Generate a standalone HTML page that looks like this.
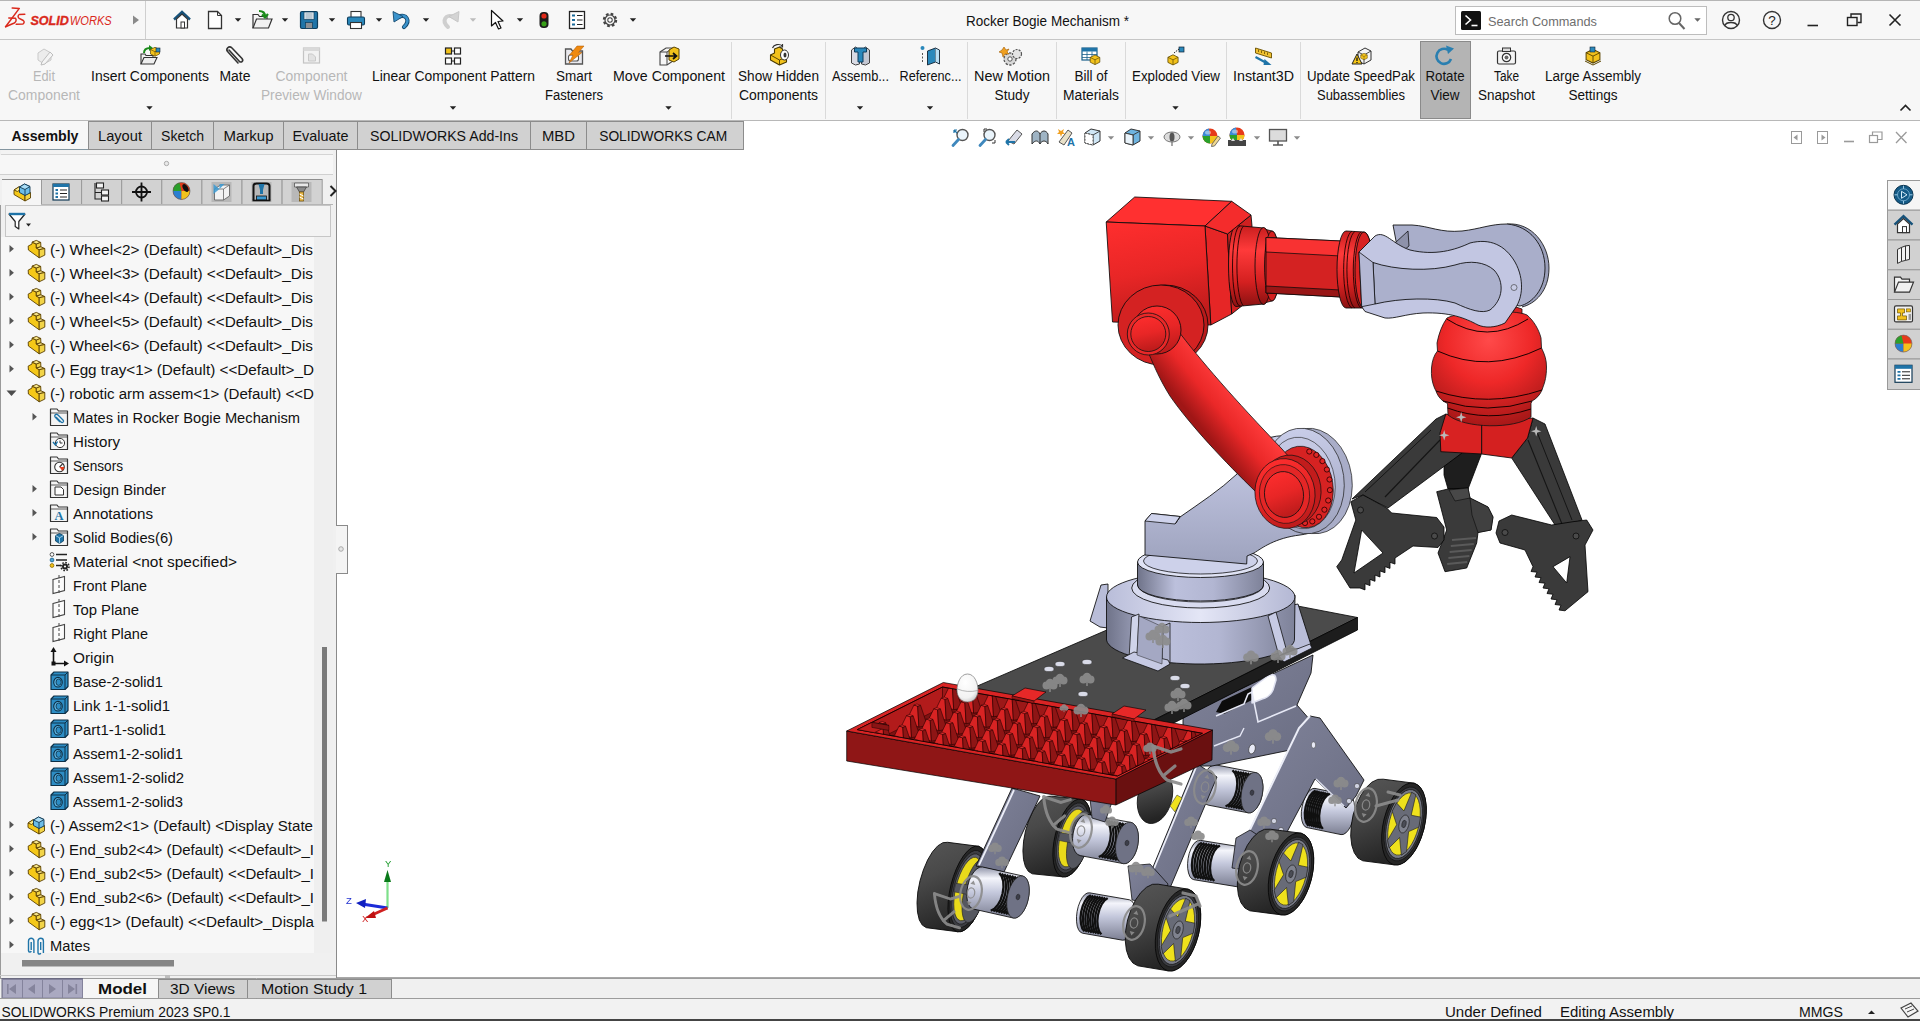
<!DOCTYPE html>
<html lang="en">
<head>
<meta charset="utf-8">
<title>Rocker Bogie Mechanism - SOLIDWORKS</title>
<style>
*{box-sizing:border-box;margin:0;padding:0}
html,body{width:1920px;height:1021px;overflow:hidden;background:#fff}
body{font-family:"Liberation Sans",sans-serif;font-size:14px;color:#111;position:relative}
svg{display:block;overflow:hidden}
#titlebar{position:absolute;left:0;top:0;width:1920px;height:40px;background:#f7f7f7;border-top:1px solid #b5b5b5;border-bottom:1px solid #c6c6c6}
#ribbonbg{position:absolute;left:0;top:40px;width:1920px;height:81px;background:#f7f7f7;border-bottom:1px solid #b8b8b8}
</style>
</head>
<body>
<div id="titlebar"></div>
<div id="ribbonbg"></div>
<svg width="1920" height="1021" viewBox="0 0 1920 1021" style="position:absolute;left:0;top:0">
<defs>
<linearGradient id="gTyre" x1="0" y1="0" x2="0.35" y2="1"><stop offset="0" stop-color="#565656"/><stop offset="0.4" stop-color="#494949"/><stop offset="1" stop-color="#242424"/></linearGradient>
<linearGradient id="gMotor" x1="0" y1="0" x2="0" y2="1"><stop offset="0" stop-color="#8f93a8"/><stop offset="0.22" stop-color="#f4f5fb"/><stop offset="0.5" stop-color="#c4c8dc"/><stop offset="1" stop-color="#7c7f92"/></linearGradient>
<linearGradient id="gPlate" x1="0" y1="0" x2="1" y2="1"><stop offset="0" stop-color="#80839a"/><stop offset="1" stop-color="#6a6d82"/></linearGradient>
<linearGradient id="gRedH" x1="0" y1="0" x2="0" y2="1"><stop offset="0" stop-color="#ff3030"/><stop offset="0.6" stop-color="#e22424"/><stop offset="1" stop-color="#b81a1a"/></linearGradient>
<linearGradient id="gRedBox" x1="0" y1="0" x2="0.2" y2="1"><stop offset="0" stop-color="#ff2e2e"/><stop offset="0.55" stop-color="#e82626"/><stop offset="1" stop-color="#c01c1c"/></linearGradient>
<linearGradient id="gRedCyl" x1="0" y1="0" x2="0" y2="1"><stop offset="0" stop-color="#c81e1e"/><stop offset="0.3" stop-color="#ff3a3a"/><stop offset="0.7" stop-color="#d42020"/><stop offset="1" stop-color="#8a1212"/></linearGradient>
<linearGradient id="gArm" gradientUnits="userSpaceOnUse" x1="1250" y1="375" x2="1195" y2="420"><stop offset="0" stop-color="#b81a1a"/><stop offset="0.3" stop-color="#ff3c3c"/><stop offset="0.65" stop-color="#ea2828"/><stop offset="1" stop-color="#a01616"/></linearGradient>
<radialGradient id="gDome" cx="0.5" cy="0.25" r="0.75"><stop offset="0" stop-color="#ff4a4a"/><stop offset="0.5" stop-color="#ee2828"/><stop offset="1" stop-color="#a81818"/></radialGradient>
<linearGradient id="gGrey" x1="0" y1="0" x2="0" y2="1"><stop offset="0" stop-color="#c9cde9"/><stop offset="1" stop-color="#9ea3be"/></linearGradient>
<linearGradient id="gGreyH" x1="0" y1="0" x2="1" y2="0"><stop offset="0" stop-color="#6f7389"/><stop offset="0.3" stop-color="#bcc0dc"/><stop offset="0.6" stop-color="#b2b6d2"/><stop offset="1" stop-color="#7e8299"/></linearGradient>
<linearGradient id="gGreyTop" x1="0" y1="0" x2="1" y2="0"><stop offset="0" stop-color="#b9bdd9"/><stop offset="0.5" stop-color="#e4e6f6"/><stop offset="1" stop-color="#b4b8d4"/></linearGradient>
<linearGradient id="gDark" x1="0" y1="0" x2="1" y2="1"><stop offset="0" stop-color="#444"/><stop offset="1" stop-color="#2c2c2c"/></linearGradient>
</defs>
<ellipse cx="1155.0" cy="797.0" rx="17.0" ry="27.0" fill="url(#gTyre)" stroke="#111" stroke-width="0.8" transform="rotate(14 1155.0 797.0)" />
<polygon points="1301.3,816.2 1301.4,811.3 1302.2,806.2 1303.5,801.2 1305.4,796.6 1307.6,792.9 1310.1,790.1 1312.6,788.6 1315.0,788.4 1349.0,795.4 1351.2,796.5 1352.9,798.9 1354.1,802.4 1354.7,806.8 1354.6,811.7 1353.8,816.8 1352.5,821.8 1350.6,826.4 1348.4,830.1 1345.9,832.9 1343.4,834.4 1341.0,834.6 1307.0,827.6 1304.8,826.5 1303.1,824.1 1301.9,820.6" fill="url(#gMotor)" stroke="#0a0a0a" stroke-width="0.85" stroke-linejoin="round" />
<polyline points="1308.5,825.8 1306.4,822.8 1305.1,818.4 1304.8,812.8 1305.6,806.9 1307.3,801.1 1309.7,796.2 1312.6,792.5 1315.7,790.6" fill="none" stroke="#101010" stroke-width="2.3"/>
<polyline points="1310.5,826.2 1308.4,823.3 1307.2,818.8 1306.9,813.3 1307.6,807.3 1309.3,801.5 1311.7,796.6 1314.7,793.0 1317.8,791.1" fill="none" stroke="#101010" stroke-width="2.3"/>
<polyline points="1312.6,826.7 1310.5,823.7 1309.2,819.2 1308.9,813.7 1309.7,807.7 1311.3,802.0 1313.8,797.0 1316.7,793.4 1319.8,791.5" fill="none" stroke="#101010" stroke-width="2.3"/>
<polyline points="1314.6,827.1 1312.5,824.1 1311.2,819.6 1311.0,814.1 1311.7,808.1 1313.4,802.4 1315.8,797.4 1318.7,793.8 1321.9,791.9" fill="none" stroke="#101010" stroke-width="2.3"/>
<polyline points="1316.7,827.5 1314.5,824.5 1313.3,820.0 1313.0,814.5 1313.7,808.6 1315.4,802.8 1317.8,797.8 1320.8,794.2 1323.9,792.3" fill="none" stroke="#101010" stroke-width="2.3"/>
<polyline points="1318.7,827.9 1316.6,824.9 1315.3,820.5 1315.0,814.9 1315.8,809.0 1317.5,803.2 1319.9,798.3 1322.8,794.6 1325.9,792.7" fill="none" stroke="#101010" stroke-width="2.3"/>
<polyline points="1320.7,828.3 1318.6,825.4 1317.4,820.9 1317.1,815.4 1317.8,809.4 1319.5,803.6 1321.9,798.7 1324.9,795.1 1328.0,793.2" fill="none" stroke="#101010" stroke-width="2.3"/>
<polyline points="1322.8,828.8 1320.7,825.8 1319.4,821.3 1319.1,815.8 1319.9,809.8 1321.5,804.1 1324.0,799.1 1326.9,795.5 1330.0,793.6" fill="none" stroke="#101010" stroke-width="2.3"/>
<polygon points="1201.0,788.3 1201.7,783.0 1203.0,777.9 1205.0,773.2 1207.5,769.4 1210.2,766.6 1213.1,765.0 1215.9,764.9 1255.9,772.6 1258.4,773.8 1260.5,776.3 1262.0,779.9 1262.9,784.4 1263.0,789.4 1262.3,794.7 1261.0,799.8 1259.0,804.5 1256.5,808.3 1253.8,811.1 1250.9,812.7 1248.1,812.8 1208.1,805.1 1205.6,803.9 1203.5,801.4 1202.0,797.8 1201.1,793.4" fill="url(#gMotor)" stroke="#0a0a0a" stroke-width="0.85" stroke-linejoin="round" />
<polyline points="1232.5,770.2 1235.1,773.3 1236.8,777.9 1237.3,783.6 1236.7,789.8 1235.0,795.7 1232.4,800.7 1229.1,804.4 1225.6,806.4" fill="none" stroke="#101010" stroke-width="2.3"/>
<polyline points="1235.1,770.7 1237.6,773.8 1239.3,778.4 1239.8,784.1 1239.2,790.2 1237.5,796.2 1234.9,801.2 1231.6,804.9 1228.1,806.9" fill="none" stroke="#101010" stroke-width="2.3"/>
<polyline points="1237.6,771.2 1240.2,774.3 1241.8,778.9 1242.4,784.6 1241.7,790.7 1240.0,796.6 1237.4,801.7 1234.2,805.4 1230.6,807.3" fill="none" stroke="#101010" stroke-width="2.3"/>
<polyline points="1240.1,771.7 1242.7,774.8 1244.3,779.4 1244.9,785.1 1244.3,791.2 1242.5,797.1 1239.9,802.2 1236.7,805.9 1233.1,807.8" fill="none" stroke="#101010" stroke-width="2.3"/>
<polyline points="1242.6,772.1 1245.2,775.2 1246.8,779.9 1247.4,785.6 1246.8,791.7 1245.1,797.6 1242.4,802.7 1239.2,806.4 1235.6,808.3" fill="none" stroke="#101010" stroke-width="2.3"/>
<polyline points="1245.1,772.6 1247.7,775.7 1249.3,780.4 1249.9,786.1 1249.3,792.2 1247.6,798.1 1245.0,803.2 1241.7,806.9 1238.2,808.8" fill="none" stroke="#101010" stroke-width="2.3"/>
<polyline points="1247.6,773.1 1250.2,776.2 1251.9,780.9 1252.4,786.5 1251.8,792.7 1250.1,798.6 1247.5,803.6 1244.2,807.3 1240.7,809.3" fill="none" stroke="#101010" stroke-width="2.3"/>
<polyline points="1250.1,773.6 1252.7,776.7 1254.4,781.3 1254.9,787.0 1254.3,793.1 1252.6,799.1 1250.0,804.1 1246.7,807.8 1243.2,809.8" fill="none" stroke="#101010" stroke-width="2.3"/>
<ellipse cx="1252.0" cy="792.7" rx="10.5" ry="20.5" fill="#6f7285" stroke="#222" stroke-width="0.7" transform="rotate(10.896152141141194 1252.0 792.7)" />
<ellipse cx="1252.0" cy="792.7" rx="1.9" ry="2.7" fill="#3c3e4a" stroke="#222" stroke-width="0.5" transform="rotate(10.896152141141194 1252.0 792.7)" />
<polygon points="1183.0,716.0 1313.0,655.0 1311.0,673.0 1297.0,705.0 1311.0,721.0 1300.0,748.0 1212.0,766.0 1196.0,766.0 1183.0,748.0" fill="url(#gPlate)" stroke="#0a0a0a" stroke-width="0.85" stroke-linejoin="round" />
<polygon points="1216.0,712.0 1222.0,701.0 1252.0,687.0 1252.0,700.0 1224.0,714.0" fill="#0c0c0c" />
<path d="M1252,688 L1268,676 Q1276,672 1276,680 L1273,690 Q1270,697 1262,699 L1252,703 Z" fill="#fff" stroke="#dfe1f0" stroke-width="1.5" stroke-linejoin="round" />
<polyline points="1216,716 1244,704 1248,694 1252,692 1258,722 1296,706" fill="none" stroke="#e6e8f5" stroke-width="1.6"/>
<polyline points="1214,746 1240,736 1244,728" fill="none" stroke="#e6e8f5" stroke-width="1.4"/>
<ellipse cx="1252.0" cy="749.0" rx="3.2" ry="5.0" fill="#e8eaf6" stroke="#333" stroke-width="0.6" transform="rotate(15 1252.0 749.0)" />
<polygon points="975.0,687.0 1204.0,588.0 1357.5,617.5 1140.0,727.0 1000.0,702.0" fill="#4b4b4b" stroke="#0a0a0a" stroke-width="0.85" stroke-linejoin="round" />
<polygon points="1357.5,617.5 1357.5,630.0 1150.0,735.0 1150.0,722.0" fill="#1d1d1d" stroke="#000" stroke-width="0.8" stroke-linejoin="round" />
<ellipse cx="1049.0" cy="669.0" rx="5.0" ry="2.6" fill="#d9dbe8" stroke="#333" stroke-width="0.5" />
<ellipse cx="1060.0" cy="664.0" rx="5.0" ry="2.6" fill="#d9dbe8" stroke="#333" stroke-width="0.5" />
<ellipse cx="1087.0" cy="662.0" rx="5.0" ry="2.6" fill="#d9dbe8" stroke="#333" stroke-width="0.5" />
<ellipse cx="1083.0" cy="694.0" rx="5.0" ry="2.6" fill="#d9dbe8" stroke="#333" stroke-width="0.5" />
<ellipse cx="1175.0" cy="678.0" rx="5.0" ry="2.6" fill="#d9dbe8" stroke="#333" stroke-width="0.5" />
<ellipse cx="1185.0" cy="686.0" rx="5.0" ry="2.6" fill="#d9dbe8" stroke="#333" stroke-width="0.5" />
<polygon points="1299.0,728.0 1310.0,716.0 1320.0,718.0 1364.0,780.0 1356.0,796.0 1346.0,808.0 1315.0,779.0 1287.0,832.0 1268.0,842.0 1246.0,838.0" fill="url(#gPlate)" stroke="#0a0a0a" stroke-width="0.85" stroke-linejoin="round" />
<polyline points="1246,838 1299,728 1310,716" fill="none" stroke="#eceef8" stroke-width="2"/>
<polyline points="1316,779 1344,806" fill="none" stroke="#d8dbea" stroke-width="1.6"/>
<ellipse cx="1313.5" cy="745.0" rx="2.2" ry="3.2" fill="#e8eaf6" stroke="#333" stroke-width="0.5" />
<ellipse cx="1357.0" cy="786.0" rx="2.6" ry="2.6" fill="#d0d3e2" stroke="#333" stroke-width="0.5" />
<ellipse cx="1349.0" cy="801.0" rx="2.6" ry="2.6" fill="#d0d3e2" stroke="#333" stroke-width="0.5" />
<ellipse cx="1274.0" cy="821.0" rx="2.6" ry="2.6" fill="#d0d3e2" stroke="#333" stroke-width="0.5" />
<ellipse cx="1281.0" cy="830.0" rx="2.6" ry="2.6" fill="#d0d3e2" stroke="#333" stroke-width="0.5" />
<polygon points="1350.7,836.1 1351.2,825.8 1353.1,815.0 1356.4,804.7 1360.8,795.3 1366.1,787.7 1371.8,782.2 1377.7,779.4 1383.2,779.2 1414.2,783.2 1419.0,785.9 1422.7,791.2 1425.2,798.7 1426.3,807.9 1425.8,818.2 1423.9,829.0 1420.6,839.3 1416.2,848.7 1410.9,856.3 1405.2,861.8 1399.3,864.6 1393.8,864.8 1362.8,860.8 1358.0,858.1 1354.3,852.8 1351.8,845.3" fill="url(#gTyre)" stroke="#0a0a0a" stroke-width="0.9" stroke-linejoin="round" />
<ellipse cx="1404.0" cy="824.0" rx="20.5" ry="42.0" fill="#262626" stroke="#0a0a0a" stroke-width="0.9" transform="rotate(14 1404.0 824.0)" />
<ellipse cx="1404.0" cy="824.0" rx="18.4" ry="37.8" fill="#3c3d42" stroke="#111" stroke-width="0.7" transform="rotate(14 1404.0 824.0)" />
<ellipse cx="1404.0" cy="824.0" rx="16.8" ry="35.3" fill="#777a86" stroke="#111" stroke-width="0.7" transform="rotate(14 1404.0 824.0)" />
<ellipse cx="1404.0" cy="824.0" rx="14.8" ry="31.9" fill="#efe11c" stroke="#222" stroke-width="0.6" transform="rotate(14 1404.0 824.0)" />
<polygon points="1411.7,792.2 1415.9,794.7 1411.2,815.2 1420.5,817.1 1418.9,827.1 1408.6,831.6 1406.5,851.6 1401.3,855.2 1399.6,837.5 1389.1,847.9 1387.5,840.2 1396.7,824.7 1392.2,811.2 1396.5,802.8 1403.9,811.0" fill="#686b77" stroke="#1a1a1a" stroke-width="0.6" stroke-linejoin="round" />
<ellipse cx="1404.0" cy="824.0" rx="4.9" ry="9.2" fill="#7f828e" stroke="#1a1a1a" stroke-width="0.6" transform="rotate(14 1404.0 824.0)" />
<ellipse cx="1404.0" cy="824.0" rx="2.1" ry="3.8" fill="#4a4c55" stroke="#1a1a1a" stroke-width="0.5" transform="rotate(14 1404.0 824.0)" />
<polygon points="1022.9,850.8 1023.6,841.1 1025.5,830.9 1028.6,821.0 1032.5,812.0 1037.2,804.6 1042.1,799.3 1047.1,796.5 1051.7,796.2 1081.7,799.2 1085.6,801.6 1088.6,806.4 1090.5,813.5 1091.1,822.2 1090.4,831.9 1088.5,842.1 1085.4,852.0 1081.5,861.0 1076.8,868.4 1071.9,873.7 1066.9,876.5 1062.3,876.8 1032.3,873.8 1028.4,871.4 1025.4,866.6 1023.5,859.5" fill="url(#gTyre)" stroke="#0a0a0a" stroke-width="0.9" stroke-linejoin="round" />
<ellipse cx="1072.0" cy="838.0" rx="17.0" ry="40.0" fill="#262626" stroke="#0a0a0a" stroke-width="0.9" transform="rotate(14 1072.0 838.0)" />
<ellipse cx="1072.0" cy="838.0" rx="15.3" ry="36.0" fill="#3c3d42" stroke="#111" stroke-width="0.7" transform="rotate(14 1072.0 838.0)" />
<ellipse cx="1072.0" cy="838.0" rx="13.6" ry="32.8" fill="#5d5f69" stroke="#111" stroke-width="0.6" transform="rotate(14 1072.0 838.0)" />
<ellipse cx="1072.0" cy="838.0" rx="11.9" ry="29.6" fill="#e9da1a" stroke="#222" stroke-width="0.6" transform="rotate(14 1072.0 838.0)" />
<ellipse cx="1078.9" cy="839.7" rx="10.5" ry="29.6" fill="#55575f" stroke="#222" stroke-width="0.6" transform="rotate(14 1078.9 839.7)" />
<polygon points="1060.2,832.6 1076.3,834.9 1074.1,843.5 1058.3,840.3" fill="#55575f" stroke="#222" stroke-width="0.5" stroke-linejoin="round" />
<polygon points="1072.6,838.4 1073.2,833.0 1074.5,827.7 1076.5,822.9 1079.1,819.0 1081.9,816.1 1084.9,814.5 1087.8,814.4 1130.8,822.4 1133.5,823.6 1135.7,826.1 1137.4,829.8 1138.3,834.4 1138.4,839.6 1137.8,845.0 1136.5,850.3 1134.5,855.1 1131.9,859.0 1129.1,861.9 1126.1,863.5 1123.2,863.6 1080.2,855.6 1077.5,854.4 1075.3,851.9 1073.6,848.2 1072.7,843.6" fill="url(#gMotor)" stroke="#0a0a0a" stroke-width="0.85" stroke-linejoin="round" />
<polyline points="1105.7,819.9 1108.5,823.0 1110.2,827.8 1110.9,833.6 1110.3,839.9 1108.6,846.0 1105.9,851.2 1102.5,855.0 1098.8,856.9" fill="none" stroke="#101010" stroke-width="2.3"/>
<polyline points="1108.4,820.4 1111.2,823.5 1112.9,828.3 1113.6,834.1 1113.0,840.4 1111.3,846.5 1108.6,851.7 1105.2,855.5 1101.5,857.4" fill="none" stroke="#101010" stroke-width="2.3"/>
<polyline points="1111.1,820.9 1113.9,824.0 1115.6,828.8 1116.3,834.6 1115.7,840.9 1114.0,847.0 1111.3,852.2 1107.9,856.0 1104.2,858.0" fill="none" stroke="#101010" stroke-width="2.3"/>
<polyline points="1113.8,821.4 1116.6,824.5 1118.3,829.3 1119.0,835.1 1118.4,841.4 1116.7,847.5 1114.0,852.7 1110.6,856.5 1106.9,858.5" fill="none" stroke="#101010" stroke-width="2.3"/>
<polyline points="1116.5,821.9 1119.3,825.0 1121.0,829.8 1121.7,835.6 1121.1,841.9 1119.4,848.0 1116.7,853.2 1113.3,857.0 1109.6,859.0" fill="none" stroke="#101010" stroke-width="2.3"/>
<polyline points="1119.2,822.4 1122.0,825.5 1123.7,830.3 1124.4,836.1 1123.8,842.4 1122.1,848.5 1119.4,853.7 1116.0,857.5 1112.3,859.5" fill="none" stroke="#101010" stroke-width="2.3"/>
<polyline points="1121.9,822.9 1124.7,826.1 1126.5,830.8 1127.1,836.6 1126.5,842.9 1124.8,849.0 1122.1,854.2 1118.7,858.0 1115.0,860.0" fill="none" stroke="#101010" stroke-width="2.3"/>
<polyline points="1124.6,823.4 1127.4,826.6 1129.2,831.3 1129.8,837.1 1129.2,843.4 1127.5,849.5 1124.8,854.7 1121.4,858.5 1117.7,860.5" fill="none" stroke="#101010" stroke-width="2.3"/>
<ellipse cx="1127.0" cy="843.0" rx="11.0" ry="21.0" fill="#6f7285" stroke="#222" stroke-width="0.7" transform="rotate(10.53918372862823 1127.0 843.0)" />
<ellipse cx="1127.0" cy="843.0" rx="2.0" ry="2.7" fill="#3c3e4a" stroke="#222" stroke-width="0.5" transform="rotate(10.53918372862823 1127.0 843.0)" />
<polygon points="1090.0,798.0 1112.0,802.0 1105.0,822.0 1092.0,818.0" fill="url(#gPlate)" stroke="#0a0a0a" stroke-width="0.75" stroke-linejoin="round" />
<polygon points="917.0,902.7 917.8,892.0 920.0,880.8 923.4,869.9 927.6,860.0 932.5,851.8 937.7,845.9 942.9,842.7 947.6,842.3 978.6,846.3 982.7,848.9 985.7,854.1 987.5,861.8 988.0,871.3 987.2,882.0 985.0,893.2 981.6,904.1 977.4,914.0 972.5,922.2 967.3,928.1 962.1,931.3 957.4,931.7 926.4,927.7 922.3,925.1 919.3,919.9 917.5,912.2" fill="url(#gTyre)" stroke="#0a0a0a" stroke-width="0.9" stroke-linejoin="round" />
<ellipse cx="968.0" cy="889.0" rx="17.5" ry="44.0" fill="#262626" stroke="#0a0a0a" stroke-width="0.9" transform="rotate(14 968.0 889.0)" />
<ellipse cx="968.0" cy="889.0" rx="15.8" ry="39.6" fill="#3c3d42" stroke="#111" stroke-width="0.7" transform="rotate(14 968.0 889.0)" />
<ellipse cx="968.0" cy="889.0" rx="14.0" ry="36.1" fill="#5d5f69" stroke="#111" stroke-width="0.6" transform="rotate(14 968.0 889.0)" />
<ellipse cx="968.0" cy="889.0" rx="12.2" ry="32.6" fill="#e9da1a" stroke="#222" stroke-width="0.6" transform="rotate(14 968.0 889.0)" />
<ellipse cx="975.1" cy="890.8" rx="10.8" ry="32.6" fill="#55575f" stroke="#222" stroke-width="0.6" transform="rotate(14 975.1 890.8)" />
<polygon points="955.9,883.3 972.5,885.6 970.1,895.0 953.8,891.8" fill="#55575f" stroke="#222" stroke-width="0.5" stroke-linejoin="round" />
<polygon points="1012.0,788.0 1040.0,796.0 1004.0,872.0 976.0,866.0" fill="url(#gPlate)" stroke="#0a0a0a" stroke-width="0.85" stroke-linejoin="round" />
<line x1="1014.0" y1="790.0" x2="979.0" y2="865.0" stroke="#eceef8" stroke-width="1.8" />
<polygon points="966.8,896.5 966.9,891.2 967.8,885.7 969.3,880.3 971.5,875.5 974.1,871.5 977.0,868.7 979.9,867.1 982.7,867.0 1022.7,876.0 1025.2,877.3 1027.2,880.0 1028.6,883.8 1029.2,888.5 1029.1,893.8 1028.2,899.3 1026.7,904.7 1024.5,909.5 1021.9,913.5 1019.0,916.3 1016.1,917.9 1013.3,918.0 973.3,909.0 970.8,907.7 968.8,905.0 967.4,901.2" fill="url(#gMotor)" stroke="#0a0a0a" stroke-width="0.85" stroke-linejoin="round" />
<polyline points="999.3,873.0 1001.7,876.3 1003.2,881.2 1003.5,887.2 1002.6,893.5 1000.7,899.7 997.9,904.9 994.4,908.7 990.8,910.7" fill="none" stroke="#101010" stroke-width="2.3"/>
<polyline points="1001.8,873.6 1004.3,876.9 1005.7,881.8 1006.0,887.7 1005.2,894.1 1003.2,900.3 1000.4,905.5 997.0,909.3 993.3,911.2" fill="none" stroke="#101010" stroke-width="2.3"/>
<polyline points="1004.3,874.1 1006.8,877.4 1008.2,882.3 1008.5,888.3 1007.7,894.7 1005.7,900.8 1002.9,906.1 999.5,909.9 995.8,911.8" fill="none" stroke="#101010" stroke-width="2.3"/>
<polyline points="1006.8,874.7 1009.3,878.0 1010.7,882.9 1011.1,888.8 1010.2,895.2 1008.2,901.4 1005.4,906.6 1002.0,910.4 998.4,912.4" fill="none" stroke="#101010" stroke-width="2.3"/>
<polyline points="1009.3,875.3 1011.8,878.6 1013.3,883.5 1013.6,889.4 1012.7,895.8 1010.7,902.0 1007.9,907.2 1004.5,911.0 1000.9,912.9" fill="none" stroke="#101010" stroke-width="2.3"/>
<polyline points="1011.9,875.8 1014.3,879.1 1015.8,884.0 1016.1,890.0 1015.2,896.4 1013.3,902.5 1010.4,907.8 1007.0,911.6 1003.4,913.5" fill="none" stroke="#101010" stroke-width="2.3"/>
<polyline points="1014.4,876.4 1016.8,879.7 1018.3,884.6 1018.6,890.5 1017.7,896.9 1015.8,903.1 1012.9,908.3 1009.5,912.1 1005.9,914.1" fill="none" stroke="#101010" stroke-width="2.3"/>
<polyline points="1016.9,877.0 1019.3,880.3 1020.8,885.2 1021.1,891.1 1020.2,897.5 1018.3,903.7 1015.5,908.9 1012.0,912.7 1008.4,914.6" fill="none" stroke="#101010" stroke-width="2.3"/>
<ellipse cx="1018.0" cy="897.0" rx="10.5" ry="21.5" fill="#6f7285" stroke="#222" stroke-width="0.7" transform="rotate(12.68038349181982 1018.0 897.0)" />
<ellipse cx="1018.0" cy="897.0" rx="1.9" ry="2.8" fill="#3c3e4a" stroke="#222" stroke-width="0.5" transform="rotate(12.68038349181982 1018.0 897.0)" />
<polygon points="1196.0,763.0 1217.0,777.0 1170.0,888.0 1146.0,884.0" fill="url(#gPlate)" stroke="#0a0a0a" stroke-width="0.85" stroke-linejoin="round" />
<line x1="1197.0" y1="765.0" x2="1148.0" y2="883.0" stroke="#eceef8" stroke-width="1.8" />
<polygon points="1170.0,806.0 1177.0,795.0 1182.0,798.0 1175.0,812.0" fill="#f0e21e" stroke="#222" stroke-width="0.5" stroke-linejoin="round" />
<polygon points="1128.0,866.0 1150.0,864.0 1168.0,884.0 1160.0,905.0 1132.0,900.0" fill="url(#gPlate)" stroke="#0a0a0a" stroke-width="0.75" stroke-linejoin="round" />
<polygon points="1076.5,916.7 1077.1,911.5 1078.3,906.3 1080.1,901.6 1082.2,897.6 1084.6,894.7 1087.1,893.1 1089.5,892.8 1129.5,899.8 1131.7,900.9 1133.5,903.3 1134.8,906.8 1135.4,911.2 1135.5,916.3 1134.9,921.5 1133.7,926.7 1131.9,931.4 1129.8,935.4 1127.4,938.3 1124.9,939.9 1122.5,940.2 1082.5,933.2 1080.3,932.1 1078.5,929.7 1077.2,926.2 1076.6,921.8" fill="url(#gMotor)" stroke="#0a0a0a" stroke-width="0.85" stroke-linejoin="round" />
<polyline points="1084.5,931.4 1082.3,928.5 1081.0,923.9 1080.5,918.3 1081.1,912.1 1082.7,906.2 1085.0,901.0 1087.8,897.2 1090.9,895.2" fill="none" stroke="#101010" stroke-width="2.3"/>
<polyline points="1086.9,931.9 1084.7,928.9 1083.4,924.3 1082.9,918.7 1083.5,912.6 1085.1,906.6 1087.4,901.5 1090.2,897.6 1093.3,895.6" fill="none" stroke="#101010" stroke-width="2.3"/>
<polyline points="1089.3,932.3 1087.1,929.3 1085.8,924.7 1085.3,919.1 1085.9,913.0 1087.5,907.0 1089.8,901.9 1092.6,898.1 1095.7,896.0" fill="none" stroke="#101010" stroke-width="2.3"/>
<polyline points="1091.7,932.7 1089.5,929.7 1088.2,925.2 1087.7,919.5 1088.3,913.4 1089.9,907.5 1092.2,902.3 1095.0,898.5 1098.1,896.4" fill="none" stroke="#101010" stroke-width="2.3"/>
<polyline points="1094.1,933.1 1091.9,930.1 1090.6,925.6 1090.1,919.9 1090.7,913.8 1092.3,907.9 1094.6,902.7 1097.4,898.9 1100.5,896.8" fill="none" stroke="#101010" stroke-width="2.3"/>
<polyline points="1096.5,933.5 1094.3,930.6 1093.0,926.0 1092.5,920.4 1093.1,914.2 1094.7,908.3 1097.0,903.1 1099.8,899.3 1102.9,897.3" fill="none" stroke="#101010" stroke-width="2.3"/>
<polyline points="1098.9,934.0 1096.7,931.0 1095.4,926.4 1094.9,920.8 1095.5,914.7 1097.1,908.7 1099.4,903.6 1102.2,899.7 1105.3,897.7" fill="none" stroke="#101010" stroke-width="2.3"/>
<polyline points="1101.3,934.4 1099.1,931.4 1097.8,926.8 1097.3,921.2 1097.9,915.1 1099.5,909.1 1101.8,904.0 1104.6,900.2 1107.7,898.1" fill="none" stroke="#101010" stroke-width="2.3"/>
<polygon points="1125.3,941.0 1125.7,930.6 1127.6,919.9 1131.0,909.5 1135.4,900.2 1140.8,892.6 1146.6,887.2 1152.5,884.3 1158.2,884.2 1188.2,889.2 1193.1,892.0 1197.0,897.2 1199.6,904.8 1200.7,914.0 1200.3,924.4 1198.4,935.1 1195.0,945.5 1190.6,954.8 1185.2,962.4 1179.4,967.8 1173.5,970.7 1167.8,970.8 1137.8,965.8 1132.9,963.0 1129.0,957.8 1126.4,950.2" fill="url(#gTyre)" stroke="#0a0a0a" stroke-width="0.9" stroke-linejoin="round" />
<ellipse cx="1178.0" cy="930.0" rx="21.0" ry="42.0" fill="#262626" stroke="#0a0a0a" stroke-width="0.9" transform="rotate(14 1178.0 930.0)" />
<ellipse cx="1178.0" cy="930.0" rx="18.9" ry="37.8" fill="#3c3d42" stroke="#111" stroke-width="0.7" transform="rotate(14 1178.0 930.0)" />
<ellipse cx="1178.0" cy="930.0" rx="17.2" ry="35.3" fill="#777a86" stroke="#111" stroke-width="0.7" transform="rotate(14 1178.0 930.0)" />
<ellipse cx="1178.0" cy="930.0" rx="15.1" ry="31.9" fill="#efe11c" stroke="#222" stroke-width="0.6" transform="rotate(14 1178.0 930.0)" />
<polygon points="1185.7,898.2 1190.0,900.7 1185.3,921.2 1194.8,923.2 1193.2,933.2 1182.7,937.6 1180.7,957.6 1175.4,961.3 1173.6,943.5 1162.9,953.9 1161.2,946.1 1170.6,930.7 1165.9,917.1 1170.2,908.7 1177.8,917.0" fill="#686b77" stroke="#1a1a1a" stroke-width="0.6" stroke-linejoin="round" />
<ellipse cx="1178.0" cy="930.0" rx="5.0" ry="9.2" fill="#7f828e" stroke="#1a1a1a" stroke-width="0.6" transform="rotate(14 1178.0 930.0)" />
<ellipse cx="1178.0" cy="930.0" rx="2.1" ry="3.8" fill="#4a4c55" stroke="#1a1a1a" stroke-width="0.5" transform="rotate(14 1178.0 930.0)" />
<polygon points="1187.6,863.7 1188.1,858.5 1189.2,853.5 1190.9,848.9 1193.0,845.0 1195.3,842.2 1197.8,840.6 1200.2,840.3 1243.2,847.3 1245.4,848.3 1247.2,850.6 1248.5,854.1 1249.3,858.4 1249.4,863.3 1248.9,868.5 1247.8,873.5 1246.1,878.1 1244.0,882.0 1241.7,884.8 1239.2,886.4 1236.8,886.7 1193.8,879.7 1191.6,878.7 1189.8,876.4 1188.5,872.9 1187.7,868.6" fill="url(#gMotor)" stroke="#0a0a0a" stroke-width="0.85" stroke-linejoin="round" />
<polyline points="1196.1,878.1 1193.9,875.2 1192.4,870.7 1191.9,865.2 1192.4,859.3 1193.8,853.4 1196.1,848.4 1198.8,844.6 1201.9,842.6" fill="none" stroke="#101010" stroke-width="2.3"/>
<polyline points="1198.7,878.5 1196.5,875.6 1195.0,871.1 1194.5,865.7 1195.0,859.7 1196.4,853.8 1198.7,848.8 1201.4,845.1 1204.5,843.0" fill="none" stroke="#101010" stroke-width="2.3"/>
<polyline points="1201.3,878.9 1199.0,876.0 1197.6,871.6 1197.1,866.1 1197.6,860.1 1199.0,854.3 1201.2,849.2 1204.0,845.5 1207.0,843.4" fill="none" stroke="#101010" stroke-width="2.3"/>
<polyline points="1203.9,879.3 1201.6,876.4 1200.2,872.0 1199.7,866.5 1200.2,860.5 1201.6,854.7 1203.8,849.6 1206.6,845.9 1209.6,843.9" fill="none" stroke="#101010" stroke-width="2.3"/>
<polyline points="1206.4,879.7 1204.2,876.8 1202.8,872.4 1202.2,866.9 1202.7,860.9 1204.2,855.1 1206.4,850.1 1209.2,846.3 1212.2,844.3" fill="none" stroke="#101010" stroke-width="2.3"/>
<polyline points="1209.0,880.2 1206.8,877.3 1205.3,872.8 1204.8,867.3 1205.3,861.4 1206.7,855.5 1209.0,850.5 1211.7,846.7 1214.8,844.7" fill="none" stroke="#101010" stroke-width="2.3"/>
<polyline points="1211.6,880.6 1209.4,877.7 1207.9,873.2 1207.4,867.8 1207.9,861.8 1209.3,855.9 1211.6,850.9 1214.3,847.2 1217.4,845.1" fill="none" stroke="#101010" stroke-width="2.3"/>
<polyline points="1214.2,881.0 1211.9,878.1 1210.5,873.7 1210.0,868.2 1210.5,862.2 1211.9,856.4 1214.1,851.3 1216.9,847.6 1219.9,845.5" fill="none" stroke="#101010" stroke-width="2.3"/>
<polygon points="1236.0,838.0 1250.0,830.0 1262.0,838.0 1246.0,870.0 1232.0,868.0" fill="url(#gPlate)" stroke="#0a0a0a" stroke-width="0.75" stroke-linejoin="round" />
<polygon points="1237.3,886.0 1237.7,875.6 1239.6,864.9 1243.0,854.5 1247.4,845.2 1252.8,837.6 1258.6,832.2 1264.5,829.3 1270.2,829.2 1301.2,833.2 1306.1,836.0 1310.0,841.2 1312.6,848.8 1313.7,858.0 1313.3,868.4 1311.4,879.1 1308.0,889.5 1303.6,898.8 1298.2,906.4 1292.4,911.8 1286.5,914.7 1280.8,914.8 1249.8,910.8 1244.9,908.0 1241.0,902.8 1238.4,895.2" fill="url(#gTyre)" stroke="#0a0a0a" stroke-width="0.9" stroke-linejoin="round" />
<ellipse cx="1291.0" cy="874.0" rx="21.0" ry="42.0" fill="#262626" stroke="#0a0a0a" stroke-width="0.9" transform="rotate(14 1291.0 874.0)" />
<ellipse cx="1291.0" cy="874.0" rx="18.9" ry="37.8" fill="#3c3d42" stroke="#111" stroke-width="0.7" transform="rotate(14 1291.0 874.0)" />
<ellipse cx="1291.0" cy="874.0" rx="17.2" ry="35.3" fill="#777a86" stroke="#111" stroke-width="0.7" transform="rotate(14 1291.0 874.0)" />
<ellipse cx="1291.0" cy="874.0" rx="15.1" ry="31.9" fill="#efe11c" stroke="#222" stroke-width="0.6" transform="rotate(14 1291.0 874.0)" />
<polygon points="1298.7,842.2 1303.0,844.7 1298.3,865.2 1307.8,867.2 1306.2,877.2 1295.7,881.6 1293.7,901.6 1288.4,905.3 1286.6,887.5 1275.9,897.9 1274.2,890.1 1283.6,874.7 1278.9,861.1 1283.2,852.7 1290.8,861.0" fill="#686b77" stroke="#1a1a1a" stroke-width="0.6" stroke-linejoin="round" />
<ellipse cx="1291.0" cy="874.0" rx="5.0" ry="9.2" fill="#7f828e" stroke="#1a1a1a" stroke-width="0.6" transform="rotate(14 1291.0 874.0)" />
<ellipse cx="1291.0" cy="874.0" rx="2.1" ry="3.8" fill="#4a4c55" stroke="#1a1a1a" stroke-width="0.5" transform="rotate(14 1291.0 874.0)" />
<polygon points="1115.8,779.0 1212.5,730.0 1212.0,760.0 1115.8,805.0" fill="#6a1010" stroke="#000" stroke-width="0.7" stroke-linejoin="round" />
<polygon points="846.7,731.0 1115.8,779.0 1115.8,805.0 846.7,761.0" fill="#8f1616" stroke="#000" stroke-width="0.7" stroke-linejoin="round" />
<polygon points="846.7,731.0 943.3,682.5 1212.5,730.0 1115.8,779.0" fill="#d92424" stroke="#000" stroke-width="0.7" stroke-linejoin="round" />
<clipPath id="trayclip"><polygon points="857.5,729.6 942.5,687.0 1202.4,733.3 1117.4,776.0"/></clipPath>
<polygon points="857.5,729.6 942.5,687.0 1202.4,733.3 1117.4,776.0" fill="#7e1212" stroke="#000" stroke-width="0.6" stroke-linejoin="round" />
<g clip-path="url(#trayclip)">
<polygon points="942.5,687.0 1202.4,733.3 1202.4,753.3 942.5,707.0" fill="#9c1818" stroke="#300" stroke-width="0.5" stroke-linejoin="round" />
<polygon points="857.5,729.6 942.5,687.0 942.5,707.0 857.5,749.6" fill="#b21b1b" stroke="#300" stroke-width="0.5" stroke-linejoin="round" />
<polygon points="940.2,705.4 948.7,687.7 952.5,688.7 953.7,709.7" fill="#d82323" stroke="#2a0000" stroke-width="0.6" stroke-linejoin="round" />
<polygon points="953.7,709.7 952.5,688.7 955.3,687.9 962.2,708.3" fill="#8e1515" stroke="#2a0000" stroke-width="0.6" stroke-linejoin="round" />
<polygon points="948.7,687.7 951.7,686.6 955.3,687.9 952.5,688.7" fill="#e83030" stroke="#2a0000" stroke-width="0.5" stroke-linejoin="round" />
<polygon points="960.1,708.9 968.6,691.2 972.4,692.2 973.6,713.2" fill="#d82323" stroke="#2a0000" stroke-width="0.6" stroke-linejoin="round" />
<polygon points="973.6,713.2 972.4,692.2 975.2,691.4 982.1,711.8" fill="#8e1515" stroke="#2a0000" stroke-width="0.6" stroke-linejoin="round" />
<polygon points="968.6,691.2 971.6,690.1 975.2,691.4 972.4,692.2" fill="#e83030" stroke="#2a0000" stroke-width="0.5" stroke-linejoin="round" />
<polygon points="980.0,712.5 988.5,694.8 992.3,695.8 993.5,716.8" fill="#d82323" stroke="#2a0000" stroke-width="0.6" stroke-linejoin="round" />
<polygon points="993.5,716.8 992.3,695.8 995.1,695.0 1002.0,715.4" fill="#8e1515" stroke="#2a0000" stroke-width="0.6" stroke-linejoin="round" />
<polygon points="988.5,694.8 991.5,693.7 995.1,695.0 992.3,695.8" fill="#e83030" stroke="#2a0000" stroke-width="0.5" stroke-linejoin="round" />
<polygon points="999.9,716.0 1008.4,698.3 1012.2,699.3 1013.4,720.3" fill="#d82323" stroke="#2a0000" stroke-width="0.6" stroke-linejoin="round" />
<polygon points="1013.4,720.3 1012.2,699.3 1015.0,698.5 1021.9,718.9" fill="#8e1515" stroke="#2a0000" stroke-width="0.6" stroke-linejoin="round" />
<polygon points="1008.4,698.3 1011.4,697.2 1015.0,698.5 1012.2,699.3" fill="#e83030" stroke="#2a0000" stroke-width="0.5" stroke-linejoin="round" />
<polygon points="1019.8,719.6 1028.3,701.9 1032.1,702.9 1033.3,723.9" fill="#d82323" stroke="#2a0000" stroke-width="0.6" stroke-linejoin="round" />
<polygon points="1033.3,723.9 1032.1,702.9 1034.9,702.1 1041.8,722.5" fill="#8e1515" stroke="#2a0000" stroke-width="0.6" stroke-linejoin="round" />
<polygon points="1028.3,701.9 1031.3,700.8 1034.9,702.1 1032.1,702.9" fill="#e83030" stroke="#2a0000" stroke-width="0.5" stroke-linejoin="round" />
<polygon points="1039.7,723.1 1048.2,705.4 1052.0,706.4 1053.2,727.4" fill="#d82323" stroke="#2a0000" stroke-width="0.6" stroke-linejoin="round" />
<polygon points="1053.2,727.4 1052.0,706.4 1054.8,705.6 1061.7,726.0" fill="#8e1515" stroke="#2a0000" stroke-width="0.6" stroke-linejoin="round" />
<polygon points="1048.2,705.4 1051.2,704.3 1054.8,705.6 1052.0,706.4" fill="#e83030" stroke="#2a0000" stroke-width="0.5" stroke-linejoin="round" />
<polygon points="1059.6,726.7 1068.1,709.0 1071.9,710.0 1073.1,731.0" fill="#d82323" stroke="#2a0000" stroke-width="0.6" stroke-linejoin="round" />
<polygon points="1073.1,731.0 1071.9,710.0 1074.7,709.2 1081.6,729.6" fill="#8e1515" stroke="#2a0000" stroke-width="0.6" stroke-linejoin="round" />
<polygon points="1068.1,709.0 1071.1,707.9 1074.7,709.2 1071.9,710.0" fill="#e83030" stroke="#2a0000" stroke-width="0.5" stroke-linejoin="round" />
<polygon points="1079.6,730.2 1088.1,712.5 1091.9,713.5 1093.1,734.5" fill="#d82323" stroke="#2a0000" stroke-width="0.6" stroke-linejoin="round" />
<polygon points="1093.1,734.5 1091.9,713.5 1094.7,712.7 1101.6,733.1" fill="#8e1515" stroke="#2a0000" stroke-width="0.6" stroke-linejoin="round" />
<polygon points="1088.1,712.5 1091.1,711.4 1094.7,712.7 1091.9,713.5" fill="#e83030" stroke="#2a0000" stroke-width="0.5" stroke-linejoin="round" />
<polygon points="1099.5,733.8 1108.0,716.1 1111.8,717.1 1113.0,738.1" fill="#d82323" stroke="#2a0000" stroke-width="0.6" stroke-linejoin="round" />
<polygon points="1113.0,738.1 1111.8,717.1 1114.6,716.3 1121.5,736.7" fill="#8e1515" stroke="#2a0000" stroke-width="0.6" stroke-linejoin="round" />
<polygon points="1108.0,716.1 1111.0,715.0 1114.6,716.3 1111.8,717.1" fill="#e83030" stroke="#2a0000" stroke-width="0.5" stroke-linejoin="round" />
<polygon points="1119.4,737.3 1127.9,719.6 1131.7,720.6 1132.9,741.6" fill="#d82323" stroke="#2a0000" stroke-width="0.6" stroke-linejoin="round" />
<polygon points="1132.9,741.6 1131.7,720.6 1134.5,719.8 1141.4,740.2" fill="#8e1515" stroke="#2a0000" stroke-width="0.6" stroke-linejoin="round" />
<polygon points="1127.9,719.6 1130.9,718.5 1134.5,719.8 1131.7,720.6" fill="#e83030" stroke="#2a0000" stroke-width="0.5" stroke-linejoin="round" />
<polygon points="1139.3,740.9 1147.8,723.2 1151.6,724.2 1152.8,745.2" fill="#d82323" stroke="#2a0000" stroke-width="0.6" stroke-linejoin="round" />
<polygon points="1152.8,745.2 1151.6,724.2 1154.4,723.4 1161.3,743.8" fill="#8e1515" stroke="#2a0000" stroke-width="0.6" stroke-linejoin="round" />
<polygon points="1147.8,723.2 1150.8,722.1 1154.4,723.4 1151.6,724.2" fill="#e83030" stroke="#2a0000" stroke-width="0.5" stroke-linejoin="round" />
<polygon points="1159.2,744.4 1167.7,726.7 1171.5,727.7 1172.7,748.7" fill="#d82323" stroke="#2a0000" stroke-width="0.6" stroke-linejoin="round" />
<polygon points="1172.7,748.7 1171.5,727.7 1174.3,726.9 1181.2,747.3" fill="#8e1515" stroke="#2a0000" stroke-width="0.6" stroke-linejoin="round" />
<polygon points="1167.7,726.7 1170.7,725.6 1174.3,726.9 1171.5,727.7" fill="#e83030" stroke="#2a0000" stroke-width="0.5" stroke-linejoin="round" />
<polygon points="1179.1,748.0 1187.6,730.3 1191.4,731.3 1192.6,752.3" fill="#d82323" stroke="#2a0000" stroke-width="0.6" stroke-linejoin="round" />
<polygon points="1192.6,752.3 1191.4,731.3 1194.2,730.5 1201.1,750.9" fill="#8e1515" stroke="#2a0000" stroke-width="0.6" stroke-linejoin="round" />
<polygon points="1187.6,730.3 1190.6,729.2 1194.2,730.5 1191.4,731.3" fill="#e83030" stroke="#2a0000" stroke-width="0.5" stroke-linejoin="round" />
<polygon points="1199.0,751.6 1207.5,733.9 1211.3,734.9 1212.5,755.9" fill="#d82323" stroke="#2a0000" stroke-width="0.6" stroke-linejoin="round" />
<polygon points="1212.5,755.9 1211.3,734.9 1214.1,734.1 1221.0,754.5" fill="#8e1515" stroke="#2a0000" stroke-width="0.6" stroke-linejoin="round" />
<polygon points="1207.5,733.9 1210.5,732.8 1214.1,734.1 1211.3,734.9" fill="#e83030" stroke="#2a0000" stroke-width="0.5" stroke-linejoin="round" />
<polygon points="932.7,715.9 941.2,698.2 945.0,699.2 946.2,720.2" fill="#d82323" stroke="#2a0000" stroke-width="0.6" stroke-linejoin="round" />
<polygon points="946.2,720.2 945.0,699.2 947.8,698.4 954.7,718.8" fill="#8e1515" stroke="#2a0000" stroke-width="0.6" stroke-linejoin="round" />
<polygon points="941.2,698.2 944.2,697.1 947.8,698.4 945.0,699.2" fill="#e83030" stroke="#2a0000" stroke-width="0.5" stroke-linejoin="round" />
<polygon points="952.6,719.4 961.1,701.7 964.9,702.7 966.1,723.7" fill="#d82323" stroke="#2a0000" stroke-width="0.6" stroke-linejoin="round" />
<polygon points="966.1,723.7 964.9,702.7 967.7,701.9 974.6,722.3" fill="#8e1515" stroke="#2a0000" stroke-width="0.6" stroke-linejoin="round" />
<polygon points="961.1,701.7 964.1,700.6 967.7,701.9 964.9,702.7" fill="#e83030" stroke="#2a0000" stroke-width="0.5" stroke-linejoin="round" />
<polygon points="972.6,723.0 981.1,705.3 984.9,706.3 986.1,727.3" fill="#d82323" stroke="#2a0000" stroke-width="0.6" stroke-linejoin="round" />
<polygon points="986.1,727.3 984.9,706.3 987.7,705.5 994.6,725.9" fill="#8e1515" stroke="#2a0000" stroke-width="0.6" stroke-linejoin="round" />
<polygon points="981.1,705.3 984.1,704.2 987.7,705.5 984.9,706.3" fill="#e83030" stroke="#2a0000" stroke-width="0.5" stroke-linejoin="round" />
<polygon points="992.5,726.5 1001.0,708.8 1004.8,709.8 1006.0,730.8" fill="#d82323" stroke="#2a0000" stroke-width="0.6" stroke-linejoin="round" />
<polygon points="1006.0,730.8 1004.8,709.8 1007.6,709.0 1014.5,729.4" fill="#8e1515" stroke="#2a0000" stroke-width="0.6" stroke-linejoin="round" />
<polygon points="1001.0,708.8 1004.0,707.7 1007.6,709.0 1004.8,709.8" fill="#e83030" stroke="#2a0000" stroke-width="0.5" stroke-linejoin="round" />
<polygon points="1012.4,730.1 1020.9,712.4 1024.7,713.4 1025.9,734.4" fill="#d82323" stroke="#2a0000" stroke-width="0.6" stroke-linejoin="round" />
<polygon points="1025.9,734.4 1024.7,713.4 1027.5,712.6 1034.4,733.0" fill="#8e1515" stroke="#2a0000" stroke-width="0.6" stroke-linejoin="round" />
<polygon points="1020.9,712.4 1023.9,711.3 1027.5,712.6 1024.7,713.4" fill="#e83030" stroke="#2a0000" stroke-width="0.5" stroke-linejoin="round" />
<polygon points="1032.3,733.6 1040.8,715.9 1044.6,716.9 1045.8,737.9" fill="#d82323" stroke="#2a0000" stroke-width="0.6" stroke-linejoin="round" />
<polygon points="1045.8,737.9 1044.6,716.9 1047.4,716.1 1054.3,736.5" fill="#8e1515" stroke="#2a0000" stroke-width="0.6" stroke-linejoin="round" />
<polygon points="1040.8,715.9 1043.8,714.8 1047.4,716.1 1044.6,716.9" fill="#e83030" stroke="#2a0000" stroke-width="0.5" stroke-linejoin="round" />
<polygon points="1052.2,737.2 1060.7,719.5 1064.5,720.5 1065.7,741.5" fill="#d82323" stroke="#2a0000" stroke-width="0.6" stroke-linejoin="round" />
<polygon points="1065.7,741.5 1064.5,720.5 1067.3,719.7 1074.2,740.1" fill="#8e1515" stroke="#2a0000" stroke-width="0.6" stroke-linejoin="round" />
<polygon points="1060.7,719.5 1063.7,718.4 1067.3,719.7 1064.5,720.5" fill="#e83030" stroke="#2a0000" stroke-width="0.5" stroke-linejoin="round" />
<polygon points="1072.1,740.7 1080.6,723.0 1084.4,724.0 1085.6,745.0" fill="#d82323" stroke="#2a0000" stroke-width="0.6" stroke-linejoin="round" />
<polygon points="1085.6,745.0 1084.4,724.0 1087.2,723.2 1094.1,743.6" fill="#8e1515" stroke="#2a0000" stroke-width="0.6" stroke-linejoin="round" />
<polygon points="1080.6,723.0 1083.6,721.9 1087.2,723.2 1084.4,724.0" fill="#e83030" stroke="#2a0000" stroke-width="0.5" stroke-linejoin="round" />
<polygon points="1092.0,744.3 1100.5,726.6 1104.3,727.6 1105.5,748.6" fill="#d82323" stroke="#2a0000" stroke-width="0.6" stroke-linejoin="round" />
<polygon points="1105.5,748.6 1104.3,727.6 1107.1,726.8 1114.0,747.2" fill="#8e1515" stroke="#2a0000" stroke-width="0.6" stroke-linejoin="round" />
<polygon points="1100.5,726.6 1103.5,725.5 1107.1,726.8 1104.3,727.6" fill="#e83030" stroke="#2a0000" stroke-width="0.5" stroke-linejoin="round" />
<polygon points="1112.0,747.8 1120.5,730.1 1124.3,731.1 1125.5,752.1" fill="#d82323" stroke="#2a0000" stroke-width="0.6" stroke-linejoin="round" />
<polygon points="1125.5,752.1 1124.3,731.1 1127.1,730.3 1134.0,750.7" fill="#8e1515" stroke="#2a0000" stroke-width="0.6" stroke-linejoin="round" />
<polygon points="1120.5,730.1 1123.5,729.0 1127.1,730.3 1124.3,731.1" fill="#e83030" stroke="#2a0000" stroke-width="0.5" stroke-linejoin="round" />
<polygon points="1131.9,751.4 1140.4,733.7 1144.2,734.7 1145.4,755.7" fill="#d82323" stroke="#2a0000" stroke-width="0.6" stroke-linejoin="round" />
<polygon points="1145.4,755.7 1144.2,734.7 1147.0,733.9 1153.9,754.3" fill="#8e1515" stroke="#2a0000" stroke-width="0.6" stroke-linejoin="round" />
<polygon points="1140.4,733.7 1143.4,732.6 1147.0,733.9 1144.2,734.7" fill="#e83030" stroke="#2a0000" stroke-width="0.5" stroke-linejoin="round" />
<polygon points="1151.8,755.0 1160.3,737.3 1164.1,738.3 1165.3,759.3" fill="#d82323" stroke="#2a0000" stroke-width="0.6" stroke-linejoin="round" />
<polygon points="1165.3,759.3 1164.1,738.3 1166.9,737.5 1173.8,757.9" fill="#8e1515" stroke="#2a0000" stroke-width="0.6" stroke-linejoin="round" />
<polygon points="1160.3,737.3 1163.3,736.2 1166.9,737.5 1164.1,738.3" fill="#e83030" stroke="#2a0000" stroke-width="0.5" stroke-linejoin="round" />
<polygon points="1171.7,758.5 1180.2,740.8 1184.0,741.8 1185.2,762.8" fill="#d82323" stroke="#2a0000" stroke-width="0.6" stroke-linejoin="round" />
<polygon points="1185.2,762.8 1184.0,741.8 1186.8,741.0 1193.7,761.4" fill="#8e1515" stroke="#2a0000" stroke-width="0.6" stroke-linejoin="round" />
<polygon points="1180.2,740.8 1183.2,739.7 1186.8,741.0 1184.0,741.8" fill="#e83030" stroke="#2a0000" stroke-width="0.5" stroke-linejoin="round" />
<polygon points="1191.6,762.1 1200.1,744.4 1203.9,745.4 1205.1,766.4" fill="#d82323" stroke="#2a0000" stroke-width="0.6" stroke-linejoin="round" />
<polygon points="1205.1,766.4 1203.9,745.4 1206.7,744.6 1213.6,765.0" fill="#8e1515" stroke="#2a0000" stroke-width="0.6" stroke-linejoin="round" />
<polygon points="1200.1,744.4 1203.1,743.3 1206.7,744.6 1203.9,745.4" fill="#e83030" stroke="#2a0000" stroke-width="0.5" stroke-linejoin="round" />
<polygon points="905.4,722.8 913.9,705.1 917.7,706.1 918.9,727.1" fill="#d82323" stroke="#2a0000" stroke-width="0.6" stroke-linejoin="round" />
<polygon points="918.9,727.1 917.7,706.1 920.5,705.3 927.4,725.7" fill="#8e1515" stroke="#2a0000" stroke-width="0.6" stroke-linejoin="round" />
<polygon points="913.9,705.1 916.9,704.0 920.5,705.3 917.7,706.1" fill="#e83030" stroke="#2a0000" stroke-width="0.5" stroke-linejoin="round" />
<polygon points="925.3,726.4 933.8,708.7 937.6,709.7 938.8,730.7" fill="#d82323" stroke="#2a0000" stroke-width="0.6" stroke-linejoin="round" />
<polygon points="938.8,730.7 937.6,709.7 940.4,708.9 947.3,729.3" fill="#8e1515" stroke="#2a0000" stroke-width="0.6" stroke-linejoin="round" />
<polygon points="933.8,708.7 936.8,707.6 940.4,708.9 937.6,709.7" fill="#e83030" stroke="#2a0000" stroke-width="0.5" stroke-linejoin="round" />
<polygon points="945.2,729.9 953.7,712.2 957.5,713.2 958.7,734.2" fill="#d82323" stroke="#2a0000" stroke-width="0.6" stroke-linejoin="round" />
<polygon points="958.7,734.2 957.5,713.2 960.3,712.4 967.2,732.8" fill="#8e1515" stroke="#2a0000" stroke-width="0.6" stroke-linejoin="round" />
<polygon points="953.7,712.2 956.7,711.1 960.3,712.4 957.5,713.2" fill="#e83030" stroke="#2a0000" stroke-width="0.5" stroke-linejoin="round" />
<polygon points="965.1,733.5 973.6,715.8 977.4,716.8 978.6,737.8" fill="#d82323" stroke="#2a0000" stroke-width="0.6" stroke-linejoin="round" />
<polygon points="978.6,737.8 977.4,716.8 980.2,716.0 987.1,736.4" fill="#8e1515" stroke="#2a0000" stroke-width="0.6" stroke-linejoin="round" />
<polygon points="973.6,715.8 976.6,714.7 980.2,716.0 977.4,716.8" fill="#e83030" stroke="#2a0000" stroke-width="0.5" stroke-linejoin="round" />
<polygon points="985.0,737.0 993.5,719.3 997.3,720.3 998.5,741.3" fill="#d82323" stroke="#2a0000" stroke-width="0.6" stroke-linejoin="round" />
<polygon points="998.5,741.3 997.3,720.3 1000.1,719.5 1007.0,739.9" fill="#8e1515" stroke="#2a0000" stroke-width="0.6" stroke-linejoin="round" />
<polygon points="993.5,719.3 996.5,718.2 1000.1,719.5 997.3,720.3" fill="#e83030" stroke="#2a0000" stroke-width="0.5" stroke-linejoin="round" />
<polygon points="1005.0,740.6 1013.5,722.9 1017.3,723.9 1018.5,744.9" fill="#d82323" stroke="#2a0000" stroke-width="0.6" stroke-linejoin="round" />
<polygon points="1018.5,744.9 1017.3,723.9 1020.1,723.1 1027.0,743.5" fill="#8e1515" stroke="#2a0000" stroke-width="0.6" stroke-linejoin="round" />
<polygon points="1013.5,722.9 1016.5,721.8 1020.1,723.1 1017.3,723.9" fill="#e83030" stroke="#2a0000" stroke-width="0.5" stroke-linejoin="round" />
<polygon points="1024.9,744.1 1033.4,726.4 1037.2,727.4 1038.4,748.4" fill="#d82323" stroke="#2a0000" stroke-width="0.6" stroke-linejoin="round" />
<polygon points="1038.4,748.4 1037.2,727.4 1040.0,726.6 1046.9,747.0" fill="#8e1515" stroke="#2a0000" stroke-width="0.6" stroke-linejoin="round" />
<polygon points="1033.4,726.4 1036.4,725.3 1040.0,726.6 1037.2,727.4" fill="#e83030" stroke="#2a0000" stroke-width="0.5" stroke-linejoin="round" />
<polygon points="1044.8,747.7 1053.3,730.0 1057.1,731.0 1058.3,752.0" fill="#d82323" stroke="#2a0000" stroke-width="0.6" stroke-linejoin="round" />
<polygon points="1058.3,752.0 1057.1,731.0 1059.9,730.2 1066.8,750.6" fill="#8e1515" stroke="#2a0000" stroke-width="0.6" stroke-linejoin="round" />
<polygon points="1053.3,730.0 1056.3,728.9 1059.9,730.2 1057.1,731.0" fill="#e83030" stroke="#2a0000" stroke-width="0.5" stroke-linejoin="round" />
<polygon points="1064.7,751.3 1073.2,733.6 1077.0,734.6 1078.2,755.6" fill="#d82323" stroke="#2a0000" stroke-width="0.6" stroke-linejoin="round" />
<polygon points="1078.2,755.6 1077.0,734.6 1079.8,733.8 1086.7,754.2" fill="#8e1515" stroke="#2a0000" stroke-width="0.6" stroke-linejoin="round" />
<polygon points="1073.2,733.6 1076.2,732.5 1079.8,733.8 1077.0,734.6" fill="#e83030" stroke="#2a0000" stroke-width="0.5" stroke-linejoin="round" />
<polygon points="1084.6,754.8 1093.1,737.1 1096.9,738.1 1098.1,759.1" fill="#d82323" stroke="#2a0000" stroke-width="0.6" stroke-linejoin="round" />
<polygon points="1098.1,759.1 1096.9,738.1 1099.7,737.3 1106.6,757.7" fill="#8e1515" stroke="#2a0000" stroke-width="0.6" stroke-linejoin="round" />
<polygon points="1093.1,737.1 1096.1,736.0 1099.7,737.3 1096.9,738.1" fill="#e83030" stroke="#2a0000" stroke-width="0.5" stroke-linejoin="round" />
<polygon points="1104.5,758.4 1113.0,740.7 1116.8,741.7 1118.0,762.7" fill="#d82323" stroke="#2a0000" stroke-width="0.6" stroke-linejoin="round" />
<polygon points="1118.0,762.7 1116.8,741.7 1119.6,740.9 1126.5,761.3" fill="#8e1515" stroke="#2a0000" stroke-width="0.6" stroke-linejoin="round" />
<polygon points="1113.0,740.7 1116.0,739.6 1119.6,740.9 1116.8,741.7" fill="#e83030" stroke="#2a0000" stroke-width="0.5" stroke-linejoin="round" />
<polygon points="1124.4,761.9 1132.9,744.2 1136.7,745.2 1137.9,766.2" fill="#d82323" stroke="#2a0000" stroke-width="0.6" stroke-linejoin="round" />
<polygon points="1137.9,766.2 1136.7,745.2 1139.5,744.4 1146.4,764.8" fill="#8e1515" stroke="#2a0000" stroke-width="0.6" stroke-linejoin="round" />
<polygon points="1132.9,744.2 1135.9,743.1 1139.5,744.4 1136.7,745.2" fill="#e83030" stroke="#2a0000" stroke-width="0.5" stroke-linejoin="round" />
<polygon points="1144.4,765.5 1152.9,747.8 1156.7,748.8 1157.9,769.8" fill="#d82323" stroke="#2a0000" stroke-width="0.6" stroke-linejoin="round" />
<polygon points="1157.9,769.8 1156.7,748.8 1159.5,748.0 1166.4,768.4" fill="#8e1515" stroke="#2a0000" stroke-width="0.6" stroke-linejoin="round" />
<polygon points="1152.9,747.8 1155.9,746.7 1159.5,748.0 1156.7,748.8" fill="#e83030" stroke="#2a0000" stroke-width="0.5" stroke-linejoin="round" />
<polygon points="1164.3,769.0 1172.8,751.3 1176.6,752.3 1177.8,773.3" fill="#d82323" stroke="#2a0000" stroke-width="0.6" stroke-linejoin="round" />
<polygon points="1177.8,773.3 1176.6,752.3 1179.4,751.5 1186.3,771.9" fill="#8e1515" stroke="#2a0000" stroke-width="0.6" stroke-linejoin="round" />
<polygon points="1172.8,751.3 1175.8,750.2 1179.4,751.5 1176.6,752.3" fill="#e83030" stroke="#2a0000" stroke-width="0.5" stroke-linejoin="round" />
<polygon points="898.0,733.3 906.5,715.6 910.3,716.6 911.5,737.6" fill="#d82323" stroke="#2a0000" stroke-width="0.6" stroke-linejoin="round" />
<polygon points="911.5,737.6 910.3,716.6 913.1,715.8 920.0,736.2" fill="#8e1515" stroke="#2a0000" stroke-width="0.6" stroke-linejoin="round" />
<polygon points="906.5,715.6 909.5,714.5 913.1,715.8 910.3,716.6" fill="#e83030" stroke="#2a0000" stroke-width="0.5" stroke-linejoin="round" />
<polygon points="917.9,736.9 926.4,719.2 930.2,720.2 931.4,741.2" fill="#d82323" stroke="#2a0000" stroke-width="0.6" stroke-linejoin="round" />
<polygon points="931.4,741.2 930.2,720.2 933.0,719.4 939.9,739.8" fill="#8e1515" stroke="#2a0000" stroke-width="0.6" stroke-linejoin="round" />
<polygon points="926.4,719.2 929.4,718.1 933.0,719.4 930.2,720.2" fill="#e83030" stroke="#2a0000" stroke-width="0.5" stroke-linejoin="round" />
<polygon points="937.8,740.4 946.3,722.7 950.1,723.7 951.3,744.7" fill="#d82323" stroke="#2a0000" stroke-width="0.6" stroke-linejoin="round" />
<polygon points="951.3,744.7 950.1,723.7 952.9,722.9 959.8,743.3" fill="#8e1515" stroke="#2a0000" stroke-width="0.6" stroke-linejoin="round" />
<polygon points="946.3,722.7 949.3,721.6 952.9,722.9 950.1,723.7" fill="#e83030" stroke="#2a0000" stroke-width="0.5" stroke-linejoin="round" />
<polygon points="957.7,744.0 966.2,726.3 970.0,727.3 971.2,748.3" fill="#d82323" stroke="#2a0000" stroke-width="0.6" stroke-linejoin="round" />
<polygon points="971.2,748.3 970.0,727.3 972.8,726.5 979.7,746.9" fill="#8e1515" stroke="#2a0000" stroke-width="0.6" stroke-linejoin="round" />
<polygon points="966.2,726.3 969.2,725.2 972.8,726.5 970.0,727.3" fill="#e83030" stroke="#2a0000" stroke-width="0.5" stroke-linejoin="round" />
<polygon points="977.6,747.5 986.1,729.8 989.9,730.8 991.1,751.8" fill="#d82323" stroke="#2a0000" stroke-width="0.6" stroke-linejoin="round" />
<polygon points="991.1,751.8 989.9,730.8 992.7,730.0 999.6,750.4" fill="#8e1515" stroke="#2a0000" stroke-width="0.6" stroke-linejoin="round" />
<polygon points="986.1,729.8 989.1,728.7 992.7,730.0 989.9,730.8" fill="#e83030" stroke="#2a0000" stroke-width="0.5" stroke-linejoin="round" />
<polygon points="997.5,751.1 1006.0,733.4 1009.8,734.4 1011.0,755.4" fill="#d82323" stroke="#2a0000" stroke-width="0.6" stroke-linejoin="round" />
<polygon points="1011.0,755.4 1009.8,734.4 1012.6,733.6 1019.5,754.0" fill="#8e1515" stroke="#2a0000" stroke-width="0.6" stroke-linejoin="round" />
<polygon points="1006.0,733.4 1009.0,732.3 1012.6,733.6 1009.8,734.4" fill="#e83030" stroke="#2a0000" stroke-width="0.5" stroke-linejoin="round" />
<polygon points="1017.4,754.7 1025.9,737.0 1029.7,738.0 1030.9,759.0" fill="#d82323" stroke="#2a0000" stroke-width="0.6" stroke-linejoin="round" />
<polygon points="1030.9,759.0 1029.7,738.0 1032.5,737.2 1039.4,757.6" fill="#8e1515" stroke="#2a0000" stroke-width="0.6" stroke-linejoin="round" />
<polygon points="1025.9,737.0 1028.9,735.9 1032.5,737.2 1029.7,738.0" fill="#e83030" stroke="#2a0000" stroke-width="0.5" stroke-linejoin="round" />
<polygon points="1037.4,758.2 1045.9,740.5 1049.7,741.5 1050.9,762.5" fill="#d82323" stroke="#2a0000" stroke-width="0.6" stroke-linejoin="round" />
<polygon points="1050.9,762.5 1049.7,741.5 1052.5,740.7 1059.4,761.1" fill="#8e1515" stroke="#2a0000" stroke-width="0.6" stroke-linejoin="round" />
<polygon points="1045.9,740.5 1048.9,739.4 1052.5,740.7 1049.7,741.5" fill="#e83030" stroke="#2a0000" stroke-width="0.5" stroke-linejoin="round" />
<polygon points="1057.3,761.8 1065.8,744.1 1069.6,745.1 1070.8,766.1" fill="#d82323" stroke="#2a0000" stroke-width="0.6" stroke-linejoin="round" />
<polygon points="1070.8,766.1 1069.6,745.1 1072.4,744.3 1079.3,764.7" fill="#8e1515" stroke="#2a0000" stroke-width="0.6" stroke-linejoin="round" />
<polygon points="1065.8,744.1 1068.8,743.0 1072.4,744.3 1069.6,745.1" fill="#e83030" stroke="#2a0000" stroke-width="0.5" stroke-linejoin="round" />
<polygon points="1077.2,765.3 1085.7,747.6 1089.5,748.6 1090.7,769.6" fill="#d82323" stroke="#2a0000" stroke-width="0.6" stroke-linejoin="round" />
<polygon points="1090.7,769.6 1089.5,748.6 1092.3,747.8 1099.2,768.2" fill="#8e1515" stroke="#2a0000" stroke-width="0.6" stroke-linejoin="round" />
<polygon points="1085.7,747.6 1088.7,746.5 1092.3,747.8 1089.5,748.6" fill="#e83030" stroke="#2a0000" stroke-width="0.5" stroke-linejoin="round" />
<polygon points="1097.1,768.9 1105.6,751.2 1109.4,752.2 1110.6,773.2" fill="#d82323" stroke="#2a0000" stroke-width="0.6" stroke-linejoin="round" />
<polygon points="1110.6,773.2 1109.4,752.2 1112.2,751.4 1119.1,771.8" fill="#8e1515" stroke="#2a0000" stroke-width="0.6" stroke-linejoin="round" />
<polygon points="1105.6,751.2 1108.6,750.1 1112.2,751.4 1109.4,752.2" fill="#e83030" stroke="#2a0000" stroke-width="0.5" stroke-linejoin="round" />
<polygon points="1117.0,772.4 1125.5,754.7 1129.3,755.7 1130.5,776.7" fill="#d82323" stroke="#2a0000" stroke-width="0.6" stroke-linejoin="round" />
<polygon points="1130.5,776.7 1129.3,755.7 1132.1,754.9 1139.0,775.3" fill="#8e1515" stroke="#2a0000" stroke-width="0.6" stroke-linejoin="round" />
<polygon points="1125.5,754.7 1128.5,753.6 1132.1,754.9 1129.3,755.7" fill="#e83030" stroke="#2a0000" stroke-width="0.5" stroke-linejoin="round" />
<polygon points="1136.9,776.0 1145.4,758.3 1149.2,759.3 1150.4,780.3" fill="#d82323" stroke="#2a0000" stroke-width="0.6" stroke-linejoin="round" />
<polygon points="1150.4,780.3 1149.2,759.3 1152.0,758.5 1158.9,778.9" fill="#8e1515" stroke="#2a0000" stroke-width="0.6" stroke-linejoin="round" />
<polygon points="1145.4,758.3 1148.4,757.2 1152.0,758.5 1149.2,759.3" fill="#e83030" stroke="#2a0000" stroke-width="0.5" stroke-linejoin="round" />
<polygon points="1156.8,779.5 1165.3,761.8 1169.1,762.8 1170.3,783.8" fill="#d82323" stroke="#2a0000" stroke-width="0.6" stroke-linejoin="round" />
<polygon points="1170.3,783.8 1169.1,762.8 1171.9,762.0 1178.8,782.4" fill="#8e1515" stroke="#2a0000" stroke-width="0.6" stroke-linejoin="round" />
<polygon points="1165.3,761.8 1168.3,760.7 1171.9,762.0 1169.1,762.8" fill="#e83030" stroke="#2a0000" stroke-width="0.5" stroke-linejoin="round" />
<polygon points="870.6,740.3 879.1,722.6 882.9,723.6 884.1,744.6" fill="#d82323" stroke="#2a0000" stroke-width="0.6" stroke-linejoin="round" />
<polygon points="884.1,744.6 882.9,723.6 885.7,722.8 892.6,743.2" fill="#8e1515" stroke="#2a0000" stroke-width="0.6" stroke-linejoin="round" />
<polygon points="879.1,722.6 882.1,721.5 885.7,722.8 882.9,723.6" fill="#e83030" stroke="#2a0000" stroke-width="0.5" stroke-linejoin="round" />
<polygon points="890.5,743.8 899.0,726.1 902.8,727.1 904.0,748.1" fill="#d82323" stroke="#2a0000" stroke-width="0.6" stroke-linejoin="round" />
<polygon points="904.0,748.1 902.8,727.1 905.6,726.3 912.5,746.7" fill="#8e1515" stroke="#2a0000" stroke-width="0.6" stroke-linejoin="round" />
<polygon points="899.0,726.1 902.0,725.0 905.6,726.3 902.8,727.1" fill="#e83030" stroke="#2a0000" stroke-width="0.5" stroke-linejoin="round" />
<polygon points="910.4,747.4 918.9,729.7 922.7,730.7 923.9,751.7" fill="#d82323" stroke="#2a0000" stroke-width="0.6" stroke-linejoin="round" />
<polygon points="923.9,751.7 922.7,730.7 925.5,729.9 932.4,750.3" fill="#8e1515" stroke="#2a0000" stroke-width="0.6" stroke-linejoin="round" />
<polygon points="918.9,729.7 921.9,728.6 925.5,729.9 922.7,730.7" fill="#e83030" stroke="#2a0000" stroke-width="0.5" stroke-linejoin="round" />
<polygon points="930.4,751.0 938.9,733.3 942.7,734.3 943.9,755.3" fill="#d82323" stroke="#2a0000" stroke-width="0.6" stroke-linejoin="round" />
<polygon points="943.9,755.3 942.7,734.3 945.5,733.5 952.4,753.9" fill="#8e1515" stroke="#2a0000" stroke-width="0.6" stroke-linejoin="round" />
<polygon points="938.9,733.3 941.9,732.2 945.5,733.5 942.7,734.3" fill="#e83030" stroke="#2a0000" stroke-width="0.5" stroke-linejoin="round" />
<polygon points="950.3,754.5 958.8,736.8 962.6,737.8 963.8,758.8" fill="#d82323" stroke="#2a0000" stroke-width="0.6" stroke-linejoin="round" />
<polygon points="963.8,758.8 962.6,737.8 965.4,737.0 972.3,757.4" fill="#8e1515" stroke="#2a0000" stroke-width="0.6" stroke-linejoin="round" />
<polygon points="958.8,736.8 961.8,735.7 965.4,737.0 962.6,737.8" fill="#e83030" stroke="#2a0000" stroke-width="0.5" stroke-linejoin="round" />
<polygon points="970.2,758.1 978.7,740.4 982.5,741.4 983.7,762.4" fill="#d82323" stroke="#2a0000" stroke-width="0.6" stroke-linejoin="round" />
<polygon points="983.7,762.4 982.5,741.4 985.3,740.6 992.2,761.0" fill="#8e1515" stroke="#2a0000" stroke-width="0.6" stroke-linejoin="round" />
<polygon points="978.7,740.4 981.7,739.3 985.3,740.6 982.5,741.4" fill="#e83030" stroke="#2a0000" stroke-width="0.5" stroke-linejoin="round" />
<polygon points="990.1,761.6 998.6,743.9 1002.4,744.9 1003.6,765.9" fill="#d82323" stroke="#2a0000" stroke-width="0.6" stroke-linejoin="round" />
<polygon points="1003.6,765.9 1002.4,744.9 1005.2,744.1 1012.1,764.5" fill="#8e1515" stroke="#2a0000" stroke-width="0.6" stroke-linejoin="round" />
<polygon points="998.6,743.9 1001.6,742.8 1005.2,744.1 1002.4,744.9" fill="#e83030" stroke="#2a0000" stroke-width="0.5" stroke-linejoin="round" />
<polygon points="1010.0,765.2 1018.5,747.5 1022.3,748.5 1023.5,769.5" fill="#d82323" stroke="#2a0000" stroke-width="0.6" stroke-linejoin="round" />
<polygon points="1023.5,769.5 1022.3,748.5 1025.1,747.7 1032.0,768.1" fill="#8e1515" stroke="#2a0000" stroke-width="0.6" stroke-linejoin="round" />
<polygon points="1018.5,747.5 1021.5,746.4 1025.1,747.7 1022.3,748.5" fill="#e83030" stroke="#2a0000" stroke-width="0.5" stroke-linejoin="round" />
<polygon points="1029.9,768.7 1038.4,751.0 1042.2,752.0 1043.4,773.0" fill="#d82323" stroke="#2a0000" stroke-width="0.6" stroke-linejoin="round" />
<polygon points="1043.4,773.0 1042.2,752.0 1045.0,751.2 1051.9,771.6" fill="#8e1515" stroke="#2a0000" stroke-width="0.6" stroke-linejoin="round" />
<polygon points="1038.4,751.0 1041.4,749.9 1045.0,751.2 1042.2,752.0" fill="#e83030" stroke="#2a0000" stroke-width="0.5" stroke-linejoin="round" />
<polygon points="1049.8,772.3 1058.3,754.6 1062.1,755.6 1063.3,776.6" fill="#d82323" stroke="#2a0000" stroke-width="0.6" stroke-linejoin="round" />
<polygon points="1063.3,776.6 1062.1,755.6 1064.9,754.8 1071.8,775.2" fill="#8e1515" stroke="#2a0000" stroke-width="0.6" stroke-linejoin="round" />
<polygon points="1058.3,754.6 1061.3,753.5 1064.9,754.8 1062.1,755.6" fill="#e83030" stroke="#2a0000" stroke-width="0.5" stroke-linejoin="round" />
<polygon points="1069.7,775.8 1078.2,758.1 1082.0,759.1 1083.2,780.1" fill="#d82323" stroke="#2a0000" stroke-width="0.6" stroke-linejoin="round" />
<polygon points="1083.2,780.1 1082.0,759.1 1084.8,758.3 1091.7,778.7" fill="#8e1515" stroke="#2a0000" stroke-width="0.6" stroke-linejoin="round" />
<polygon points="1078.2,758.1 1081.2,757.0 1084.8,758.3 1082.0,759.1" fill="#e83030" stroke="#2a0000" stroke-width="0.5" stroke-linejoin="round" />
<polygon points="1089.7,779.4 1098.2,761.7 1102.0,762.7 1103.2,783.7" fill="#d82323" stroke="#2a0000" stroke-width="0.6" stroke-linejoin="round" />
<polygon points="1103.2,783.7 1102.0,762.7 1104.8,761.9 1111.7,782.3" fill="#8e1515" stroke="#2a0000" stroke-width="0.6" stroke-linejoin="round" />
<polygon points="1098.2,761.7 1101.2,760.6 1104.8,761.9 1102.0,762.7" fill="#e83030" stroke="#2a0000" stroke-width="0.5" stroke-linejoin="round" />
<polygon points="1109.6,782.9 1118.1,765.2 1121.9,766.2 1123.1,787.2" fill="#d82323" stroke="#2a0000" stroke-width="0.6" stroke-linejoin="round" />
<polygon points="1123.1,787.2 1121.9,766.2 1124.7,765.4 1131.6,785.8" fill="#8e1515" stroke="#2a0000" stroke-width="0.6" stroke-linejoin="round" />
<polygon points="1118.1,765.2 1121.1,764.1 1124.7,765.4 1121.9,766.2" fill="#e83030" stroke="#2a0000" stroke-width="0.5" stroke-linejoin="round" />
<polygon points="1129.5,786.5 1138.0,768.8 1141.8,769.8 1143.0,790.8" fill="#d82323" stroke="#2a0000" stroke-width="0.6" stroke-linejoin="round" />
<polygon points="1143.0,790.8 1141.8,769.8 1144.6,769.0 1151.5,789.4" fill="#8e1515" stroke="#2a0000" stroke-width="0.6" stroke-linejoin="round" />
<polygon points="1138.0,768.8 1141.0,767.7 1144.6,769.0 1141.8,769.8" fill="#e83030" stroke="#2a0000" stroke-width="0.5" stroke-linejoin="round" />
<polygon points="863.2,750.8 871.7,733.1 875.5,734.1 876.7,755.1" fill="#d82323" stroke="#2a0000" stroke-width="0.6" stroke-linejoin="round" />
<polygon points="876.7,755.1 875.5,734.1 878.3,733.3 885.2,753.7" fill="#8e1515" stroke="#2a0000" stroke-width="0.6" stroke-linejoin="round" />
<polygon points="871.7,733.1 874.7,732.0 878.3,733.3 875.5,734.1" fill="#e83030" stroke="#2a0000" stroke-width="0.5" stroke-linejoin="round" />
<polygon points="883.1,754.4 891.6,736.7 895.4,737.7 896.6,758.7" fill="#d82323" stroke="#2a0000" stroke-width="0.6" stroke-linejoin="round" />
<polygon points="896.6,758.7 895.4,737.7 898.2,736.9 905.1,757.3" fill="#8e1515" stroke="#2a0000" stroke-width="0.6" stroke-linejoin="round" />
<polygon points="891.6,736.7 894.6,735.6 898.2,736.9 895.4,737.7" fill="#e83030" stroke="#2a0000" stroke-width="0.5" stroke-linejoin="round" />
<polygon points="903.0,757.9 911.5,740.2 915.3,741.2 916.5,762.2" fill="#d82323" stroke="#2a0000" stroke-width="0.6" stroke-linejoin="round" />
<polygon points="916.5,762.2 915.3,741.2 918.1,740.4 925.0,760.8" fill="#8e1515" stroke="#2a0000" stroke-width="0.6" stroke-linejoin="round" />
<polygon points="911.5,740.2 914.5,739.1 918.1,740.4 915.3,741.2" fill="#e83030" stroke="#2a0000" stroke-width="0.5" stroke-linejoin="round" />
<polygon points="922.9,761.5 931.4,743.8 935.2,744.8 936.4,765.8" fill="#d82323" stroke="#2a0000" stroke-width="0.6" stroke-linejoin="round" />
<polygon points="936.4,765.8 935.2,744.8 938.0,744.0 944.9,764.4" fill="#8e1515" stroke="#2a0000" stroke-width="0.6" stroke-linejoin="round" />
<polygon points="931.4,743.8 934.4,742.7 938.0,744.0 935.2,744.8" fill="#e83030" stroke="#2a0000" stroke-width="0.5" stroke-linejoin="round" />
<polygon points="942.8,765.0 951.3,747.3 955.1,748.3 956.3,769.3" fill="#d82323" stroke="#2a0000" stroke-width="0.6" stroke-linejoin="round" />
<polygon points="956.3,769.3 955.1,748.3 957.9,747.5 964.8,767.9" fill="#8e1515" stroke="#2a0000" stroke-width="0.6" stroke-linejoin="round" />
<polygon points="951.3,747.3 954.3,746.2 957.9,747.5 955.1,748.3" fill="#e83030" stroke="#2a0000" stroke-width="0.5" stroke-linejoin="round" />
<polygon points="962.7,768.6 971.2,750.9 975.0,751.9 976.2,772.9" fill="#d82323" stroke="#2a0000" stroke-width="0.6" stroke-linejoin="round" />
<polygon points="976.2,772.9 975.0,751.9 977.8,751.1 984.7,771.5" fill="#8e1515" stroke="#2a0000" stroke-width="0.6" stroke-linejoin="round" />
<polygon points="971.2,750.9 974.2,749.8 977.8,751.1 975.0,751.9" fill="#e83030" stroke="#2a0000" stroke-width="0.5" stroke-linejoin="round" />
<polygon points="982.7,772.1 991.2,754.4 995.0,755.4 996.2,776.4" fill="#d82323" stroke="#2a0000" stroke-width="0.6" stroke-linejoin="round" />
<polygon points="996.2,776.4 995.0,755.4 997.8,754.6 1004.7,775.0" fill="#8e1515" stroke="#2a0000" stroke-width="0.6" stroke-linejoin="round" />
<polygon points="991.2,754.4 994.2,753.3 997.8,754.6 995.0,755.4" fill="#e83030" stroke="#2a0000" stroke-width="0.5" stroke-linejoin="round" />
<polygon points="1002.6,775.7 1011.1,758.0 1014.9,759.0 1016.1,780.0" fill="#d82323" stroke="#2a0000" stroke-width="0.6" stroke-linejoin="round" />
<polygon points="1016.1,780.0 1014.9,759.0 1017.7,758.2 1024.6,778.6" fill="#8e1515" stroke="#2a0000" stroke-width="0.6" stroke-linejoin="round" />
<polygon points="1011.1,758.0 1014.1,756.9 1017.7,758.2 1014.9,759.0" fill="#e83030" stroke="#2a0000" stroke-width="0.5" stroke-linejoin="round" />
<polygon points="1022.5,779.2 1031.0,761.5 1034.8,762.5 1036.0,783.5" fill="#d82323" stroke="#2a0000" stroke-width="0.6" stroke-linejoin="round" />
<polygon points="1036.0,783.5 1034.8,762.5 1037.6,761.7 1044.5,782.1" fill="#8e1515" stroke="#2a0000" stroke-width="0.6" stroke-linejoin="round" />
<polygon points="1031.0,761.5 1034.0,760.4 1037.6,761.7 1034.8,762.5" fill="#e83030" stroke="#2a0000" stroke-width="0.5" stroke-linejoin="round" />
<polygon points="1042.4,782.8 1050.9,765.1 1054.7,766.1 1055.9,787.1" fill="#d82323" stroke="#2a0000" stroke-width="0.6" stroke-linejoin="round" />
<polygon points="1055.9,787.1 1054.7,766.1 1057.5,765.3 1064.4,785.7" fill="#8e1515" stroke="#2a0000" stroke-width="0.6" stroke-linejoin="round" />
<polygon points="1050.9,765.1 1053.9,764.0 1057.5,765.3 1054.7,766.1" fill="#e83030" stroke="#2a0000" stroke-width="0.5" stroke-linejoin="round" />
<polygon points="1062.3,786.3 1070.8,768.6 1074.6,769.6 1075.8,790.6" fill="#d82323" stroke="#2a0000" stroke-width="0.6" stroke-linejoin="round" />
<polygon points="1075.8,790.6 1074.6,769.6 1077.4,768.8 1084.3,789.2" fill="#8e1515" stroke="#2a0000" stroke-width="0.6" stroke-linejoin="round" />
<polygon points="1070.8,768.6 1073.8,767.5 1077.4,768.8 1074.6,769.6" fill="#e83030" stroke="#2a0000" stroke-width="0.5" stroke-linejoin="round" />
<polygon points="1082.2,789.9 1090.7,772.2 1094.5,773.2 1095.7,794.2" fill="#d82323" stroke="#2a0000" stroke-width="0.6" stroke-linejoin="round" />
<polygon points="1095.7,794.2 1094.5,773.2 1097.3,772.4 1104.2,792.8" fill="#8e1515" stroke="#2a0000" stroke-width="0.6" stroke-linejoin="round" />
<polygon points="1090.7,772.2 1093.7,771.1 1097.3,772.4 1094.5,773.2" fill="#e83030" stroke="#2a0000" stroke-width="0.5" stroke-linejoin="round" />
<polygon points="1102.1,793.4 1110.6,775.7 1114.4,776.7 1115.6,797.7" fill="#d82323" stroke="#2a0000" stroke-width="0.6" stroke-linejoin="round" />
<polygon points="1115.6,797.7 1114.4,776.7 1117.2,775.9 1124.1,796.3" fill="#8e1515" stroke="#2a0000" stroke-width="0.6" stroke-linejoin="round" />
<polygon points="1110.6,775.7 1113.6,774.6 1117.2,775.9 1114.4,776.7" fill="#e83030" stroke="#2a0000" stroke-width="0.5" stroke-linejoin="round" />
<polygon points="1122.1,797.0 1130.6,779.3 1134.4,780.3 1135.6,801.3" fill="#d82323" stroke="#2a0000" stroke-width="0.6" stroke-linejoin="round" />
<polygon points="1135.6,801.3 1134.4,780.3 1137.2,779.5 1144.1,799.9" fill="#8e1515" stroke="#2a0000" stroke-width="0.6" stroke-linejoin="round" />
<polygon points="1130.6,779.3 1133.6,778.2 1137.2,779.5 1134.4,780.3" fill="#e83030" stroke="#2a0000" stroke-width="0.5" stroke-linejoin="round" />
</g>
<polygon points="857.5,729.6 942.5,687.0 1202.4,733.3 1117.4,776.0" fill="none" stroke="#000" stroke-width="0.7" stroke-linejoin="round" />
<polygon points="857.5,729.6 871.9,722.4 888.9,725.4 874.4,732.7" fill="#c01d1d" stroke="#000" stroke-width="0.5" stroke-linejoin="round" />
<polygon points="871.9,722.4 888.9,725.4 888.9,730.4 871.9,727.4" fill="#8a1414" stroke="#000" stroke-width="0.4" stroke-linejoin="round" />
<polygon points="1012.0,696.0 1025.0,688.0 1046.0,692.0 1034.0,701.0" fill="#e62828" stroke="#000" stroke-width="0.6" stroke-linejoin="round" />
<polygon points="1012.0,696.0 1034.0,701.0 1034.0,703.5 1012.0,698.5" fill="#a01818" stroke="#000" stroke-width="0.4" stroke-linejoin="round" />
<polygon points="1112.0,714.0 1124.0,706.0 1146.0,710.0 1134.0,719.0" fill="#e62828" stroke="#000" stroke-width="0.6" stroke-linejoin="round" />
<polygon points="1112.0,714.0 1134.0,719.0 1134.0,721.5 1112.0,716.5" fill="#a01818" stroke="#000" stroke-width="0.4" stroke-linejoin="round" />
<radialGradient id="gEgg" cx="0.4" cy="0.3" r="0.8"><stop offset="0" stop-color="#fff"/><stop offset="0.7" stop-color="#f2f2f2"/><stop offset="1" stop-color="#bdbdbd"/></radialGradient>
<path d="M967.5,674 C975,674 978,684 978,690 C978,697 974,702 967.5,702 C961,702 957,697 957,690 C957,684 960,674 967.5,674 Z" fill="url(#gEgg)" stroke="#777" stroke-width="0.7" stroke-linejoin="round" />
<path d="M957.500,689 Q967,693 978,690.5" fill="none" stroke="#888" stroke-width="0.6"/>
<polygon points="1101.0,585.0 1108.0,584.0 1108.0,628.0 1100.0,627.0 1090.0,621.0" fill="#b9bdd8" stroke="#0a0a0a" stroke-width="0.85" stroke-linejoin="round" />
<polygon points="1288.0,606.0 1298.0,604.0 1311.0,645.0 1302.0,650.0 1290.0,648.0" fill="#b9bdd8" stroke="#0a0a0a" stroke-width="0.85" stroke-linejoin="round" />
<path d="M1106.5,597 L1106.5,640 A94,25 0 0 0 1294.5,638 L1295,595 Z" fill="url(#gGreyH)" stroke="#0a0a0a" stroke-width="0.85" stroke-linejoin="round" />
<ellipse cx="1200.7" cy="597.0" rx="94.2" ry="25.5" fill="url(#gGreyTop)" stroke="#0a0a0a" stroke-width="0.85" />
<ellipse cx="1200.7" cy="588.0" rx="69.0" ry="20.0" fill="#d8dbef" stroke="#0a0a0a" stroke-width="0.85" />
<ellipse cx="1200.7" cy="585.0" rx="63.0" ry="17.0" fill="url(#gGreyTop)" stroke="#0a0a0a" stroke-width="0.75" />
<path d="M1137.5,562 L1137.5,585 A63,16 0 0 0 1263.5,585 L1263.5,562 Z" fill="url(#gGreyH)" stroke="#0a0a0a" stroke-width="0.85" stroke-linejoin="round" />
<ellipse cx="1200.5" cy="562.0" rx="63.0" ry="15.5" fill="#dfe2f4" stroke="#0a0a0a" stroke-width="0.85" />
<ellipse cx="1200.5" cy="561.0" rx="57.0" ry="13.0" fill="#cdd1ea" stroke="#0a0a0a" stroke-width="0.75" />
<polygon points="1131.5,617.0 1139.0,614.0 1137.0,655.0 1129.0,659.0" fill="#d0d4ea" stroke="#0a0a0a" stroke-width="0.75" stroke-linejoin="round" />
<polygon points="1163.0,626.0 1170.0,623.0 1170.0,662.0 1162.0,667.0" fill="#aeb2cc" stroke="#0a0a0a" stroke-width="0.75" stroke-linejoin="round" />
<polygon points="1122.5,658.0 1134.0,652.0 1168.0,660.0 1170.0,664.0 1158.0,671.0" fill="#c6cae4" stroke="#0a0a0a" stroke-width="0.75" stroke-linejoin="round" />
<polygon points="1139.0,616.0 1163.0,627.0 1162.0,664.0 1137.0,655.0" fill="#a4a8c3" stroke="#222" stroke-width="0.5" stroke-linejoin="round" />
<polygon points="1268.0,616.0 1276.0,612.0 1287.0,652.0 1279.0,656.0" fill="#c6cae4" stroke="#0a0a0a" stroke-width="0.75" stroke-linejoin="round" />
<polygon points="1279.0,656.0 1310.0,644.0 1312.0,648.0 1284.0,662.0" fill="#c6cae4" stroke="#0a0a0a" stroke-width="0.75" stroke-linejoin="round" />
<path d="M1145,521 L1151.5,513.5 L1180,516.5 L1175,524 L1180,517 C1200,503 1220,490 1237,474 L1262,440 C1300,425 1345,450 1345,490 C1345,515 1325,532 1300,535 C1275,538 1262,548 1254,553 L1247,556 L1246.7,564 L1145,555 Z" fill="url(#gGrey)" stroke="#0a0a0a" stroke-width="0.85" stroke-linejoin="round" />
<polygon points="1145.0,521.0 1151.5,513.5 1180.0,516.5 1175.0,524.0" fill="#cfd3ec" stroke="#0a0a0a" stroke-width="0.75" stroke-linejoin="round" />
<ellipse cx="1312.0" cy="481.0" rx="40.0" ry="53.0" fill="#a9adc8" stroke="#222" stroke-width="0.7" transform="rotate(-8 1312.0 481.0)" />
<ellipse cx="1304.0" cy="481.0" rx="40.0" ry="53.0" fill="url(#gGrey)" stroke="#222" stroke-width="0.7" transform="rotate(-8 1304.0 481.0)" />
<ellipse cx="1301.0" cy="483.0" rx="34.0" ry="46.0" fill="#c4c8e3" stroke="#222" stroke-width="0.6" transform="rotate(-8 1301.0 483.0)" />
<ellipse cx="1303.0" cy="487.0" rx="30.0" ry="41.0" fill="#d62222" stroke="#111" stroke-width="0.7" transform="rotate(-8 1303.0 487.0)" />
<ellipse cx="1309.3" cy="451.5" rx="2.6" ry="2.6" fill="#e02626" stroke="#200" stroke-width="0.8" />
<ellipse cx="1316.3" cy="454.9" rx="2.6" ry="2.6" fill="#e02626" stroke="#200" stroke-width="0.8" />
<ellipse cx="1322.4" cy="461.1" rx="2.6" ry="2.6" fill="#e02626" stroke="#200" stroke-width="0.8" />
<ellipse cx="1326.9" cy="469.5" rx="2.6" ry="2.6" fill="#e02626" stroke="#200" stroke-width="0.8" />
<ellipse cx="1329.5" cy="479.5" rx="2.6" ry="2.6" fill="#e02626" stroke="#200" stroke-width="0.8" />
<ellipse cx="1329.9" cy="490.1" rx="2.6" ry="2.6" fill="#e02626" stroke="#200" stroke-width="0.8" />
<ellipse cx="1328.2" cy="500.5" rx="2.6" ry="2.6" fill="#e02626" stroke="#200" stroke-width="0.8" />
<ellipse cx="1324.4" cy="509.7" rx="2.6" ry="2.6" fill="#e02626" stroke="#200" stroke-width="0.8" />
<ellipse cx="1319.0" cy="516.8" rx="2.6" ry="2.6" fill="#e02626" stroke="#200" stroke-width="0.8" />
<ellipse cx="1312.3" cy="521.4" rx="2.6" ry="2.6" fill="#e02626" stroke="#200" stroke-width="0.8" />
<ellipse cx="1305.0" cy="523.0" rx="2.6" ry="2.6" fill="#e02626" stroke="#200" stroke-width="0.8" />
<ellipse cx="1297.7" cy="521.4" rx="2.6" ry="2.6" fill="#e02626" stroke="#200" stroke-width="0.8" />
<polygon points="1205.0,226.0 1227.5,234.0 1231.7,314.0 1210.8,325.0" fill="#e62626" stroke="#0a0a0a" stroke-width="0.85" stroke-linejoin="round" />
<polygon points="1227.5,234.0 1251.0,215.0 1252.0,226.0 1243.0,305.0 1231.7,314.0" fill="#cf2020" stroke="#0a0a0a" stroke-width="0.85" stroke-linejoin="round" />
<path d="M1236,225.500 L1264,228 A8,38 0 0 1 1264,304 L1236,306.500 A7.500,40.500 0 0 1 1236,225.500 Z" fill="url(#gRedCyl)" stroke="#0a0a0a" stroke-width="0.85" stroke-linejoin="round" />
<path d="M1240,226 A7.500,40 0 0 0 1240,306 M1243.500,226.300 A7.500,40 0 0 0 1243.500,305.700" fill="none" stroke="#200" stroke-width="0.9"/>
<path d="M1264,229 L1272,231 A7.500,35 0 0 1 1272,301 L1264,303 Z" fill="#c81e1e" stroke="#0a0a0a" stroke-width="0.8" stroke-linejoin="round" />
<ellipse cx="1263.5" cy="266.0" rx="8.5" ry="38.5" fill="url(#gRedCyl)" stroke="#0a0a0a" stroke-width="0.85" />
<ellipse cx="1272.0" cy="266.0" rx="7.5" ry="35.0" fill="#d42020" stroke="#0a0a0a" stroke-width="0.8" />
<polygon points="1266.0,237.5 1341.0,241.0 1341.0,297.0 1266.0,293.0" fill="#d42222" stroke="#0a0a0a" stroke-width="0.85" stroke-linejoin="round" />
<polygon points="1266.0,237.5 1341.0,241.0 1341.0,256.0 1266.0,252.0" fill="#f83232" stroke="#0a0a0a" stroke-width="0.75" stroke-linejoin="round" />
<polygon points="1266.0,286.0 1341.0,290.0 1341.0,297.0 1266.0,293.0" fill="#981616" stroke="#0a0a0a" stroke-width="0.75" stroke-linejoin="round" />
<path d="M1346,231 L1364,232 A9,38 0 0 1 1364,308 L1346,308 A9,38.500 0 0 1 1346,231 Z" fill="url(#gRedCyl)" stroke="#0a0a0a" stroke-width="0.85" stroke-linejoin="round" />
<path d="M1352,231.200 A9,38.500 0 0 0 1352,308 M1355,231.400 A9,38.500 0 0 0 1355,308 M1361,231.800 A9,38.500 0 0 0 1361,308" fill="none" stroke="#200" stroke-width="0.9"/>
<ellipse cx="1364.0" cy="270.0" rx="9.0" ry="38.0" fill="#d82222" stroke="#0a0a0a" stroke-width="0.85" />
<polygon points="1106.2,222.0 1134.7,197.0 1231.7,201.3 1205.0,226.0" fill="#ff3030" stroke="#0a0a0a" stroke-width="0.85" stroke-linejoin="round" />
<polygon points="1205.0,226.0 1231.7,201.3 1251.0,215.0 1227.5,234.0" fill="#f42c2c" stroke="#0a0a0a" stroke-width="0.85" stroke-linejoin="round" />
<polygon points="1106.2,222.0 1205.0,226.0 1210.8,325.0 1112.5,322.0" fill="url(#gRedBox)" stroke="#0a0a0a" stroke-width="0.85" stroke-linejoin="round" />
<ellipse cx="1165.0" cy="325.0" rx="43.0" ry="40.0" fill="#b81a1a" stroke="#0a0a0a" stroke-width="0.85" />
<ellipse cx="1161.0" cy="325.0" rx="43.0" ry="40.0" fill="#d42222" stroke="#0a0a0a" stroke-width="0.85" />
<path d="M1176,328 C1200,360 1235,400 1282,449 L1290,458 L1256,492 C1225,462 1190,425 1170,396 C1160,380 1154,366 1149,354 Z" fill="url(#gArm)" stroke="#111" stroke-width="0.8" stroke-linejoin="round" />
<ellipse cx="1291.0" cy="490.0" rx="30.0" ry="35.0" fill="#c21c1c" stroke="#111" stroke-width="0.7" transform="rotate(-8 1291.0 490.0)" />
<ellipse cx="1285.0" cy="493.5" rx="30.0" ry="35.0" fill="url(#gRedBox)" stroke="#111" stroke-width="0.7" transform="rotate(-8 1285.0 493.5)" />
<ellipse cx="1284.5" cy="494.0" rx="25.0" ry="29.5" fill="#e42626" stroke="#111" stroke-width="0.6" transform="rotate(-8 1284.5 494.0)" />
<ellipse cx="1284.0" cy="494.5" rx="19.5" ry="23.0" fill="url(#gRedBox)" stroke="#111" stroke-width="0.8" transform="rotate(-8 1284.0 494.5)" />
<ellipse cx="1157.0" cy="330.0" rx="24.0" ry="24.0" fill="url(#gRedBox)" stroke="#0a0a0a" stroke-width="0.85" />
<ellipse cx="1148.3" cy="334.0" rx="21.0" ry="21.0" fill="#e82828" stroke="#111" stroke-width="0.8" />
<ellipse cx="1148.3" cy="334.0" rx="17.5" ry="17.5" fill="url(#gRedBox)" stroke="#111" stroke-width="0.8" />
<polygon points="1444.0,450.0 1482.0,450.0 1481.0,455.0 1468.0,489.0 1448.0,489.0 1444.0,475.0" fill="#1e1e1e" stroke="#000" stroke-width="0.8" stroke-linejoin="round" />
<polygon points="1448.0,489.0 1468.0,488.0 1470.0,498.0 1488.0,507.0 1493.0,517.0 1491.0,530.0 1478.0,532.5 1476.7,543.0 1466.7,568.0 1445.0,571.7 1438.0,553.0 1446.7,530.0 1436.7,491.7" fill="#3a3a3a" stroke="#000" stroke-width="0.8" stroke-linejoin="round" />
<polygon points="1449.0,490.0 1468.0,488.0 1470.0,498.0 1455.0,501.0" fill="#484848" stroke="#000" stroke-width="0.5" stroke-linejoin="round" />
<polygon points="1470.0,498.0 1488.0,507.0 1493.0,517.0 1491.0,530.0 1478.0,532.5 1472.0,515.0" fill="#404040" stroke="#000" stroke-width="0.5" stroke-linejoin="round" />
<line x1="1452.0" y1="540.0" x2="1476.0" y2="538.0" stroke="#5a5a5a" stroke-width="2.2" />
<line x1="1450.8" y1="546.0" x2="1473.8" y2="544.0" stroke="#5a5a5a" stroke-width="2.2" />
<line x1="1449.6" y1="552.0" x2="1471.6" y2="550.0" stroke="#5a5a5a" stroke-width="2.2" />
<line x1="1448.4" y1="558.0" x2="1469.4" y2="556.0" stroke="#5a5a5a" stroke-width="2.2" />
<line x1="1447.2" y1="564.0" x2="1467.2" y2="562.0" stroke="#5a5a5a" stroke-width="2.2" />
<polygon points="1436.0,419.0 1446.0,414.0 1450.0,445.0 1462.0,453.0 1388.0,508.0 1363.0,495.0 1352.0,499.0" fill="#3a3a3a" stroke="#000" stroke-width="0.8" stroke-linejoin="round" />
<line x1="1431.0" y1="430.0" x2="1365.0" y2="492.0" stroke="#151515" stroke-width="1" />
<line x1="1440.0" y1="440.0" x2="1385.0" y2="497.0" stroke="#151515" stroke-width="1.2" />
<polygon points="1350.8,501.7 1363.0,495.0 1386.7,508.0 1391.7,513.0 1436.7,517.5 1444.0,527.0 1444.0,540.0 1438.0,547.5 1413.0,546.0 1395.0,558.0 1395.0,558.0 1395.0,564.1 1390.0,562.3 1390.0,568.4 1385.0,566.6 1385.0,572.7 1380.0,570.9 1380.0,577.0 1375.0,575.1 1375.0,581.3 1370.0,579.4 1370.0,585.6 1365.0,583.7 1365.0,589.9 1360.0,588.0 1350.0,588.0 1336.7,566.7 1341.7,560.0 1355.8,520.0" fill="#3a3a3a" stroke="#000" stroke-width="0.8" stroke-linejoin="round" />
<polygon points="1361.7,530.0 1383.0,553.0 1354.0,573.0" fill="#fff" stroke="#000" stroke-width="0.8" stroke-linejoin="round" />
<ellipse cx="1360.5" cy="510.0" rx="3.0" ry="3.0" fill="#4a4a4a" stroke="#0a0a0a" stroke-width="0.75" />
<ellipse cx="1434.5" cy="536.0" rx="3.0" ry="3.0" fill="#4a4a4a" stroke="#0a0a0a" stroke-width="0.75" />
<polygon points="1533.0,418.0 1545.0,424.0 1582.0,520.0 1574.0,523.0 1557.0,528.0 1511.7,458.0 1527.5,438.0" fill="#3a3a3a" stroke="#000" stroke-width="0.8" stroke-linejoin="round" />
<line x1="1528.0" y1="440.0" x2="1562.0" y2="524.0" stroke="#151515" stroke-width="1.1" />
<line x1="1537.0" y1="432.0" x2="1572.0" y2="520.0" stroke="#151515" stroke-width="1" />
<polygon points="1496.0,533.0 1499.0,521.0 1511.7,515.0 1551.7,525.0 1573.0,521.7 1586.7,520.0 1593.0,530.0 1585.0,545.0 1588.0,591.7 1565.0,610.8 1565.0,610.8 1559.0,610.0 1561.0,605.3 1555.0,604.5 1557.0,599.8 1551.0,599.0 1553.0,594.3 1547.0,593.5 1549.0,588.8 1543.0,588.0 1545.0,583.2 1539.0,582.5 1541.0,577.7 1535.0,577.0 1537.0,572.2 1531.0,571.5 1533.0,566.7 1525.0,550.0 1500.0,543.0" fill="#3a3a3a" stroke="#000" stroke-width="0.8" stroke-linejoin="round" />
<polygon points="1553.0,566.7 1570.0,556.7 1566.7,583.0" fill="#fff" stroke="#000" stroke-width="0.8" stroke-linejoin="round" />
<ellipse cx="1505.0" cy="532.5" rx="3.0" ry="3.0" fill="#4a4a4a" stroke="#0a0a0a" stroke-width="0.75" />
<ellipse cx="1576.0" cy="536.0" rx="3.0" ry="3.0" fill="#4a4a4a" stroke="#0a0a0a" stroke-width="0.75" />
<polygon points="1445.8,414.0 1440.0,433.0 1440.8,451.7 1481.7,454.0 1481.7,423.0" fill="#d82222" stroke="#0a0a0a" stroke-width="0.85" stroke-linejoin="round" />
<polygon points="1481.7,423.0 1481.7,454.0 1511.7,458.0 1527.5,438.0 1533.0,418.0" fill="#d42020" stroke="#0a0a0a" stroke-width="0.85" stroke-linejoin="round" />
<polygon points="1506.0,322.0 1516.0,307.0 1522.0,309.0 1522.0,319.0 1512.0,326.0" fill="#d62222" stroke="#0a0a0a" stroke-width="0.75" stroke-linejoin="round" />
<path d="M1447,318 C1460,311 1515,309 1527,315 C1534,321 1539,330 1541,338 L1541.5,348 C1545,355 1546.5,360 1546.5,367 C1546.5,376 1545,382 1543,387 L1542,390 C1540,395 1536,399 1532,401 L1531,403.5 L1531,417 C1515,429 1465,429 1448,415 L1447.5,403.5 L1443,401 C1439,398 1437,394 1436,391 L1434.5,388 C1432,382 1431,376 1431.5,368 C1432,361 1434,355 1437.5,351 L1437,343 C1439,333 1442,325 1447,318 Z" fill="url(#gDome)" stroke="#111" stroke-width="0.8" stroke-linejoin="round" />
<path d="M1446.700,319 Q1487,345 1528,319" fill="none" stroke="#1a0000" stroke-width="1"/>
<path d="M1437.500,351 Q1488,374 1541.500,348" fill="none" stroke="#1a0000" stroke-width="1"/>
<path d="M1436,391 Q1488,408 1542,390" fill="none" stroke="#1a0000" stroke-width="1"/>
<path d="M1443,401 Q1488,415 1532,401" fill="none" stroke="#1a0000" stroke-width="1"/>
<path d="M1447.500,408 Q1488,423 1531,409" fill="none" stroke="#1a0000" stroke-width="1"/>
<path d="M1507,224 C1532,222 1549,245 1549,268 C1549,291 1535,304 1522,307" fill="#9a9fba" stroke="#0a0a0a" stroke-width="0.800"/>
<path d="M1393,225 L1412,225 C1430,226 1440,233 1462,231 C1480,229 1490,224 1507,224 C1530,226 1545,245 1545,268 C1545,290 1532,303 1520,306 L1480,300 L1400,262 Z" fill="#a9aeca" stroke="#0a0a0a" stroke-width="0.85" stroke-linejoin="round" />
<polygon points="1395.0,243.0 1408.0,231.0 1409.0,246.0 1398.0,255.0" fill="#8e92aa" stroke="#0a0a0a" stroke-width="0.75" stroke-linejoin="round" />
<path d="M1359,252 L1375,236 C1385,230 1392,244 1410,250 C1435,256 1455,250 1470,243 C1490,238 1505,245 1515,262 C1525,280 1522,298 1516,307 L1505,323 C1495,328 1485,328 1478,325 C1465,318 1450,312 1423,313 C1405,314 1395,319 1385,318 L1365,311.5 L1361.7,306.7 Z" fill="#c2c6e2" stroke="#0a0a0a" stroke-width="0.85" stroke-linejoin="round" />
<path d="M1373,262.5 C1395,270 1430,272 1455,265 C1470,260 1485,262 1494,270 C1505,282 1503,300 1490,310 C1482,314 1470,310 1455,303 C1435,297 1400,298 1375,304 Z" fill="#abb0cc" stroke="#0a0a0a" stroke-width="0.85" stroke-linejoin="round" />
<polygon points="1359.0,252.0 1373.0,262.5 1375.0,304.0 1361.7,306.7" fill="#b4b8d4" stroke="#0a0a0a" stroke-width="0.75" stroke-linejoin="round" />
<ellipse cx="1514.0" cy="287.5" rx="3.0" ry="3.0" fill="#c8cce6" stroke="#333" stroke-width="0.6" />
<g fill="#8c8c8c" stroke="none" opacity="0.92">
<g transform="translate(1153,636) scale(1)"><circle cx="-3.500" cy="0.5" r="4"/><circle cx="3.500" cy="0.5" r="4"/><circle cx="0" cy="-2" r="4.200"/><rect x="-0.800" y="2" width="1.600" height="5"/></g>
<g transform="translate(1162,629) scale(1)"><circle cx="-3.500" cy="0.5" r="4"/><circle cx="3.500" cy="0.5" r="4"/><circle cx="0" cy="-2" r="4.200"/><rect x="-0.800" y="2" width="1.600" height="5"/></g>
<g transform="translate(1163,641) scale(1)"><circle cx="-3.500" cy="0.5" r="4"/><circle cx="3.500" cy="0.5" r="4"/><circle cx="0" cy="-2" r="4.200"/><rect x="-0.800" y="2" width="1.600" height="5"/></g>
<g transform="translate(1251,657) scale(1.05)"><circle cx="-3.500" cy="0.5" r="4"/><circle cx="3.500" cy="0.5" r="4"/><circle cx="0" cy="-2" r="4.200"/><rect x="-0.800" y="2" width="1.600" height="5"/></g>
<g transform="translate(1278,656) scale(1)"><circle cx="-3.500" cy="0.5" r="4"/><circle cx="3.500" cy="0.5" r="4"/><circle cx="0" cy="-2" r="4.200"/><rect x="-0.800" y="2" width="1.600" height="5"/></g>
<g transform="translate(1290,651) scale(1)"><circle cx="-3.500" cy="0.5" r="4"/><circle cx="3.500" cy="0.5" r="4"/><circle cx="0" cy="-2" r="4.200"/><rect x="-0.800" y="2" width="1.600" height="5"/></g>
<g transform="translate(1050,685) scale(1)"><circle cx="-3.500" cy="0.5" r="4"/><circle cx="3.500" cy="0.5" r="4"/><circle cx="0" cy="-2" r="4.200"/><rect x="-0.800" y="2" width="1.600" height="5"/></g>
<g transform="translate(1060,680) scale(1)"><circle cx="-3.500" cy="0.5" r="4"/><circle cx="3.500" cy="0.5" r="4"/><circle cx="0" cy="-2" r="4.200"/><rect x="-0.800" y="2" width="1.600" height="5"/></g>
<g transform="translate(1087,679) scale(1)"><circle cx="-3.500" cy="0.5" r="4"/><circle cx="3.500" cy="0.5" r="4"/><circle cx="0" cy="-2" r="4.200"/><rect x="-0.800" y="2" width="1.600" height="5"/></g>
<g transform="translate(1081,710) scale(1)"><circle cx="-3.500" cy="0.5" r="4"/><circle cx="3.500" cy="0.5" r="4"/><circle cx="0" cy="-2" r="4.200"/><rect x="-0.800" y="2" width="1.600" height="5"/></g>
<g transform="translate(1064,708) scale(0.6)"><circle cx="-3.500" cy="0.5" r="4"/><circle cx="3.500" cy="0.5" r="4"/><circle cx="0" cy="-2" r="4.200"/><rect x="-0.800" y="2" width="1.600" height="5"/></g>
<g transform="translate(1178,694) scale(1)"><circle cx="-3.500" cy="0.5" r="4"/><circle cx="3.500" cy="0.5" r="4"/><circle cx="0" cy="-2" r="4.200"/><rect x="-0.800" y="2" width="1.600" height="5"/></g>
<g transform="translate(1172,707) scale(1)"><circle cx="-3.500" cy="0.5" r="4"/><circle cx="3.500" cy="0.5" r="4"/><circle cx="0" cy="-2" r="4.200"/><rect x="-0.800" y="2" width="1.600" height="5"/></g>
<g transform="translate(1184,705) scale(1)"><circle cx="-3.500" cy="0.5" r="4"/><circle cx="3.500" cy="0.5" r="4"/><circle cx="0" cy="-2" r="4.200"/><rect x="-0.800" y="2" width="1.600" height="5"/></g>
<g transform="translate(1273,736) scale(1.1)"><circle cx="-3.500" cy="0.5" r="4"/><circle cx="3.500" cy="0.5" r="4"/><circle cx="0" cy="-2" r="4.200"/><rect x="-0.800" y="2" width="1.600" height="5"/></g>
<g transform="translate(1231,747) scale(1.1)"><circle cx="-3.500" cy="0.5" r="4"/><circle cx="3.500" cy="0.5" r="4"/><circle cx="0" cy="-2" r="4.200"/><rect x="-0.800" y="2" width="1.600" height="5"/></g>
<g transform="translate(1112,822) scale(0.9)"><circle cx="-3.500" cy="0.5" r="4"/><circle cx="3.500" cy="0.5" r="4"/><circle cx="0" cy="-2" r="4.200"/><rect x="-0.800" y="2" width="1.600" height="5"/></g>
<g transform="translate(1106,810) scale(0.8)"><circle cx="-3.500" cy="0.5" r="4"/><circle cx="3.500" cy="0.5" r="4"/><circle cx="0" cy="-2" r="4.200"/><rect x="-0.800" y="2" width="1.600" height="5"/></g>
<g transform="translate(995,848) scale(0.9)"><circle cx="-3.500" cy="0.5" r="4"/><circle cx="3.500" cy="0.5" r="4"/><circle cx="0" cy="-2" r="4.200"/><rect x="-0.800" y="2" width="1.600" height="5"/></g>
<g transform="translate(1002,862) scale(0.9)"><circle cx="-3.500" cy="0.5" r="4"/><circle cx="3.500" cy="0.5" r="4"/><circle cx="0" cy="-2" r="4.200"/><rect x="-0.800" y="2" width="1.600" height="5"/></g>
<g transform="translate(1136,868) scale(1)"><circle cx="-3.500" cy="0.5" r="4"/><circle cx="3.500" cy="0.5" r="4"/><circle cx="0" cy="-2" r="4.200"/><rect x="-0.800" y="2" width="1.600" height="5"/></g>
<g transform="translate(1148,872) scale(0.9)"><circle cx="-3.500" cy="0.5" r="4"/><circle cx="3.500" cy="0.5" r="4"/><circle cx="0" cy="-2" r="4.200"/><rect x="-0.800" y="2" width="1.600" height="5"/></g>
<g transform="translate(1191,822) scale(0.9)"><circle cx="-3.500" cy="0.5" r="4"/><circle cx="3.500" cy="0.5" r="4"/><circle cx="0" cy="-2" r="4.200"/><rect x="-0.800" y="2" width="1.600" height="5"/></g>
<g transform="translate(1198,836) scale(0.9)"><circle cx="-3.500" cy="0.5" r="4"/><circle cx="3.500" cy="0.5" r="4"/><circle cx="0" cy="-2" r="4.200"/><rect x="-0.800" y="2" width="1.600" height="5"/></g>
<g transform="translate(1264,822) scale(0.9)"><circle cx="-3.500" cy="0.5" r="4"/><circle cx="3.500" cy="0.5" r="4"/><circle cx="0" cy="-2" r="4.200"/><rect x="-0.800" y="2" width="1.600" height="5"/></g>
<g transform="translate(1272,836) scale(0.9)"><circle cx="-3.500" cy="0.5" r="4"/><circle cx="3.500" cy="0.5" r="4"/><circle cx="0" cy="-2" r="4.200"/><rect x="-0.800" y="2" width="1.600" height="5"/></g>
<g transform="translate(1341,783) scale(1)"><circle cx="-3.500" cy="0.5" r="4"/><circle cx="3.500" cy="0.5" r="4"/><circle cx="0" cy="-2" r="4.200"/><rect x="-0.800" y="2" width="1.600" height="5"/></g>
<g transform="translate(1335,800) scale(0.9)"><circle cx="-3.500" cy="0.5" r="4"/><circle cx="3.500" cy="0.5" r="4"/><circle cx="0" cy="-2" r="4.200"/><rect x="-0.800" y="2" width="1.600" height="5"/></g>
<g transform="translate(1150,748) scale(0.9)"><circle cx="-3.500" cy="0.5" r="4"/><circle cx="3.500" cy="0.5" r="4"/><circle cx="0" cy="-2" r="4.200"/><rect x="-0.800" y="2" width="1.600" height="5"/></g>
</g>
<g fill="none" stroke="#8c8c8c" stroke-width="2.200" opacity="0.92">
<g transform="translate(1205,787) rotate(12)"><ellipse rx="10.5" ry="17"/><ellipse rx="3.7" ry="5.1" stroke-width="1.200"/><path d="M0,-12.8 l-2.500,4 h5 Z M0,12.8 l-2.500,-4 h5 Z" fill="#8c8c8c" stroke="none"/></g>
<g transform="translate(1081,831) rotate(12)"><ellipse rx="10.5" ry="17"/><ellipse rx="3.7" ry="5.1" stroke-width="1.200"/><path d="M0,-12.8 l-2.500,4 h5 Z M0,12.8 l-2.500,-4 h5 Z" fill="#8c8c8c" stroke="none"/></g>
<g transform="translate(971,893) rotate(12)"><ellipse rx="10.5" ry="17"/><ellipse rx="3.7" ry="5.1" stroke-width="1.200"/><path d="M0,-12.8 l-2.500,4 h5 Z M0,12.8 l-2.500,-4 h5 Z" fill="#8c8c8c" stroke="none"/></g>
<g transform="translate(1134,923) rotate(12)"><ellipse rx="10.5" ry="17"/><ellipse rx="3.7" ry="5.1" stroke-width="1.200"/><path d="M0,-12.8 l-2.500,4 h5 Z M0,12.8 l-2.500,-4 h5 Z" fill="#8c8c8c" stroke="none"/></g>
<g transform="translate(1247,868) rotate(12)"><ellipse rx="10.5" ry="17"/><ellipse rx="3.7" ry="5.1" stroke-width="1.200"/><path d="M0,-12.8 l-2.500,4 h5 Z M0,12.8 l-2.500,-4 h5 Z" fill="#8c8c8c" stroke="none"/></g>
<g transform="translate(1366,805) rotate(12)"><ellipse rx="10.5" ry="17"/><ellipse rx="3.7" ry="5.1" stroke-width="1.200"/><path d="M0,-12.8 l-2.500,4 h5 Z M0,12.8 l-2.500,-4 h5 Z" fill="#8c8c8c" stroke="none"/></g>
<g transform="translate(1167,762) scale(1.0)" stroke-width="3.200" stroke-linecap="round"><path d="M-14,-16 Q-12,8 0,18 L14,22"/><path d="M-14,-16 L4,-10 L14,-13"/><path d="M-4,14 L8,4"/></g>
<g transform="translate(1057,812) scale(0.95)" stroke-width="3.200" stroke-linecap="round"><path d="M-14,-16 Q-12,8 0,18 L14,22"/><path d="M-14,-16 L4,-10 L14,-13"/><path d="M-4,14 L8,4"/></g>
<g transform="translate(947,908) scale(0.9)" stroke-width="3.200" stroke-linecap="round"><path d="M-14,-16 Q-12,8 0,18 L14,22"/><path d="M-14,-16 L4,-10 L14,-13"/><path d="M-4,14 L8,4"/></g>
<path d="M1170,916 L1198,904 M1183,893 L1196,896 L1200,906" stroke-width="3.200" stroke-linecap="round"/>
<path d="M1376,806 L1398,800 M1388,792 L1400,795" stroke-width="3" stroke-linecap="round"/>
</g>
<g fill="#b9b9b9"><path d="M1460,416 l1.200,-4 l1.200,4 l4,1.200 l-4,1.200 l-1.200,4 l-1.200,-4 l-4,-1.200 Z"/><path d="M1443,434 l1.200,-4 l1.200,4 l4,1.200 l-4,1.200 l-1.200,4 l-1.200,-4 l-4,-1.200 Z"/><path d="M1535,430 l1.200,-4 l1.200,4 l4,1.200 l-4,1.200 l-1.200,4 l-1.200,-4 l-4,-1.200 Z"/></g>

<g font-family="Liberation Sans, sans-serif" font-size="9.5">
<line x1="387.5" y1="908" x2="387.5" y2="876" stroke="#7ee08a" stroke-width="2.2"/>
<polygon points="384,882 387.5,870 391,882" fill="#0a7a1a"/>
<line x1="387.5" y1="908" x2="362" y2="904" stroke="#1b2bd8" stroke-width="3"/>
<polygon points="356,903 366,899 365,908" fill="#1020c0"/>
<line x1="387.5" y1="908" x2="372" y2="915" stroke="#d02020" stroke-width="3"/>
<polygon points="365,918 374,911 376,918" fill="#c01010"/>
<text x="385" y="867" fill="#1a9a2a">Y</text>
<text x="346" y="904" fill="#2030d0">Z</text>
<text x="362" y="922" fill="#d02020">X</text>
</g>
</svg>
<svg width="1920" height="40" viewBox="0 0 1920 40" style="position:absolute;left:0;top:0">
<g fill="none" stroke="#da291c" stroke-width="1.500" stroke-linecap="round" stroke-linejoin="round"><path d="M12.200,8 L19.300,8.400 L5.600,26.700"/><path d="M8.800,18 L15.600,18.300 C16.800,20.200 15.800,22.200 14.300,23 L5.600,26.700"/><path d="M24.800,14.300 L19.200,14.500 C17.600,15.600 17.800,17.400 19.200,18.300 L23.300,20.500 C24.700,21.600 24.200,23.400 22.800,24.100 L16.200,24.300"/></g>
<text x="30.400" y="25" font-family="Liberation Sans, sans-serif" font-size="13" font-style="italic" fill="#da291c" stroke="#da291c" stroke-width="0.350" font-weight="bold" textLength="38.400" lengthAdjust="spacingAndGlyphs">SOLID</text><text x="69.800" y="25" font-family="Liberation Sans, sans-serif" font-size="12.800" font-style="italic" fill="#da291c" textLength="42" lengthAdjust="spacingAndGlyphs">WORKS</text>
<polygon points="133,15.5 139,20 133,24.5" fill="#8a8a8a"/>
<line x1="145.5" y1="1" x2="145.5" y2="39" stroke="#cfcfcf"/>
<g transform="translate(182,20)"><path d="M-8,-0.5 L0,-8 L8,-0.5" fill="none" stroke="#16527a" stroke-width="2.4"/><path d="M-5.5,-1 L-5.5,8 L5.5,8 L5.5,-1 L0,-6 Z" fill="#fff" stroke="#333" stroke-width="1.2"/><rect x="-1" y="2" width="3.5" height="6" fill="#fff" stroke="#333" stroke-width="1"/></g>
<g transform="translate(215,20)"><path d="M-6.5,-8.5 L2.5,-8.5 L6.5,-4.5 L6.5,8.5 L-6.5,8.5 Z" fill="#fdfdfd" stroke="#333" stroke-width="1.3"/><path d="M2.5,-8.5 L2.5,-4.5 L6.5,-4.5" fill="none" stroke="#333" stroke-width="1"/></g>
<polygon points="234.8,18.2 241.2,18.2 238,21.8" fill="#222"/>
<g transform="translate(262,20)"><path d="M-9,8 L-9,-5.5 L-4,-5.5 L-2.5,-3.5 L5,-3.5 L5,-1" fill="#f4f4f4" stroke="#333" stroke-width="1.2"/><path d="M-9,8 L-5.5,-1 L10,-1 L6.5,8 Z" fill="#f1f1f1" stroke="#333" stroke-width="1.2"/><path d="M-3,-9 C1,-9 3,-7 3,-4 M0,-5.5 L3,-2.5 L6,-6" fill="none" stroke="#1a8a1a" stroke-width="2.2"/></g>
<polygon points="281.8,18.2 288.2,18.2 285,21.8" fill="#222"/>
<g transform="translate(309,20)"><rect x="-8.5" y="-8.5" width="17" height="17" rx="1.5" fill="#1f74a8" stroke="#0e3d5c" stroke-width="1.2"/><rect x="-5" y="-8" width="10" height="7.5" fill="#e6eef4" stroke="#0e3d5c" stroke-width="0.7"/><rect x="-3.5" y="2.5" width="7" height="6" fill="#8a8f94" stroke="#0e3d5c" stroke-width="0.7"/><path d="M-3.5,-6 H3.5 M-3.5,-4 H3.5 M-3.5,-2 H3.5" stroke="#6d8596" stroke-width="0.7"/></g>
<polygon points="328.8,18.2 335.2,18.2 332,21.8" fill="#222"/>
<g transform="translate(356,20)"><rect x="-5" y="-8.5" width="10" height="6" fill="#fff" stroke="#333" stroke-width="1.1"/><rect x="-8.5" y="-3" width="17" height="8" rx="1.5" fill="#2a88bb" stroke="#0e3d5c" stroke-width="1.1"/><rect x="-5.5" y="2.5" width="11" height="6" fill="#fff" stroke="#333" stroke-width="1.1"/></g>
<polygon points="375.8,18.2 382.2,18.2 379,21.8" fill="#222"/>
<g transform="translate(402,20)"><path d="M-3.500,-3.200 C4,-6.500 9,0.500 2,7" fill="none" stroke="#154a6e" stroke-width="4.200" stroke-linecap="round"/><path d="M-3.500,-3.200 C4,-6.500 9,0.500 2,7" fill="none" stroke="#3b93cc" stroke-width="2.400" stroke-linecap="round"/><polygon points="-9,-8.500 -8,2 1,-3.500" fill="#3b93cc" stroke="#154a6e" stroke-width="0.900" stroke-linejoin="round"/></g>
<polygon points="422.8,18.2 429.2,18.2 426,21.8" fill="#222"/>
<g transform="translate(450,20)"><path d="M3.500,-3.200 C-4,-6.500 -9,0.500 -2,7" fill="none" stroke="#cfcfcf" stroke-width="4" stroke-linecap="round"/><polygon points="9,-8.500 8,2 -1,-3.500" fill="#d4d4d4" stroke="#c4c4c4" stroke-width="0.900"/></g>
<polygon points="469.8,18.2 476.2,18.2 473,21.8" fill="#bdbdbd"/>
<g transform="translate(497,20)"><path d="M-5.5,-9.5 L-5.5,6 L-1.5,2.5 L1.5,9 L4,8 L1,1.5 L6,1 Z" fill="#fff" stroke="#111" stroke-width="1.2" stroke-linejoin="round"/></g>
<polygon points="516.8,18.2 523.2,18.2 520,21.8" fill="#222"/>
<g transform="translate(544,20)"><rect x="-4.5" y="-8" width="9" height="16" rx="4" fill="#1c1c1c"/><circle cx="0" cy="-4" r="2.6" fill="#e02a1a"/><circle cx="0" cy="3.8" r="2.6" fill="#38a018"/></g>
<g transform="translate(577,20)"><rect x="-7.5" y="-8.5" width="15" height="17" fill="#fff" stroke="#222" stroke-width="1.3"/><path d="M-5,-4.5 h3 M-5,0 h3 M-5,4.5 h3" stroke="#1a6a9a" stroke-width="2.2"/><path d="M0,-4.5 h5.5 M0,0 h5.5 M0,4.5 h5.5" stroke="#222" stroke-width="1.2"/></g>
<g transform="translate(610,20)"><circle r="6" fill="none" stroke="#444" stroke-width="2.4" stroke-dasharray="2.6 2.1"/><circle r="5" fill="#f5f5f5" stroke="#444" stroke-width="1.2"/><circle r="2.2" fill="#fff" stroke="#444" stroke-width="1.1"/></g>
<polygon points="629.8,18.2 636.2,18.2 633,21.8" fill="#222"/>
<text x="966" y="26" font-family="Liberation Sans, sans-serif" font-size="14" textLength="163" lengthAdjust="spacingAndGlyphs" fill="#111">Rocker Bogie Mechanism *</text>
<rect x="1455.5" y="6.5" width="251" height="28" fill="#fff" stroke="#bdbdbd"/>
<rect x="1461" y="11" width="20" height="19" rx="1.5" fill="#111"/><path d="M1465.5,15.5 L1470.5,20 L1465.5,24.5" fill="none" stroke="#fff" stroke-width="1.6"/><line x1="1471.5" y1="25.5" x2="1477.5" y2="25.5" stroke="#fff" stroke-width="1.6"/>
<text x="1488" y="26" font-family="Liberation Sans, sans-serif" font-size="13.5" textLength="109" lengthAdjust="spacingAndGlyphs" fill="#6e6e6e">Search Commands</text>
<circle cx="1675" cy="18.5" r="5.8" fill="none" stroke="#666" stroke-width="1.5"/><line x1="1679" y1="23" x2="1684.5" y2="29" stroke="#666" stroke-width="2"/>
<polygon points="1694.3,18.2 1700.7,18.2 1697.5,21.8" fill="#666"/>
<circle cx="1731" cy="20" r="8.5" fill="none" stroke="#333" stroke-width="1.4"/><circle cx="1731" cy="17.5" r="3.2" fill="none" stroke="#333" stroke-width="1.3"/><path d="M1725,25.5 C1726,21.5 1736,21.5 1737,25.5" fill="none" stroke="#333" stroke-width="1.3"/>
<circle cx="1772" cy="20" r="8.5" fill="none" stroke="#333" stroke-width="1.4"/><text x="1772" y="25" text-anchor="middle" font-family="Liberation Sans, sans-serif" font-size="13.5" fill="#222">?</text>
<line x1="1807.5" y1="25.5" x2="1818" y2="25.5" stroke="#222" stroke-width="1.6"/>
<rect x="1847.5" y="17.5" width="9.5" height="8" fill="#f5f5f5" stroke="#222" stroke-width="1.4"/><path d="M1851,17 V14 H1861 V22.5 H1857.5" fill="none" stroke="#222" stroke-width="1.4"/>
<path d="M1889.5,14.5 L1900.5,25.5 M1900.5,14.5 L1889.5,25.5" stroke="#222" stroke-width="1.6"/>
</svg>
<svg width="1920" height="81" viewBox="0 40 1920 81" style="position:absolute;left:0;top:40px" font-family="Liberation Sans, sans-serif" font-size="14">
<rect x="1420.5" y="41.5" width="50" height="77" fill="#b4b4b4" stroke="#8a8a8a"/>
<line x1="731.5" y1="42" x2="731.5" y2="119" stroke="#dadada"/>
<line x1="825.5" y1="42" x2="825.5" y2="119" stroke="#dadada"/>
<line x1="967.5" y1="42" x2="967.5" y2="119" stroke="#dadada"/>
<line x1="1056.5" y1="42" x2="1056.5" y2="119" stroke="#dadada"/>
<line x1="1125.5" y1="42" x2="1125.5" y2="119" stroke="#dadada"/>
<line x1="1226.5" y1="42" x2="1226.5" y2="119" stroke="#dadada"/>
<line x1="1300.5" y1="42" x2="1300.5" y2="119" stroke="#dadada"/>
<g transform="translate(44,56)"><path d="M-6,-3 L0,-7 L7,-3 L7,4 L0,8 L-6,4 Z" fill="#ececec" stroke="#c9c9c9"/><path d="M-2,6 L6,-4 L9,-1 L1,8 L-3,9 Z" fill="#f4f4f4" stroke="#bdbdbd"/></g>
<g transform="translate(150,56)"><path d="M-9,8 L-9,-2 L-5,-2 L-4,-0.5 L3,-0.5 L3,1.5" fill="#f1f1f1" stroke="#333" stroke-width="1.1"/><path d="M-9,8 L-6,1.5 L7,1.5 L4,8 Z" fill="#eee" stroke="#333" stroke-width="1.1"/><path d="M-6,-3 C-6,-7 -3,-8 0,-8" fill="none" stroke="#1a8a1a" stroke-width="2"/><polygon points="-1,-11 3,-8 -1,-5" fill="#1a8a1a"/><g transform="translate(5,-5) scale(0.75)"><path d="M-6,-2 L0,-5 L6,-2 L6,4 L0,7 L-6,4 Z" fill="#f2c21c" stroke="#5a4500" stroke-width="0.9"/><path d="M-6,-2 L0,1 L6,-2 M0,1 V7" fill="none" stroke="#5a4500" stroke-width="0.8"/></g><rect x="6" y="-8" width="4" height="4" fill="#2a88bb" stroke="#123" stroke-width="0.6"/></g>
<g transform="translate(235,56)"><path d="M-6,-6 L4,5 C6,7.5 9,5 7,2.5 L-3,-8 C-6,-11 -10,-7 -7,-4 L3,7" fill="none" stroke="#333" stroke-width="1.6" stroke-linecap="round"/></g>
<g transform="translate(311.5,56)"><rect x="-8" y="-8" width="16" height="15" fill="#f2f2f2" stroke="#c4c4c4" stroke-width="1.2"/><rect x="-8" y="-8" width="16" height="3" fill="#d9d9d9"/><path d="M-3,-2 L1,-2 L4,1 L4,5 L-3,5 Z" fill="#e2e2e2" stroke="#c9c9c9"/></g>
<g transform="translate(453.5,56)"><g fill="#fff" stroke="#222" stroke-width="1.2"><rect x="-8" y="-8" width="6" height="6" fill="#f2c21c"/><rect x="1" y="-8" width="6" height="6"/><rect x="-8" y="2" width="6" height="6"/><rect x="1" y="2" width="6" height="6"/></g><path d="M-2,-5 h3 M-2,5 h3" stroke="#222" stroke-width="1"/></g>
<g transform="translate(574,56)"><path d="M-8.500,8 V-7 H-3 L-1.500,-5 H8.500 V8 Z" fill="#e9e9ee" stroke="#555" stroke-width="1.300"/><rect x="-5.500" y="-1" width="10" height="6" rx="2" fill="#fff" stroke="#555" stroke-width="1.100"/><polygon points="3,-10 10,-10 4.500,-3.500 8,-3.500 -5,7 -1,-1 -4.500,-1" fill="#f08a10" stroke="#a85400" stroke-width="0.500"/></g>
<g transform="translate(669,56)"><path d="M-9,-4 L-3,-8 L4,-8 L4,5 L-2,9 L-9,9 Z" fill="#f6f6f6" stroke="#444" stroke-width="1.100"/><path d="M-9,-4 H-2 V9 M-2,-4 L4,-8" fill="none" stroke="#444" stroke-width="1"/><path d="M0,-6 L5,-9 L10,-7 L10,3 L5,6 L0,4 Z" fill="#f2c21c" stroke="#5a4500" stroke-width="1"/><path d="M-4,0 H7 M4,-3 L7.500,0 L4,3" fill="none" stroke="#111" stroke-width="1.700"/></g>
<g transform="translate(778.5,56)"><path d="M-8,-1 L-4,-3 L-4,-7 L1,-9 L4,-7 L4,-1 L8,1 L8,6 L1,9 L-8,4 Z" fill="#f2c21c" stroke="#4a3a00" stroke-width="1.100" stroke-linejoin="round"/><path d="M-8,-1 L1,4 L8,1 M1,4 V9" fill="none" stroke="#4a3a00" stroke-width="0.900"/><ellipse cx="6" cy="-1" rx="4" ry="5" fill="#fff" stroke="#333" stroke-width="1"/><ellipse cx="6.500" cy="-1" rx="1.500" ry="2.500" fill="#333"/><path d="M-6,-8 a6,5 0 0 1 10,-2 M4,-12 v3 h-3" fill="none" stroke="#333" stroke-width="1.200"/></g>
<g transform="translate(860.5,56)"><path d="M-9,-6 L-5,-9 L-1,-6 V8 L-5,9 L-9,7 Z" fill="#d9dbe4" stroke="#444" stroke-width="1"/><path d="M1,-6 L5,-9 L9,-6 V7 L5,9 L1,8 Z" fill="#c4c7d2" stroke="#444" stroke-width="1"/><path d="M-6,-8 H6 V-4 H2.500 V6 H-2.500 V-4 H-6 Z" fill="#2a88bb" stroke="#0e3d5c" stroke-width="1"/></g>
<g transform="translate(930.5,56)"><path d="M-3,-5 L5,-8 L5,6 L-3,9 Z" fill="#2a88bb" stroke="#123" stroke-width="0.9"/><path d="M5,-8 L9,-6 L9,8 L5,6" fill="#b8dff4" stroke="#123" stroke-width="0.9"/><circle cx="-8" cy="-8" r="2" fill="#2a88bb"/><path d="M-8,-3 v10" stroke="#555" stroke-dasharray="2 1.5"/></g>
<g transform="translate(1012,56)"><circle cx="-2" cy="3" r="6" fill="#d8d8d8" stroke="#555" stroke-width="1.3" stroke-dasharray="2.4 1.4"/><circle cx="-2" cy="3" r="2.2" fill="#fff" stroke="#555"/><circle cx="5" cy="-2" r="4.5" fill="#e4e4e4" stroke="#555" stroke-width="1.2" stroke-dasharray="2 1.2"/><path d="M-8,-9 l2,3 l3,-1 l-2,3 l2,2 l-4,0 l-2,3 l-1,-4 l-3,-1 l3,-2 Z" fill="#f0a020" stroke="#a05a00" stroke-width="0.6"/></g>
<g transform="translate(1091,56)"><rect x="-9" y="-8" width="15" height="12" fill="#fff" stroke="#1a5f8a" stroke-width="1.2"/><rect x="-9" y="-8" width="15" height="3.5" fill="#1f74a8"/><path d="M-9,-1.5 h15 M-9,1.5 h15 M-4,-4.5 v8.5 M1,-4.5 v8.5" stroke="#1a5f8a" stroke-width="0.8"/><g transform="translate(4,3) scale(0.8)"><path d="M-6,-2 L0,-5 L6,-2 L6,4 L0,7 L-6,4 Z" fill="#f2c21c" stroke="#5a4500" stroke-width="0.9"/><path d="M-6,-2 L0,1 L6,-2 M0,1 V7" fill="none" stroke="#5a4500" stroke-width="0.8"/></g></g>
<g transform="translate(1176,56)"><g transform="translate(-3,3) scale(0.85)"><path d="M-6,-2 L0,-5 L6,-2 L6,4 L0,7 L-6,4 Z" fill="#f2c21c" stroke="#5a4500" stroke-width="0.9"/><path d="M-6,-2 L0,1 L6,-2 M0,1 V7" fill="none" stroke="#5a4500" stroke-width="0.8"/></g><rect x="3" y="-9" width="5" height="5" fill="#2a88bb" stroke="#123" stroke-width="0.7"/><path d="M-2,-3 L3,-7" stroke="#222" stroke-width="1" stroke-dasharray="1.5 1"/></g>
<g transform="translate(1263.5,56)"><path d="M-8,-8 L8,-3 L8,2 L-8,-3 Z" fill="#f0c030" stroke="#6a5000" stroke-width="0.9"/><path d="M-5,-6.5 v2.5 M-2,-5.5 v2.5 M1,-4.5 v2.5 M4,-3.5 v2.5" stroke="#6a5000" stroke-width="0.8"/><path d="M-8,1 L3,7" stroke="#1f74a8" stroke-width="2.2"/><polygon points="1,3 8,9 0,9" fill="#1f74a8"/></g>
<g transform="translate(1361,56)"><path d="M-3,-4 L4,-8 L10,-5 L10,4 L3,8 L-3,5 Z" fill="#f4f4f4" stroke="#333" stroke-width="1"/><path d="M-3,-4 L3,-1 L10,-5 M3,-1 V8" fill="none" stroke="#333" stroke-width="0.9"/><g transform="translate(3,0) scale(0.55)"><path d="M-6,-2 L0,-5 L6,-2 L6,4 L0,7 L-6,4 Z" fill="#f2c21c" stroke="#5a4500" stroke-width="0.9"/><path d="M-6,-2 L0,1 L6,-2 M0,1 V7" fill="none" stroke="#5a4500" stroke-width="0.8"/></g><path d="M-9,8 L-4,-2 L1,8 Z" fill="#f6c616" stroke="#222" stroke-width="1"/><path d="M-4,1.5 v3.5 M-4,6 v1" stroke="#111" stroke-width="1.3"/></g>
<g transform="translate(1445,56)"><path d="M6,3 A7.5,7.5 0 1 1 3,-6" fill="none" stroke="#2a7fb0" stroke-width="2.6"/><polygon points="1,-10.5 9,-7.5 3,-2" fill="#2a7fb0"/></g>
<g transform="translate(1506.5,56)"><rect x="-9" y="-5" width="18" height="13" rx="1.5" fill="#f4f4f4" stroke="#333" stroke-width="1.2"/><rect x="-4" y="-8" width="8" height="3.5" fill="#ddd" stroke="#333" stroke-width="1"/><circle cx="0" cy="1.5" r="4.2" fill="#fff" stroke="#333" stroke-width="1.2"/><circle cx="0" cy="1.5" r="2" fill="#666"/></g>
<g transform="translate(1593,56)"><g transform="translate(0,-1) scale(1.15)"><path d="M-6,-2 L0,-5 L6,-2 L6,4 L0,7 L-6,4 Z" fill="#f2c21c" stroke="#5a4500" stroke-width="0.9"/><path d="M-6,-2 L0,1 L6,-2 M0,1 V7" fill="none" stroke="#5a4500" stroke-width="0.8"/></g><rect x="-3" y="-9" width="5" height="5" fill="#2a88bb" stroke="#123" stroke-width="0.6"/><path d="M-8,5 L0,9 L8,5" fill="none" stroke="#5a4500" stroke-width="1"/></g>
<text x="33.0" y="81" fill="#b7b7b7" textLength="22" lengthAdjust="spacingAndGlyphs">Edit</text>
<text x="8.0" y="100" fill="#b7b7b7" textLength="72" lengthAdjust="spacingAndGlyphs">Component</text>
<text x="91.0" y="81" fill="#111" textLength="118" lengthAdjust="spacingAndGlyphs">Insert Components</text>
<polygon points="146.3,106.2 152.7,106.2 149.5,109.8" fill="#222"/>
<text x="219.5" y="81" fill="#111" textLength="31" lengthAdjust="spacingAndGlyphs">Mate</text>
<text x="275.5" y="81" fill="#b7b7b7" textLength="72" lengthAdjust="spacingAndGlyphs">Component</text>
<text x="261.0" y="100" fill="#b7b7b7" textLength="101" lengthAdjust="spacingAndGlyphs">Preview Window</text>
<text x="372.0" y="81" fill="#111" textLength="163" lengthAdjust="spacingAndGlyphs">Linear Component Pattern</text>
<polygon points="449.8,106.2 456.2,106.2 453.0,109.8" fill="#222"/>
<text x="556.0" y="81" fill="#111" textLength="36" lengthAdjust="spacingAndGlyphs">Smart</text>
<text x="545.0" y="100" fill="#111" textLength="58" lengthAdjust="spacingAndGlyphs">Fasteners</text>
<text x="613.0" y="81" fill="#111" textLength="112" lengthAdjust="spacingAndGlyphs">Move Component</text>
<polygon points="665.3,106.2 671.7,106.2 668.5,109.8" fill="#222"/>
<text x="738.0" y="81" fill="#111" textLength="81" lengthAdjust="spacingAndGlyphs">Show Hidden</text>
<text x="739.0" y="100" fill="#111" textLength="79" lengthAdjust="spacingAndGlyphs">Components</text>
<text x="832.0" y="81" fill="#111" textLength="57" lengthAdjust="spacingAndGlyphs">Assemb...</text>
<polygon points="856.8,106.2 863.2,106.2 860.0,109.8" fill="#222"/>
<text x="899.5" y="81" fill="#111" textLength="62" lengthAdjust="spacingAndGlyphs">Referenc...</text>
<polygon points="926.8,106.2 933.2,106.2 930.0,109.8" fill="#222"/>
<text x="974.0" y="81" fill="#111" textLength="76" lengthAdjust="spacingAndGlyphs">New Motion</text>
<text x="994.5" y="100" fill="#111" textLength="35" lengthAdjust="spacingAndGlyphs">Study</text>
<text x="1074.5" y="81" fill="#111" textLength="33" lengthAdjust="spacingAndGlyphs">Bill of</text>
<text x="1063.0" y="100" fill="#111" textLength="56" lengthAdjust="spacingAndGlyphs">Materials</text>
<text x="1132.0" y="81" fill="#111" textLength="88" lengthAdjust="spacingAndGlyphs">Exploded View</text>
<polygon points="1172.3,106.2 1178.7,106.2 1175.5,109.8" fill="#222"/>
<text x="1233.0" y="81" fill="#111" textLength="61" lengthAdjust="spacingAndGlyphs">Instant3D</text>
<text x="1307.0" y="81" fill="#111" textLength="108" lengthAdjust="spacingAndGlyphs">Update SpeedPak</text>
<text x="1317.0" y="100" fill="#111" textLength="88" lengthAdjust="spacingAndGlyphs">Subassemblies</text>
<text x="1425.5" y="81" fill="#111" textLength="39" lengthAdjust="spacingAndGlyphs">Rotate</text>
<text x="1430.5" y="100" fill="#111" textLength="29" lengthAdjust="spacingAndGlyphs">View</text>
<text x="1494.0" y="81" fill="#111" textLength="25" lengthAdjust="spacingAndGlyphs">Take</text>
<text x="1478.0" y="100" fill="#111" textLength="57" lengthAdjust="spacingAndGlyphs">Snapshot</text>
<text x="1545.0" y="81" fill="#111" textLength="96" lengthAdjust="spacingAndGlyphs">Large Assembly</text>
<text x="1568.5" y="100" fill="#111" textLength="49" lengthAdjust="spacingAndGlyphs">Settings</text>
<path d="M1900.5,110.5 L1905.5,105.5 L1910.5,110.5" fill="none" stroke="#222" stroke-width="1.6"/>
</svg>
<svg width="760" height="30" viewBox="0 121 760 30" style="position:absolute;left:0;top:121px" font-family="Liberation Sans, sans-serif" font-size="15">
<rect x="0" y="121" width="88" height="29.500" fill="#f7f7f7"/>
<line x1="0" y1="149.500" x2="88" y2="149.500" stroke="#8496a0"/>
<text x="11.5" y="141" font-weight="bold" textLength="67" lengthAdjust="spacingAndGlyphs" fill="#111">Assembly</text>
<rect x="88.5" y="121.5" width="63" height="28" fill="#d1d1d1" stroke="#8c8c8c"/>
<text x="98.0" y="141" textLength="44" lengthAdjust="spacingAndGlyphs" fill="#111">Layout</text>
<rect x="151.5" y="121.5" width="62" height="28" fill="#d1d1d1" stroke="#8c8c8c"/>
<text x="161.0" y="141" textLength="43" lengthAdjust="spacingAndGlyphs" fill="#111">Sketch</text>
<rect x="213.5" y="121.5" width="70" height="28" fill="#d1d1d1" stroke="#8c8c8c"/>
<text x="223.5" y="141" textLength="50" lengthAdjust="spacingAndGlyphs" fill="#111">Markup</text>
<rect x="283.5" y="121.5" width="74" height="28" fill="#d1d1d1" stroke="#8c8c8c"/>
<text x="292.5" y="141" textLength="56" lengthAdjust="spacingAndGlyphs" fill="#111">Evaluate</text>
<rect x="357.5" y="121.5" width="173" height="28" fill="#d1d1d1" stroke="#8c8c8c"/>
<text x="370.0" y="141" textLength="148" lengthAdjust="spacingAndGlyphs" fill="#111">SOLIDWORKS Add-Ins</text>
<rect x="530.5" y="121.5" width="56" height="28" fill="#d1d1d1" stroke="#8c8c8c"/>
<text x="542.0" y="141" textLength="33" lengthAdjust="spacingAndGlyphs" fill="#111">MBD</text>
<rect x="586.5" y="121.5" width="157" height="28" fill="#d1d1d1" stroke="#8c8c8c"/>
<text x="599.2" y="141" textLength="128" lengthAdjust="spacingAndGlyphs" fill="#111">SOLIDWORKS CAM</text>
</svg>
<svg width="970" height="28" viewBox="950 123 970 28" style="position:absolute;left:950px;top:123px">
<g transform="translate(961,137)"><circle cx="1.5" cy="-2" r="5.5" fill="#eaf4fb" stroke="#555" stroke-width="1.4"/><path d="M-2.5,2.5 L-8,8.5" stroke="#3f88bd" stroke-width="2.8" stroke-linecap="round"/><path d="M-7,-7 l3,3 M-7,-7 h3 M-7,-7 v3" stroke="#1f74a8" stroke-width="1.2"/></g>
<g transform="translate(988,137)"><circle cx="1.5" cy="-2" r="5.5" fill="#eaf4fb" stroke="#555" stroke-width="1.4"/><path d="M-2.5,2.5 L-8,8.5" stroke="#3f88bd" stroke-width="2.8" stroke-linecap="round"/><path d="M-4,-8 h3 M-4,-8 v3 M7,3 v3 h-3" stroke="#333" stroke-width="1" fill="none"/></g>
<g transform="translate(1014,137)"><path d="M-6,4 L3,-7 L8,-3 L0,7 Z" fill="#d9dbe6" stroke="#555" stroke-width="1"/><path d="M1,5 H-8 M-8,5 l3,-3 M-8,5 l3,3" stroke="#1f74a8" stroke-width="1.8" fill="none"/></g>
<g transform="translate(1040,137)"><path d="M-8,-3 C-5,-7 -2,-7 0,-3 C2,-7 6,-7 8,-3 V7 C6,3 2,3 0,7 C-2,3 -5,3 -8,7 Z" fill="#9fb4c4" stroke="#333" stroke-width="1"/><path d="M0,-3 V7" stroke="#333"/></g>
<g transform="translate(1066,137)"><path d="M-7,5 L2,-7 L6,-4 L-2,8 Z" fill="#e8e0c8" stroke="#555" stroke-width="1"/><text x="1" y="9" font-family="Liberation Sans, sans-serif" font-size="11" font-weight="bold" fill="#1f74a8">A</text><path d="M-8,-8 l3,2 l3,-2 l-1,3 l2,2 h-3 l-1,3 l-1,-3 h-3 l2,-2 Z" fill="#f0a020"/></g>
<g transform="translate(1092,137)"><path d="M-7,-4 L-1,-8 L8,-6 L8,4 L1,8 L-7,6 Z" fill="#cfe6f5" stroke="#333" stroke-width="1"/><path d="M-7,-4 L1,-2 L8,-6 M1,-2 V8" fill="none" stroke="#333" stroke-width="0.9"/><path d="M-7,-4 L1,-2 V8 L-7,6 Z" fill="#fff" stroke="#555" stroke-dasharray="2 1.2"/></g>
<polygon points="1107.8,136.2 1114.2,136.2 1111,139.8" fill="#8c8c8c"/>
<g transform="translate(1132,137)"><path d="M-7,-4 L-1,-8 L8,-6 L8,4 L1,8 L-7,6 Z" fill="#6fb4e0" stroke="#333" stroke-width="1"/><path d="M-7,-4 L1,-2 L8,-6 M1,-2 V8" fill="none" stroke="#333" stroke-width="0.9"/><path d="M-7,-4 L1,-2 V8 L-7,6 Z" fill="#e9f3fa" stroke="#333" stroke-width="0.9"/></g>
<polygon points="1147.8,136.2 1154.2,136.2 1151,139.8" fill="#8c8c8c"/>
<g transform="translate(1172,137)"><ellipse cx="0" cy="0" rx="8" ry="5" fill="#dcdcdc" stroke="#777" stroke-width="1"/><ellipse cx="0" cy="0" rx="2.5" ry="4.5" fill="#555"/><path d="M0,5 V9" stroke="#777" stroke-width="1.3"/></g>
<polygon points="1187.8,136.2 1194.2,136.2 1191,139.8" fill="#8c8c8c"/>
<g transform="translate(1211,137)"><g transform="translate(-1,-1)"><circle r="7.5" fill="#e63a1a"/><path d="M0,0 L-7.5,0 A7.5,7.5 0 0 0 0,7.5 Z" fill="#2aa02a"/><path d="M0,0 L0,7.5 A7.5,7.5 0 0 0 7.5,0 Z" fill="#f2c21c"/><path d="M0,0 L-7.5,0 A7.5,7.5 0 0 1 -1,-7.400 Z" fill="#3a8ad8"/><ellipse cx="-2" cy="-3.500" rx="3" ry="2" fill="#fff" opacity="0.450"/></g><path d="M1,7 L7,-1 L9.5,1 L3.5,9 L0.5,9.5 Z" fill="#f0d890" stroke="#555" stroke-width="0.8"/></g>
<g transform="translate(1237,137)"><g transform="translate(0,-2)"><circle r="7.5" fill="#e63a1a"/><path d="M0,0 L-7.5,0 A7.5,7.5 0 0 0 0,7.5 Z" fill="#2aa02a"/><path d="M0,0 L0,7.5 A7.5,7.5 0 0 0 7.5,0 Z" fill="#f2c21c"/><path d="M0,0 L-7.5,0 A7.5,7.5 0 0 1 -1,-7.400 Z" fill="#3a8ad8"/><ellipse cx="-2" cy="-3.500" rx="3" ry="2" fill="#fff" opacity="0.450"/></g><path d="M-9,3 H9 V9 H-9 Z" fill="#444"/><path d="M-6,4 l2,-3 l2,3 Z M2,4 l2,-3 l2,3 Z" fill="#ddd"/></g>
<polygon points="1253.8,136.2 1260.2,136.2 1257,139.8" fill="#8c8c8c"/>
<g transform="translate(1278,137)"><rect x="-8.5" y="-7.5" width="17" height="11.5" fill="#dcdcdc" stroke="#555" stroke-width="1.3"/><path d="M0,4 V7.5 M-5,8 H5" stroke="#555" stroke-width="1.6"/></g>
<polygon points="1293.8,136.2 1300.2,136.2 1297,139.8" fill="#8c8c8c"/>
<rect x="1791.5" y="131.5" width="10" height="12" fill="none" stroke="#9a9a9a"/><polygon points="1797.5,134.5 1797.5,140.5 1793.5,137.5" fill="#9a9a9a"/>
<rect x="1817.5" y="131.5" width="10" height="12" fill="none" stroke="#9a9a9a"/><polygon points="1821.5,134.5 1821.5,140.5 1825.5,137.5" fill="#9a9a9a"/>
<line x1="1844" y1="141.5" x2="1854" y2="141.5" stroke="#9a9a9a" stroke-width="1.6"/>
<rect x="1869.5" y="135.5" width="8" height="7" fill="#fff" stroke="#9a9a9a" stroke-width="1.2"/><path d="M1872.5,135 V132 H1882 V139.5 H1878" fill="none" stroke="#9a9a9a" stroke-width="1.2"/>
<path d="M1896,132 L1906.5,143 M1906.5,132 L1896,143" stroke="#9a9a9a" stroke-width="1.3"/>
</svg>
<svg width="350" height="830" viewBox="0 150 350 830" style="position:absolute;left:0;top:150px" font-family="Liberation Sans, sans-serif" font-size="14.7">
<rect x="0" y="150" width="336.5" height="828" fill="#f0f0f0"/>
<line x1="336.5" y1="150" x2="336.5" y2="978" stroke="#8a8a8a"/>
<rect x="1" y="150.500" width="332" height="3.500" fill="#f3f3f3"/>
<line x1="1" y1="154.500" x2="333" y2="154.500" stroke="#d4d4d4" stroke-width="1"/>
<rect x="0" y="155" width="333" height="19" fill="#f7f7f7"/>
<circle cx="166.5" cy="163.5" r="2.2" fill="#e8e8e8" stroke="#9a9a9a" stroke-width="0.8"/>
<line x1="0" y1="174.5" x2="333" y2="174.5" stroke="#d0d0d0"/>
<line x1="0.5" y1="205" x2="0.5" y2="978" stroke="#9a9a9a"/>
<rect x="2" y="179" width="39" height="26" fill="#f5f5f5"/>
<rect x="41.5" y="179.5" width="40.100" height="25" fill="#d2d2d2" stroke="#9a9a9a"/>
<rect x="81.6" y="179.5" width="40.100" height="25" fill="#d2d2d2" stroke="#9a9a9a"/>
<rect x="121.7" y="179.5" width="40.100" height="25" fill="#d2d2d2" stroke="#9a9a9a"/>
<rect x="161.8" y="179.5" width="40.100" height="25" fill="#d2d2d2" stroke="#9a9a9a"/>
<rect x="201.9" y="179.5" width="40.100" height="25" fill="#d2d2d2" stroke="#9a9a9a"/>
<rect x="242.0" y="179.5" width="40.100" height="25" fill="#d2d2d2" stroke="#9a9a9a"/>
<rect x="282.1" y="179.5" width="40.100" height="25" fill="#d2d2d2" stroke="#9a9a9a"/>
<line x1="2" y1="204.5" x2="333" y2="204.5" stroke="#b5b5b5"/>
<rect x="2" y="179" width="39" height="26" fill="#f5f5f5"/>
<line x1="2" y1="179.500" x2="322" y2="179.500" stroke="#8e8e8e"/>
<g transform="translate(22.5,192)" stroke-linejoin="round"><g stroke="#5a4000" stroke-width="0.9"><polygon points="-8.5,-2 -3,-5.500 -3,0 2.5,3 2.5,9 -8.5,2.500" fill="#f5c818"/><polygon points="2.500,3 8,0.500 8,6 2.500,9" fill="#f2d448"/><polygon points="-8.500,-2 -3,-5.500 0,-4 -5,-0.500" fill="#fae88a"/></g><g stroke="#123a55" stroke-width="0.9"><polygon points="-3,-5 2,-8 7.500,-5.500 7.500,1 2.500,3.500 -3,0.500" fill="#6cbde8"/><polygon points="-3,-5 2,-8 7.500,-5.500 2.500,-2.500" fill="#a8dcf5"/><path d="M2.500,-2.500 V3.500" fill="none"/></g></g>
<g transform="translate(61,192)"><rect x="-8" y="-8" width="16" height="16" fill="#fff" stroke="#123a55" stroke-width="1.2"/><rect x="-8" y="-8" width="16" height="3" fill="#1f74a8"/><path d="M-5.5,-2 h2.5 M-5.5,1.5 h2.5 M-5.5,5 h2.5" stroke="#1f74a8" stroke-width="1.8"/><path d="M-1,-2 h7 M-1,1.5 h7 M-1,5 h7" stroke="#222" stroke-width="1"/></g>
<g transform="translate(101.500,192)" fill="#f4f4f4" stroke="#222" stroke-width="1.1"><rect x="-5" y="-9" width="7" height="5"/><rect x="0" y="-2" width="7" height="5"/><rect x="0" y="4" width="7" height="5"/><path d="M-6.5,-9 V7 H0 M-6.5,0.5 H0" fill="none"/></g>
<g transform="translate(141.500,192)" fill="none" stroke="#111" stroke-width="1.8"><circle r="5.5"/><path d="M0,-9.5 V9.5 M-9.5,0 H9.5"/></g>
<g transform="translate(181.500,191)"><circle r="8.5" fill="#e63a1a"/><path d="M0,0 L-8.5,0 A8.5,8.5 0 0 0 0,8.5 Z" fill="#2a7fd0"/><path d="M0,0 L0,8.5 A8.5,8.5 0 0 0 8.5,0 Z" fill="#f2c21c"/><path d="M0,0 L-8.5,0 A8.5,8.5 0 0 1 -2,-8.2 Z" fill="#2aa02a"/><ellipse cx="4" cy="-3" rx="2.4" ry="4.4" transform="rotate(-30 4 -3)" fill="#111"/><circle r="8.5" fill="none" stroke="#555" stroke-width="0.6"/></g>
<g transform="translate(221.500,192)"><rect x="-10" y="-10" width="20" height="20" fill="#b8b8b8"/><path d="M-7,-3 L-1,-7 L8,-7 L8,4 L2,8 L-7,8 Z" fill="#f2f2f2" stroke="#666" stroke-width="0.9"/><path d="M-7,-3 H2 V8 M2,-3 L8,-7" fill="none" stroke="#666" stroke-width="0.8"/><path d="M-8,-8 L-2,-3 L-8,2 Z M-2,-8 L3,-8 L-2,-3Z" fill="#3b9ad2" opacity="0.85"/></g>
<g transform="translate(261.500,192)"><rect x="-10" y="-10" width="20" height="20" fill="#b8b8b8"/><path d="M-8,8 V-6 C-8,-8 -7,-8.5 -5,-8.5 H5 C7,-8.5 8,-8 8,-6 V8" fill="none" stroke="#111" stroke-width="2"/><path d="M-3,-8 H3 L1.5,-2 V2 H-1.5 V-2 Z" fill="#1f74a8"/><rect x="-5" y="4" width="10" height="4" fill="#3b9ad2" stroke="#111" stroke-width="0.8"/><path d="M-9,8.5 H9" stroke="#111" stroke-width="1.6"/></g>
<g transform="translate(301.500,192)"><rect x="-10" y="-10" width="20" height="20" fill="#b8b8b8"/><path d="M-7,-9 H7 V-5 H-7 Z" fill="#e8e8e8" stroke="#555" stroke-width="0.8"/><path d="M-5,-5 H5 L2,0 H-2 Z" fill="#8a8a8a" stroke="#444" stroke-width="0.8"/><rect x="-2" y="0" width="4" height="9" fill="#e8b84a" stroke="#6a4a00" stroke-width="0.7"/><path d="M-2,2 L2,4 M-2,5 L2,7" stroke="#fff" stroke-width="1"/></g>
<path d="M330.500,186 L335.500,191 L330.500,196" fill="none" stroke="#222" stroke-width="2"/>
<rect x="5.5" y="205.5" width="325" height="31" fill="#f3f3f3" stroke="#c6c6c6"/>
<g transform="translate(17,221)"><path d="M-8,-7 H8 L1.8,0.5 V8 L-1.8,5.5 V0.5 Z" fill="#fff" stroke="#222" stroke-width="1.2" stroke-linejoin="round"/><path d="M-8,-7 H8" stroke="#1f74a8" stroke-width="2.4"/></g>
<polygon points="26,223.5 31,223.5 28.5,226.5" fill="#222"/>
<rect x="1" y="237" width="313" height="716" fill="#f7f7f7"/>
<rect x="314" y="237" width="19" height="716" fill="#efefef"/>
<rect x="322" y="647" width="5" height="274.500" fill="#7a7a7a"/>
<rect x="22" y="960" width="152" height="6.5" fill="#858585"/>
<line x1="0" y1="975.5" x2="336" y2="975.5" stroke="#c8c8c8"/>
<rect x="165" y="975" width="5" height="3" fill="#bdbdbd"/>
<polygon points="9.5,245 13.9,248.7 9.5,252.5" fill="#555"/>
<g transform="translate(36.5,249)" stroke="#5a4000" stroke-width="0.9" stroke-linejoin="round"><polygon points="-8.3,-2.9 -4.5,-5 -4.4,-6.900 -0.2,-4.9 -0.2,-1 2.7,0.7 2.7,8.8 -8.1,1" fill="#f5c818"/><polygon points="-4.4,-6.900 -0.2,-8.6 4.2,-6.6 -0.2,-4.9" fill="#fae88a"/><polygon points="-0.2,-4.9 4.2,-6.6 4.4,-2.2 -0.2,-1" fill="#f2d448"/><polygon points="-0.2,-1 4.4,-2.2 8.3,-0.5 2.7,0.7" fill="#fae88a"/><polygon points="2.7,0.7 8.3,-0.5 8.3,6.1 2.7,8.8" fill="#f2d448"/></g>
<text x="50" y="254.6" fill="#111" textLength="263" lengthAdjust="spacingAndGlyphs">(-) Wheel&lt;2&gt; (Default) &lt;&lt;Default&gt;_Dis</text>
<polygon points="9.5,269 13.9,272.7 9.5,276.5" fill="#555"/>
<g transform="translate(36.5,273)" stroke="#5a4000" stroke-width="0.9" stroke-linejoin="round"><polygon points="-8.3,-2.9 -4.5,-5 -4.4,-6.900 -0.2,-4.9 -0.2,-1 2.7,0.7 2.7,8.8 -8.1,1" fill="#f5c818"/><polygon points="-4.4,-6.900 -0.2,-8.6 4.2,-6.6 -0.2,-4.9" fill="#fae88a"/><polygon points="-0.2,-4.9 4.2,-6.6 4.4,-2.2 -0.2,-1" fill="#f2d448"/><polygon points="-0.2,-1 4.4,-2.2 8.3,-0.5 2.7,0.7" fill="#fae88a"/><polygon points="2.7,0.7 8.3,-0.5 8.3,6.1 2.7,8.8" fill="#f2d448"/></g>
<text x="50" y="278.6" fill="#111" textLength="263" lengthAdjust="spacingAndGlyphs">(-) Wheel&lt;3&gt; (Default) &lt;&lt;Default&gt;_Dis</text>
<polygon points="9.5,293 13.9,296.7 9.5,300.5" fill="#555"/>
<g transform="translate(36.5,297)" stroke="#5a4000" stroke-width="0.9" stroke-linejoin="round"><polygon points="-8.3,-2.9 -4.5,-5 -4.4,-6.900 -0.2,-4.9 -0.2,-1 2.7,0.7 2.7,8.8 -8.1,1" fill="#f5c818"/><polygon points="-4.4,-6.900 -0.2,-8.6 4.2,-6.6 -0.2,-4.9" fill="#fae88a"/><polygon points="-0.2,-4.9 4.2,-6.6 4.4,-2.2 -0.2,-1" fill="#f2d448"/><polygon points="-0.2,-1 4.4,-2.2 8.3,-0.5 2.7,0.7" fill="#fae88a"/><polygon points="2.7,0.7 8.3,-0.5 8.3,6.1 2.7,8.8" fill="#f2d448"/></g>
<text x="50" y="302.6" fill="#111" textLength="263" lengthAdjust="spacingAndGlyphs">(-) Wheel&lt;4&gt; (Default) &lt;&lt;Default&gt;_Dis</text>
<polygon points="9.5,317 13.9,320.7 9.5,324.5" fill="#555"/>
<g transform="translate(36.5,321)" stroke="#5a4000" stroke-width="0.9" stroke-linejoin="round"><polygon points="-8.3,-2.9 -4.5,-5 -4.4,-6.900 -0.2,-4.9 -0.2,-1 2.7,0.7 2.7,8.8 -8.1,1" fill="#f5c818"/><polygon points="-4.4,-6.900 -0.2,-8.6 4.2,-6.6 -0.2,-4.9" fill="#fae88a"/><polygon points="-0.2,-4.9 4.2,-6.6 4.4,-2.2 -0.2,-1" fill="#f2d448"/><polygon points="-0.2,-1 4.4,-2.2 8.3,-0.5 2.7,0.7" fill="#fae88a"/><polygon points="2.7,0.7 8.3,-0.5 8.3,6.1 2.7,8.8" fill="#f2d448"/></g>
<text x="50" y="326.6" fill="#111" textLength="263" lengthAdjust="spacingAndGlyphs">(-) Wheel&lt;5&gt; (Default) &lt;&lt;Default&gt;_Dis</text>
<polygon points="9.5,341 13.9,344.7 9.5,348.5" fill="#555"/>
<g transform="translate(36.5,345)" stroke="#5a4000" stroke-width="0.9" stroke-linejoin="round"><polygon points="-8.3,-2.9 -4.5,-5 -4.4,-6.900 -0.2,-4.9 -0.2,-1 2.7,0.7 2.7,8.8 -8.1,1" fill="#f5c818"/><polygon points="-4.4,-6.900 -0.2,-8.6 4.2,-6.6 -0.2,-4.9" fill="#fae88a"/><polygon points="-0.2,-4.9 4.2,-6.6 4.4,-2.2 -0.2,-1" fill="#f2d448"/><polygon points="-0.2,-1 4.4,-2.2 8.3,-0.5 2.7,0.7" fill="#fae88a"/><polygon points="2.7,0.7 8.3,-0.5 8.3,6.1 2.7,8.8" fill="#f2d448"/></g>
<text x="50" y="350.6" fill="#111" textLength="263" lengthAdjust="spacingAndGlyphs">(-) Wheel&lt;6&gt; (Default) &lt;&lt;Default&gt;_Dis</text>
<polygon points="9.5,365 13.9,368.7 9.5,372.5" fill="#555"/>
<g transform="translate(36.5,369)" stroke="#5a4000" stroke-width="0.9" stroke-linejoin="round"><polygon points="-8.3,-2.9 -4.5,-5 -4.4,-6.900 -0.2,-4.9 -0.2,-1 2.7,0.7 2.7,8.8 -8.1,1" fill="#f5c818"/><polygon points="-4.4,-6.900 -0.2,-8.6 4.2,-6.6 -0.2,-4.9" fill="#fae88a"/><polygon points="-0.2,-4.9 4.2,-6.6 4.4,-2.2 -0.2,-1" fill="#f2d448"/><polygon points="-0.2,-1 4.4,-2.2 8.3,-0.5 2.7,0.7" fill="#fae88a"/><polygon points="2.7,0.7 8.3,-0.5 8.3,6.1 2.7,8.8" fill="#f2d448"/></g>
<text x="50" y="374.6" fill="#111" textLength="264" lengthAdjust="spacingAndGlyphs">(-) Egg tray&lt;1&gt; (Default) &lt;&lt;Default&gt;_D</text>
<polygon points="6.5,390.5 16.5,390.5 11.5,396" fill="#4d4d4d"/>
<g transform="translate(36.5,393)" stroke="#5a4000" stroke-width="0.9" stroke-linejoin="round"><polygon points="-8.3,-2.9 -4.5,-5 -4.4,-6.900 -0.2,-4.9 -0.2,-1 2.7,0.7 2.7,8.8 -8.1,1" fill="#f5c818"/><polygon points="-4.4,-6.900 -0.2,-8.6 4.2,-6.6 -0.2,-4.9" fill="#fae88a"/><polygon points="-0.2,-4.9 4.2,-6.6 4.4,-2.2 -0.2,-1" fill="#f2d448"/><polygon points="-0.2,-1 4.4,-2.2 8.3,-0.5 2.7,0.7" fill="#fae88a"/><polygon points="2.7,0.7 8.3,-0.5 8.3,6.1 2.7,8.8" fill="#f2d448"/></g>
<text x="50" y="398.6" fill="#111" textLength="264" lengthAdjust="spacingAndGlyphs">(-) robotic arm assem&lt;1&gt; (Default) &lt;&lt;D</text>
<polygon points="32.5,413 36.9,416.7 32.5,420.5" fill="#555"/>
<g transform="translate(59,417)"><path d="M-8.5,8.5 L-8.5,-8 L-2,-8 L-0.5,-6 L8.5,-6 L8.5,8.5 Z" fill="#f4f4f4" stroke="#333" stroke-width="1.2" stroke-linejoin="round"/><path d="M-8.5,-4 H8.5" stroke="#333" stroke-width="0.8"/><path d="M-3,0 L2,5 C3.5,6.5 5.5,4.5 4,3 L-1,-2 C-3,-4 -5.5,-1.5 -3.5,0.5 L1,5" fill="none" stroke="#1f74a8" stroke-width="1.3"/></g>
<text x="73" y="422.6" fill="#111" textLength="227" lengthAdjust="spacingAndGlyphs">Mates in Rocker Bogie Mechanism</text>
<g transform="translate(59,441)"><path d="M-8.5,8.5 L-8.5,-8 L-2,-8 L-0.5,-6 L8.5,-6 L8.5,8.5 Z" fill="#f4f4f4" stroke="#333" stroke-width="1.2" stroke-linejoin="round"/><path d="M-8.5,-4 H8.5" stroke="#333" stroke-width="0.8"/><circle cx="1" cy="2" r="4.6" fill="#fff" stroke="#333" stroke-width="1"/><path d="M1,-0.5 V2 H3.5" fill="none" stroke="#333" stroke-width="1"/><path d="M-6,1 l2.5,3 l2,-3.5" fill="none" stroke="#1f74a8" stroke-width="1.5"/></g>
<text x="73" y="446.6" fill="#111" textLength="47" lengthAdjust="spacingAndGlyphs">History</text>
<g transform="translate(59,465)"><path d="M-8.5,8.5 L-8.5,-8 L-2,-8 L-0.5,-6 L8.5,-6 L8.5,8.5 Z" fill="#f4f4f4" stroke="#333" stroke-width="1.2" stroke-linejoin="round"/><path d="M-8.5,-4 H8.5" stroke="#333" stroke-width="0.8"/><circle cx="0.5" cy="2" r="4.8" fill="#fff" stroke="#333" stroke-width="1.1"/><path d="M0.5,2 L3.5,-1" stroke="#333" stroke-width="1.1"/><path d="M3.2,5.8 A4.8,4.8 0 0 0 5.3,2 L0.5,2 Z" fill="#e63a1a"/></g>
<text x="73" y="470.6" fill="#111" textLength="50" lengthAdjust="spacingAndGlyphs">Sensors</text>
<polygon points="32.5,485 36.9,488.7 32.5,492.5" fill="#555"/>
<g transform="translate(59,489)"><path d="M-8.5,8.5 L-8.5,-8 L-2,-8 L-0.5,-6 L8.5,-6 L8.5,8.5 Z" fill="#f4f4f4" stroke="#333" stroke-width="1.2" stroke-linejoin="round"/><path d="M-8.5,-4 H8.5" stroke="#333" stroke-width="0.8"/><path d="M-4,-2 H2 L4.5,0.5 V6 H-4 Z" fill="#fff" stroke="#333" stroke-width="1"/></g>
<text x="73" y="494.6" fill="#111" textLength="93" lengthAdjust="spacingAndGlyphs">Design Binder</text>
<polygon points="32.5,509 36.9,512.7 32.5,516.5" fill="#555"/>
<g transform="translate(59,513)"><path d="M-8.5,8.5 L-8.5,-8 L-2,-8 L-0.5,-6 L8.5,-6 L8.5,8.5 Z" fill="#f4f4f4" stroke="#333" stroke-width="1.2" stroke-linejoin="round"/><path d="M-8.5,-4 H8.5" stroke="#333" stroke-width="0.8"/><text x="0" y="7" text-anchor="middle" font-family="Liberation Serif, serif" font-weight="bold" font-size="12.5" fill="#1f74a8">A</text></g>
<text x="73" y="518.6" fill="#111" textLength="80" lengthAdjust="spacingAndGlyphs">Annotations</text>
<polygon points="32.5,533 36.9,536.7 32.5,540.5" fill="#555"/>
<g transform="translate(59,537)"><path d="M-8.5,8.5 L-8.5,-8 L-2,-8 L-0.5,-6 L8.5,-6 L8.5,8.5 Z" fill="#f4f4f4" stroke="#333" stroke-width="1.2" stroke-linejoin="round"/><path d="M-8.5,-4 H8.5" stroke="#333" stroke-width="0.8"/><path d="M-3.5,-1.5 L0.5,-3.5 L4.5,-1.5 L4.5,4 L0.5,6.5 L-3.5,4 Z" fill="#1f74a8" stroke="#0e3d5c" stroke-width="0.8"/><path d="M-3.5,-1.5 L0.5,0.8 L4.5,-1.5 M0.5,0.8 V6.5" fill="none" stroke="#bfe2f5" stroke-width="0.8"/></g>
<text x="73" y="542.6" fill="#111" textLength="100" lengthAdjust="spacingAndGlyphs">Solid Bodies(6)</text>
<g transform="translate(59,561)"><path d="M-3,-6.5 H8 M-3,-1 H8 M-3,4.5 H2" stroke="#222" stroke-width="1.7"/><circle cx="-7" cy="-6.5" r="1.9" fill="#fff" stroke="#444" stroke-width="0.9"/><circle cx="-7" cy="-1" r="1.9" fill="#4aa3d8" stroke="#1a5f8a" stroke-width="0.8"/><circle cx="-7" cy="4.5" r="1.9" fill="#f2c21c" stroke="#8a6a00" stroke-width="0.8"/><circle cx="6" cy="5.5" r="3" fill="#222"/><circle cx="6" cy="5.5" r="4" fill="none" stroke="#222" stroke-width="1.6" stroke-dasharray="1.6 1.5"/><circle cx="6" cy="5.5" r="1.1" fill="#f7f7f7"/></g>
<text x="73" y="566.6" fill="#111" textLength="164" lengthAdjust="spacingAndGlyphs">Material &lt;not specified&gt;</text>
<g transform="translate(59,585)"><path d="M-6,-5.5 L5.5,-8.5 L5.5,5.5 L-6,8.5 Z" fill="#fbfbfb" stroke="#444" stroke-width="1.1"/><path d="M0,-10 V10" stroke="#444" stroke-width="1" stroke-dasharray="3 2"/></g>
<text x="73" y="590.6" fill="#111" textLength="74" lengthAdjust="spacingAndGlyphs">Front Plane</text>
<g transform="translate(59,609)"><path d="M-6,-5.5 L5.5,-8.5 L5.5,5.5 L-6,8.5 Z" fill="#fbfbfb" stroke="#444" stroke-width="1.1"/><path d="M0,-10 V10" stroke="#444" stroke-width="1" stroke-dasharray="3 2"/></g>
<text x="73" y="614.6" fill="#111" textLength="66" lengthAdjust="spacingAndGlyphs">Top Plane</text>
<g transform="translate(59,633)"><path d="M-6,-5.5 L5.5,-8.5 L5.5,5.5 L-6,8.5 Z" fill="#fbfbfb" stroke="#444" stroke-width="1.1"/><path d="M0,-10 V10" stroke="#444" stroke-width="1" stroke-dasharray="3 2"/></g>
<text x="73" y="638.6" fill="#111" textLength="75" lengthAdjust="spacingAndGlyphs">Right Plane</text>
<g transform="translate(59,657)"><path d="M-5.5,-6 V6.5 H6" fill="none" stroke="#111" stroke-width="1.6"/><polygon points="-8.5,-5 -5.5,-10 -2.5,-5" fill="#111"/><polygon points="5,3.5 10,6.5 5,9.5" fill="#111"/><rect x="-7.5" y="4.5" width="4" height="4" fill="#111"/></g>
<text x="73" y="662.6" fill="#111" textLength="41" lengthAdjust="spacingAndGlyphs">Origin</text>
<g transform="translate(59,681)"><path d="M-8,-6 L-5,-9 L9,-9 L9,5.5 L6,8.5 L-8,8.5 Z" fill="#2d8dc4" stroke="#0e3046" stroke-width="1.2" stroke-linejoin="round"/><path d="M-8,-6 H6 V8.5 M6,-6 L9,-9" fill="none" stroke="#0e3046" stroke-width="1"/><ellipse cx="-1" cy="1.2" rx="4.3" ry="4.8" fill="#5db4e2" stroke="#0e3046" stroke-width="1.1"/><ellipse cx="-0.4" cy="1.2" rx="2.6" ry="3.2" fill="#2d8dc4" stroke="#0e3046" stroke-width="0.8"/></g>
<text x="73" y="686.6" fill="#111" textLength="90" lengthAdjust="spacingAndGlyphs">Base-2-solid1</text>
<g transform="translate(59,705)"><path d="M-8,-6 L-5,-9 L9,-9 L9,5.5 L6,8.5 L-8,8.5 Z" fill="#2d8dc4" stroke="#0e3046" stroke-width="1.2" stroke-linejoin="round"/><path d="M-8,-6 H6 V8.5 M6,-6 L9,-9" fill="none" stroke="#0e3046" stroke-width="1"/><ellipse cx="-1" cy="1.2" rx="4.3" ry="4.8" fill="#5db4e2" stroke="#0e3046" stroke-width="1.1"/><ellipse cx="-0.4" cy="1.2" rx="2.6" ry="3.2" fill="#2d8dc4" stroke="#0e3046" stroke-width="0.8"/></g>
<text x="73" y="710.6" fill="#111" textLength="97" lengthAdjust="spacingAndGlyphs">Link 1-1-solid1</text>
<g transform="translate(59,729)"><path d="M-8,-6 L-5,-9 L9,-9 L9,5.5 L6,8.5 L-8,8.5 Z" fill="#2d8dc4" stroke="#0e3046" stroke-width="1.2" stroke-linejoin="round"/><path d="M-8,-6 H6 V8.5 M6,-6 L9,-9" fill="none" stroke="#0e3046" stroke-width="1"/><ellipse cx="-1" cy="1.2" rx="4.3" ry="4.8" fill="#5db4e2" stroke="#0e3046" stroke-width="1.1"/><ellipse cx="-0.4" cy="1.2" rx="2.6" ry="3.2" fill="#2d8dc4" stroke="#0e3046" stroke-width="0.8"/></g>
<text x="73" y="734.6" fill="#111" textLength="93" lengthAdjust="spacingAndGlyphs">Part1-1-solid1</text>
<g transform="translate(59,753)"><path d="M-8,-6 L-5,-9 L9,-9 L9,5.5 L6,8.5 L-8,8.5 Z" fill="#2d8dc4" stroke="#0e3046" stroke-width="1.2" stroke-linejoin="round"/><path d="M-8,-6 H6 V8.5 M6,-6 L9,-9" fill="none" stroke="#0e3046" stroke-width="1"/><ellipse cx="-1" cy="1.2" rx="4.3" ry="4.8" fill="#5db4e2" stroke="#0e3046" stroke-width="1.1"/><ellipse cx="-0.4" cy="1.2" rx="2.6" ry="3.2" fill="#2d8dc4" stroke="#0e3046" stroke-width="0.8"/></g>
<text x="73" y="758.6" fill="#111" textLength="110" lengthAdjust="spacingAndGlyphs">Assem1-2-solid1</text>
<g transform="translate(59,777)"><path d="M-8,-6 L-5,-9 L9,-9 L9,5.5 L6,8.5 L-8,8.5 Z" fill="#2d8dc4" stroke="#0e3046" stroke-width="1.2" stroke-linejoin="round"/><path d="M-8,-6 H6 V8.5 M6,-6 L9,-9" fill="none" stroke="#0e3046" stroke-width="1"/><ellipse cx="-1" cy="1.2" rx="4.3" ry="4.8" fill="#5db4e2" stroke="#0e3046" stroke-width="1.1"/><ellipse cx="-0.4" cy="1.2" rx="2.6" ry="3.2" fill="#2d8dc4" stroke="#0e3046" stroke-width="0.8"/></g>
<text x="73" y="782.6" fill="#111" textLength="111" lengthAdjust="spacingAndGlyphs">Assem1-2-solid2</text>
<g transform="translate(59,801)"><path d="M-8,-6 L-5,-9 L9,-9 L9,5.5 L6,8.5 L-8,8.5 Z" fill="#2d8dc4" stroke="#0e3046" stroke-width="1.2" stroke-linejoin="round"/><path d="M-8,-6 H6 V8.5 M6,-6 L9,-9" fill="none" stroke="#0e3046" stroke-width="1"/><ellipse cx="-1" cy="1.2" rx="4.3" ry="4.8" fill="#5db4e2" stroke="#0e3046" stroke-width="1.1"/><ellipse cx="-0.4" cy="1.2" rx="2.6" ry="3.2" fill="#2d8dc4" stroke="#0e3046" stroke-width="0.8"/></g>
<text x="73" y="806.6" fill="#111" textLength="110" lengthAdjust="spacingAndGlyphs">Assem1-2-solid3</text>
<polygon points="9.5,821 13.9,824.7 9.5,828.5" fill="#555"/>
<g transform="translate(36.5,825)" stroke-linejoin="round"><g stroke="#5a4000" stroke-width="0.9"><polygon points="-8.5,-2 -3,-5.500 -3,0 2.5,3 2.5,9 -8.5,2.500" fill="#f5c818"/><polygon points="2.500,3 8,0.500 8,6 2.500,9" fill="#f2d448"/><polygon points="-8.500,-2 -3,-5.500 0,-4 -5,-0.500" fill="#fae88a"/></g><g stroke="#123a55" stroke-width="0.9"><polygon points="-3,-5 2,-8 7.500,-5.500 7.500,1 2.500,3.500 -3,0.500" fill="#6cbde8"/><polygon points="-3,-5 2,-8 7.500,-5.500 2.500,-2.500" fill="#a8dcf5"/><path d="M2.500,-2.500 V3.500" fill="none"/></g></g>
<text x="50" y="830.6" fill="#111" textLength="263" lengthAdjust="spacingAndGlyphs">(-) Assem2&lt;1&gt; (Default) &lt;Display State</text>
<polygon points="9.5,845 13.9,848.7 9.5,852.5" fill="#555"/>
<g transform="translate(36.5,849)" stroke="#5a4000" stroke-width="0.9" stroke-linejoin="round"><polygon points="-8.3,-2.9 -4.5,-5 -4.4,-6.900 -0.2,-4.9 -0.2,-1 2.7,0.7 2.7,8.8 -8.1,1" fill="#f5c818"/><polygon points="-4.4,-6.900 -0.2,-8.6 4.2,-6.6 -0.2,-4.9" fill="#fae88a"/><polygon points="-0.2,-4.9 4.2,-6.6 4.4,-2.2 -0.2,-1" fill="#f2d448"/><polygon points="-0.2,-1 4.4,-2.2 8.3,-0.5 2.7,0.7" fill="#fae88a"/><polygon points="2.7,0.7 8.3,-0.5 8.3,6.1 2.7,8.8" fill="#f2d448"/></g>
<text x="50" y="854.6" fill="#111" textLength="264" lengthAdjust="spacingAndGlyphs">(-) End_sub2&lt;4&gt; (Default) &lt;&lt;Default&gt;_I</text>
<polygon points="9.5,869 13.9,872.7 9.5,876.5" fill="#555"/>
<g transform="translate(36.5,873)" stroke="#5a4000" stroke-width="0.9" stroke-linejoin="round"><polygon points="-8.3,-2.9 -4.5,-5 -4.4,-6.900 -0.2,-4.9 -0.2,-1 2.7,0.7 2.7,8.8 -8.1,1" fill="#f5c818"/><polygon points="-4.4,-6.900 -0.2,-8.6 4.2,-6.6 -0.2,-4.9" fill="#fae88a"/><polygon points="-0.2,-4.9 4.2,-6.6 4.4,-2.2 -0.2,-1" fill="#f2d448"/><polygon points="-0.2,-1 4.4,-2.2 8.3,-0.5 2.7,0.7" fill="#fae88a"/><polygon points="2.7,0.7 8.3,-0.5 8.3,6.1 2.7,8.8" fill="#f2d448"/></g>
<text x="50" y="878.6" fill="#111" textLength="264" lengthAdjust="spacingAndGlyphs">(-) End_sub2&lt;5&gt; (Default) &lt;&lt;Default&gt;_I</text>
<polygon points="9.5,893 13.9,896.7 9.5,900.5" fill="#555"/>
<g transform="translate(36.5,897)" stroke="#5a4000" stroke-width="0.9" stroke-linejoin="round"><polygon points="-8.3,-2.9 -4.5,-5 -4.4,-6.900 -0.2,-4.9 -0.2,-1 2.7,0.7 2.7,8.8 -8.1,1" fill="#f5c818"/><polygon points="-4.4,-6.900 -0.2,-8.6 4.2,-6.6 -0.2,-4.9" fill="#fae88a"/><polygon points="-0.2,-4.9 4.2,-6.6 4.4,-2.2 -0.2,-1" fill="#f2d448"/><polygon points="-0.2,-1 4.4,-2.2 8.3,-0.5 2.7,0.7" fill="#fae88a"/><polygon points="2.7,0.7 8.3,-0.5 8.3,6.1 2.7,8.8" fill="#f2d448"/></g>
<text x="50" y="902.6" fill="#111" textLength="264" lengthAdjust="spacingAndGlyphs">(-) End_sub2&lt;6&gt; (Default) &lt;&lt;Default&gt;_I</text>
<polygon points="9.5,917 13.9,920.7 9.5,924.5" fill="#555"/>
<g transform="translate(36.5,921)" stroke="#5a4000" stroke-width="0.9" stroke-linejoin="round"><polygon points="-8.3,-2.9 -4.5,-5 -4.4,-6.900 -0.2,-4.9 -0.2,-1 2.7,0.7 2.7,8.8 -8.1,1" fill="#f5c818"/><polygon points="-4.4,-6.900 -0.2,-8.6 4.2,-6.6 -0.2,-4.9" fill="#fae88a"/><polygon points="-0.2,-4.9 4.2,-6.6 4.4,-2.2 -0.2,-1" fill="#f2d448"/><polygon points="-0.2,-1 4.4,-2.2 8.3,-0.5 2.7,0.7" fill="#fae88a"/><polygon points="2.7,0.7 8.3,-0.5 8.3,6.1 2.7,8.8" fill="#f2d448"/></g>
<text x="50" y="926.6" fill="#111" textLength="264" lengthAdjust="spacingAndGlyphs">(-) egg&lt;1&gt; (Default) &lt;&lt;Default&gt;_Displa</text>
<polygon points="9.5,941 13.9,944.7 9.5,948.5" fill="#555"/>
<g transform="translate(36.5,945)" fill="none" stroke="#1f74a8" stroke-width="1.4"><path d="M-8,6 V-4 A2.7,2.7 0 0 1 -2.6,-4 V8 M-5.3,5 V-3"/><path d="M1.5,8 V-4 A2.7,2.7 0 0 1 6.9,-4 V8 M4.2,5 V-3"/><path d="M-8,6 A1.4,1.4 0 0 0 -5.3,6 M1.5,8 A1.4,1.4 0 0 0 4.2,8" /></g>
<text x="50" y="950.6" fill="#111" textLength="40" lengthAdjust="spacingAndGlyphs">Mates</text>
</svg>
<svg width="14" height="52" viewBox="336 523 14 52" style="position:absolute;left:336px;top:523px"><rect x="335.5" y="525.5" width="12" height="48" fill="#f4f4f4" stroke="#8a8a8a"/><rect x="335" y="526" width="2" height="47" fill="#f4f4f4"/><circle cx="341" cy="549" r="2.3" fill="#e6e6e6" stroke="#9a9a9a" stroke-width="0.8"/></svg>
<svg width="36" height="214" viewBox="1884 178 36 214" style="position:absolute;left:1884px;top:178px">
<rect x="1887.5" y="180.5" width="34" height="29.7" fill="#f5f5f5" stroke="#999"/>
<rect x="1887.5" y="210.2" width="34" height="29.8" fill="#d1d1d1" stroke="#999"/>
<rect x="1887.5" y="240.0" width="34" height="29.8" fill="#d1d1d1" stroke="#999"/>
<rect x="1887.5" y="269.8" width="34" height="29.7" fill="#d1d1d1" stroke="#999"/>
<rect x="1887.5" y="299.5" width="34" height="29.8" fill="#d1d1d1" stroke="#999"/>
<rect x="1887.5" y="329.3" width="34" height="29.7" fill="#d1d1d1" stroke="#999"/>
<rect x="1887.5" y="359.0" width="34" height="30.5" fill="#d1d1d1" stroke="#999"/>
<g transform="translate(1903.5,194.8)"><circle r="9.5" fill="#145a86"/><circle r="9.5" fill="none" stroke="#0a3450" stroke-width="1"/><circle r="6" fill="none" stroke="#7db6d8" stroke-width="0.8"/><path d="M-2,-3.5 L3.5,0 L-2,3.5 Z" fill="none" stroke="#d5ecf8" stroke-width="1"/><path d="M0,-9 V-6 M0,6 V9 M-9,0 H-6 M6,0 H9" stroke="#9cc9e4" stroke-width="1"/></g>
<g transform="translate(1903.5,224.6)"><path d="M-9,0 L0,-8.5 L9,0" fill="none" stroke="#16527a" stroke-width="2.4"/><path d="M-6,-0.5 L-6,8 L6,8 L6,-0.5 L0,-6 Z" fill="#fff" stroke="#333" stroke-width="1.2"/><rect x="-1" y="2" width="4" height="6" fill="#fff" stroke="#333" stroke-width="1"/></g>
<g transform="translate(1903.5,254.4)"><g fill="#f4f4f4" stroke="#333" stroke-width="1"><path d="M-6,-5 L-2,-7 L-2,7 L-6,9 Z"/><path d="M-2,-7 L2,-8.5 L2,6 L-2,7 Z"/><path d="M2,-8.5 L6,-9 L6,5 L2,6 Z"/></g></g>
<g transform="translate(1903.5,284.1)"><path d="M-9,8 L-9,-7 L-3,-7 L-1.5,-5 L6,-5 L6,-2" fill="#f4f4f4" stroke="#333" stroke-width="1.2"/><path d="M-9,8 L-5,-2 L10,-2 L6,8 Z" fill="#f1f1f1" stroke="#333" stroke-width="1.2"/></g>
<g transform="translate(1903.5,313.9)"><rect x="-9" y="-8" width="18" height="16" rx="1.5" fill="#f2f2f2" stroke="#333" stroke-width="1.2"/><path d="M-6,-5 H1 V-1 H-1 V2 H3 V6 H-6 V2 H-3 V-1 H-6 Z" fill="#f2c21c" stroke="#6a5000" stroke-width="0.7"/><rect x="3" y="-5" width="4" height="3" fill="#f2c21c" stroke="#6a5000" stroke-width="0.6"/><rect x="5" y="0" width="2.5" height="6" fill="#999"/></g>
<g transform="translate(1903.5,343.6)"><circle r="8.5" fill="#e63a1a"/><path d="M0,0 L-8.5,0 A8.5,8.5 0 0 0 0,8.5 Z" fill="#2a7fd0"/><path d="M0,0 L0,8.5 A8.5,8.5 0 0 0 8.5,0 Z" fill="#f2c21c"/><path d="M0,0 L-8.5,0 A8.5,8.5 0 0 1 -2,-8.2 Z" fill="#2aa02a"/><circle r="8.5" fill="none" stroke="#666" stroke-width="0.6"/></g>
<g transform="translate(1903.5,373.8)"><rect x="-8.500" y="-8.5" width="17" height="17" fill="#fff" stroke="#123a55" stroke-width="1.2"/><rect x="-8.5" y="-8.5" width="17" height="3.5" fill="#1f74a8"/><path d="M-6,-2 h3 M-6,1.5 h3 M-6,5 h3" stroke="#1f74a8" stroke-width="1.8"/><path d="M-1.500,-2 h8 M-1.500,1.5 h8 M-1.500,5 h8" stroke="#222" stroke-width="1"/></g>
</svg>
<svg width="1920" height="46" viewBox="0 975 1920 46" style="position:absolute;left:0;top:975px" font-family="Liberation Sans, sans-serif">
<rect x="0" y="978" width="1920" height="21" fill="#f0f0f0"/>
<line x1="0" y1="978.5" x2="1920" y2="978.5" stroke="#9c9c9c"/>
<rect x="337" y="975" width="1583" height="3" fill="#fff"/>
<line x1="337" y1="977.5" x2="1920" y2="977.5" stroke="#a8a8a8"/>
<rect x="2" y="978.5" width="80.5" height="20" fill="#a4a3bb" stroke="#6a6a80"/>
<rect x="2.5" y="979.5" width="20" height="18.500" fill="#aaa9c1" stroke="#84839c"/>
<rect x="22.5" y="979.5" width="20" height="18.500" fill="#aaa9c1" stroke="#84839c"/>
<rect x="42.5" y="979.5" width="20" height="18.500" fill="#aaa9c1" stroke="#84839c"/>
<rect x="62.5" y="979.5" width="20" height="18.500" fill="#aaa9c1" stroke="#84839c"/>
<polygon points="16,984 16,994 9,989" fill="#85849c"/><rect x="7" y="984" width="1.6" height="10" fill="#85849c"/>
<polygon points="35,984 35,994 28,989" fill="#85849c"/>
<polygon points="49,984 49,994 56,989" fill="#85849c"/>
<polygon points="68,984 68,994 75,989" fill="#85849c"/><rect x="75.5" y="984" width="1.6" height="10" fill="#85849c"/>
<rect x="83" y="979" width="75" height="19.500" fill="#f6f6f6"/>
<text x="98" y="994" font-size="15.5" font-weight="bold" textLength="49" lengthAdjust="spacingAndGlyphs" fill="#111">Model</text>
<rect x="158.500" y="979.5" width="89" height="19" fill="#d1d1d1" stroke="#8c8c8c"/>
<text x="170" y="994" font-size="15.5" textLength="65" lengthAdjust="spacingAndGlyphs" fill="#111">3D Views</text>
<rect x="247.500" y="979.5" width="144" height="19" fill="#d1d1d1" stroke="#8c8c8c"/>
<text x="261" y="994" font-size="15.5" textLength="106" lengthAdjust="spacingAndGlyphs" fill="#111">Motion Study 1</text>
<line x1="0" y1="998.5" x2="1920" y2="998.5" stroke="#9c9c9c"/>
<rect x="0" y="999" width="1920" height="22" fill="#f2f2f2"/>
<line x1="0" y1="1020" x2="1920" y2="1020" stroke="#444" stroke-width="2"/>
<text x="1.5" y="1017" font-size="15" textLength="229" lengthAdjust="spacingAndGlyphs" fill="#111">SOLIDWORKS Premium 2023 SP0.1</text>
<text x="1445" y="1017" font-size="15" textLength="97" lengthAdjust="spacingAndGlyphs" fill="#111">Under Defined</text>
<text x="1560" y="1017" font-size="15" textLength="114" lengthAdjust="spacingAndGlyphs" fill="#111">Editing Assembly</text>
<text x="1799" y="1017" font-size="15" textLength="44" lengthAdjust="spacingAndGlyphs" fill="#111">MMGS</text>
<polygon points="1868,1014 1875,1014 1871.5,1010.5" fill="#222"/>
<g transform="translate(1909,1010)"><path d="M-8,-2 L2,-7 L9,1 L-1,7 Z" fill="#f4f4f4" stroke="#444" stroke-width="1.2"/><path d="M-4,-1 L3,-4 M-2,2 L5,-1" stroke="#444" stroke-width="1"/></g>
</svg>
</body>
</html>
